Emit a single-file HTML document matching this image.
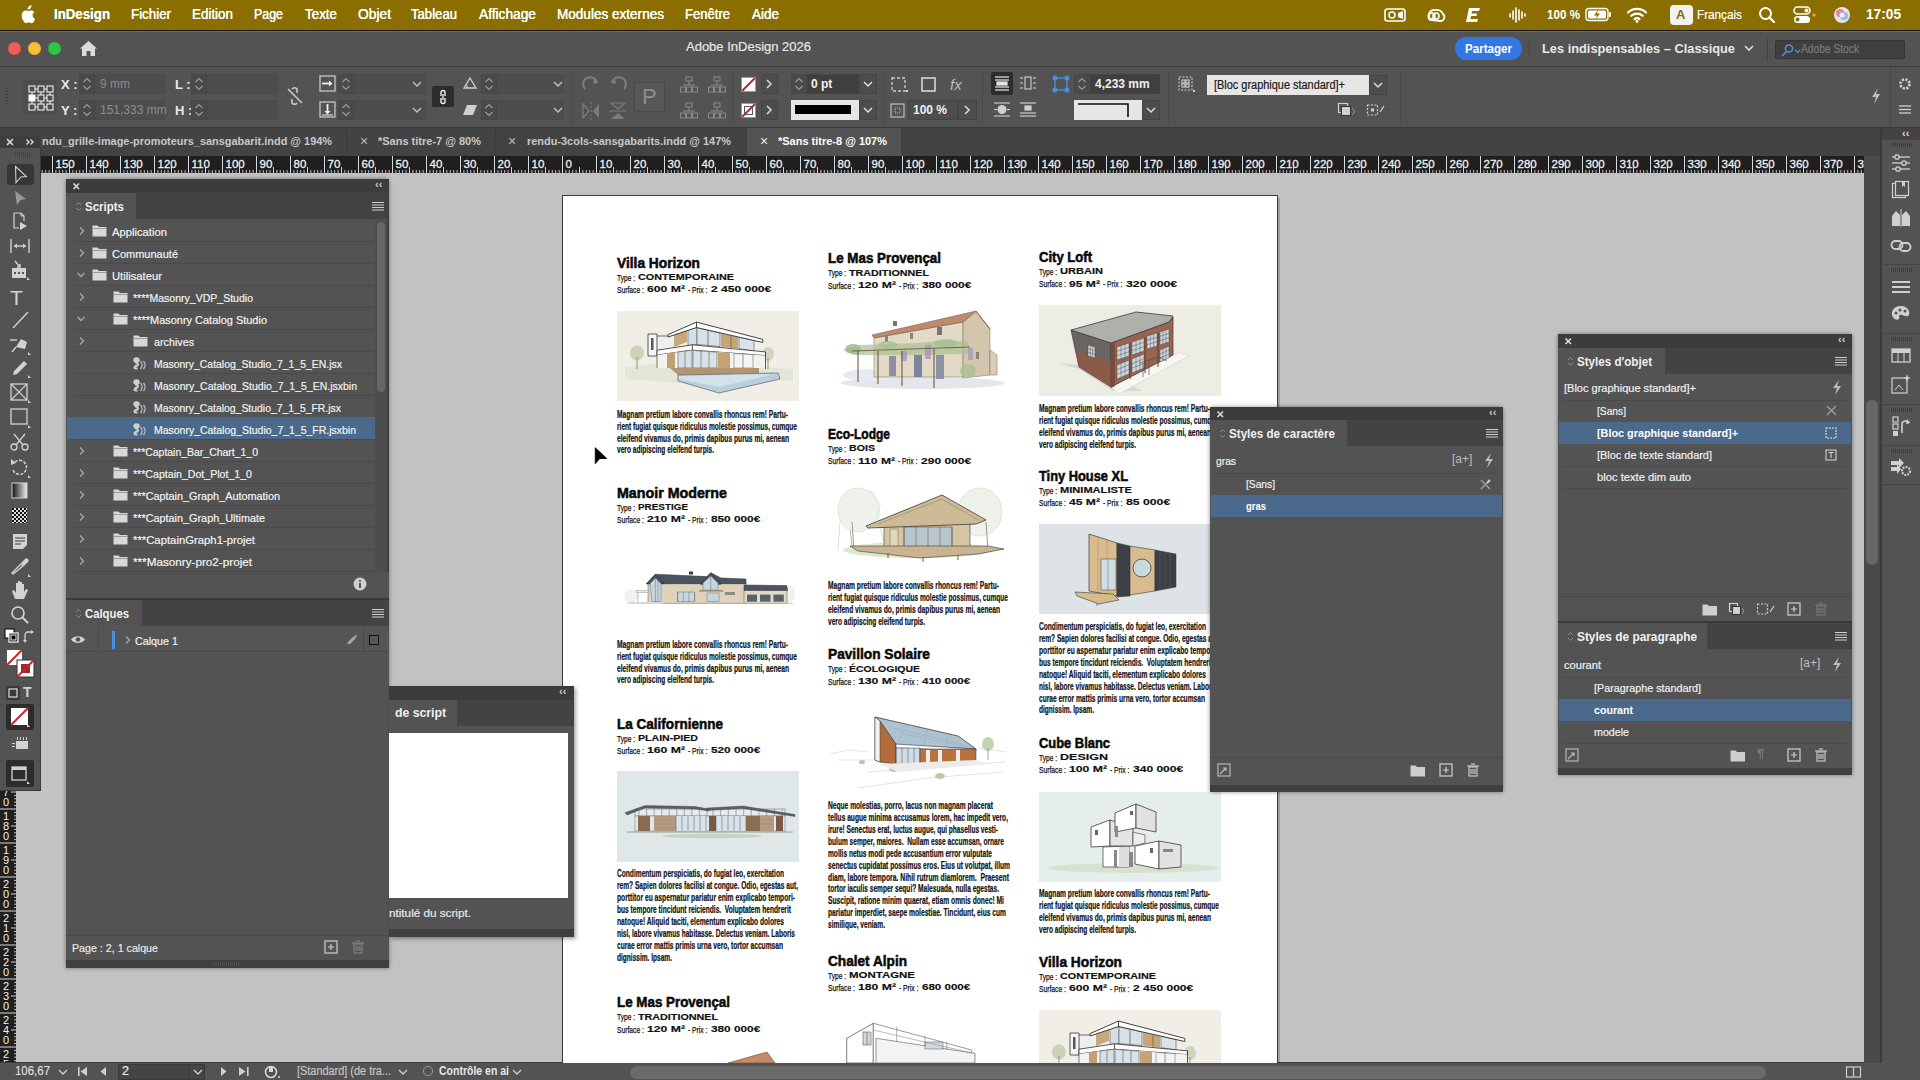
<!DOCTYPE html>
<html><head><meta charset="utf-8"><style>
html,body{margin:0;padding:0;width:1920px;height:1080px;overflow:hidden;background:#c2c2c2;font-family:"Liberation Sans",sans-serif;}
div,span,svg{box-sizing:border-box;}
.pg{position:absolute;color:#000;white-space:nowrap;}
</style></head><body>
<div style="position:absolute;left:0px;top:0px;width:1920px;height:30px;background:#8a6f00;"></div>
<div style="position:absolute;left:0px;top:30px;width:1920px;height:1px;background:#1a1400;"></div>
<svg style="position:absolute;left:19px;top:5px;" width="16" height="19" viewBox="0 0 16 19"><path d="M11.5 3.2c.7-.9 1.2-2 1.1-3.2-1 .1-2.2.7-2.9 1.5-.6.7-1.2 1.9-1 3 1.1.1 2.2-.5 2.8-1.3zM13.6 10.2c0-2 1.6-3 1.7-3-1-1.4-2.4-1.6-2.9-1.6-1.2-.1-2.4.7-3 .7-.6 0-1.6-.7-2.6-.7C5.4 5.6 4.1 6.4 3.4 7.6c-1.5 2.6-.4 6.4 1.1 8.5.7 1 1.5 2.2 2.6 2.1 1-.1 1.4-.7 2.7-.7s1.6.7 2.7.7c1.1 0 1.8-1 2.5-2 .8-1.1 1.1-2.2 1.1-2.3 0 0-2.5-.9-2.5-3.7z" fill="#fff"/></svg>
<div id="f0" style="position:absolute;left:54px;top:6px;font-size:14px;line-height:16px;font-weight:bold;color:#ffffff;white-space:nowrap;transform-origin:0 0;transform:scaleX(0.9471);text-shadow:0 0 0.4px #fff;">InDesign</div>
<div id="f1" style="position:absolute;left:131px;top:6px;font-size:14px;line-height:16px;font-weight:500;color:#ffffff;white-space:nowrap;transform-origin:0 0;transform:scaleX(0.9520);-webkit-text-stroke:0.2px #ffffff;text-shadow:0 0 0.4px #fff;">Fichier</div>
<div id="f2" style="position:absolute;left:192px;top:6px;font-size:14px;line-height:16px;font-weight:500;color:#ffffff;white-space:nowrap;transform-origin:0 0;transform:scaleX(0.9577);-webkit-text-stroke:0.2px #ffffff;text-shadow:0 0 0.4px #fff;">Edition</div>
<div id="f3" style="position:absolute;left:254px;top:6px;font-size:14px;line-height:16px;font-weight:500;color:#ffffff;white-space:nowrap;transform-origin:0 0;transform:scaleX(0.8868);-webkit-text-stroke:0.2px #ffffff;text-shadow:0 0 0.4px #fff;">Page</div>
<div id="f4" style="position:absolute;left:305px;top:6px;font-size:14px;line-height:16px;font-weight:500;color:#ffffff;white-space:nowrap;transform-origin:0 0;transform:scaleX(0.9561);-webkit-text-stroke:0.2px #ffffff;text-shadow:0 0 0.4px #fff;">Texte</div>
<div id="f5" style="position:absolute;left:358px;top:6px;font-size:14px;line-height:16px;font-weight:500;color:#ffffff;white-space:nowrap;transform-origin:0 0;transform:scaleX(0.9860);-webkit-text-stroke:0.2px #ffffff;text-shadow:0 0 0.4px #fff;">Objet</div>
<div id="f6" style="position:absolute;left:411px;top:6px;font-size:14px;line-height:16px;font-weight:500;color:#ffffff;white-space:nowrap;transform-origin:0 0;transform:scaleX(0.9379);-webkit-text-stroke:0.2px #ffffff;text-shadow:0 0 0.4px #fff;">Tableau</div>
<div id="f7" style="position:absolute;left:479px;top:6px;font-size:14px;line-height:16px;font-weight:500;color:#ffffff;white-space:nowrap;transform-origin:0 0;transform:scaleX(0.9806);-webkit-text-stroke:0.2px #ffffff;text-shadow:0 0 0.4px #fff;">Affichage</div>
<div id="f8" style="position:absolute;left:557px;top:6px;font-size:14px;line-height:16px;font-weight:500;color:#ffffff;white-space:nowrap;transform-origin:0 0;transform:scaleX(0.9682);-webkit-text-stroke:0.2px #ffffff;text-shadow:0 0 0.4px #fff;">Modules externes</div>
<div id="f9" style="position:absolute;left:685px;top:6px;font-size:14px;line-height:16px;font-weight:500;color:#ffffff;white-space:nowrap;transform-origin:0 0;transform:scaleX(0.9326);-webkit-text-stroke:0.2px #ffffff;text-shadow:0 0 0.4px #fff;">Fenêtre</div>
<div id="f10" style="position:absolute;left:752px;top:6px;font-size:14px;line-height:16px;font-weight:500;color:#ffffff;white-space:nowrap;transform-origin:0 0;transform:scaleX(0.9632);-webkit-text-stroke:0.2px #ffffff;text-shadow:0 0 0.4px #fff;">Aide</div>
<svg style="position:absolute;left:1384px;top:7px;" width="22" height="16" viewBox="0 0 22 16"><rect x="1" y="2" width="20" height="12" rx="2.5" fill="none" stroke="#fff" stroke-width="1.6"/><circle cx="8" cy="8" r="3" fill="none" stroke="#fff" stroke-width="1.5"/><path d="M14 6 L19 4 L19 12 L14 10 Z" fill="#fff"/></svg>
<svg style="position:absolute;left:1423px;top:5px;" width="23" height="20" viewBox="0 0 23 20"><path d="M7 15 A6 6 0 0 1 12 5 A7 7 0 0 1 20 9 A4 4 0 0 1 18 16 Z" fill="none" stroke="#fff" stroke-width="1.8"/><circle cx="9" cy="11" r="3" fill="none" stroke="#fff" stroke-width="1.6"/><circle cx="13" cy="11" r="3" fill="none" stroke="#fff" stroke-width="1.6"/></svg>
<svg style="position:absolute;left:1464px;top:6px;" width="18" height="18" viewBox="0 0 18 18"><path d="M5 2 H16 L15 5 H8 L7.5 7.5 H13 L12.5 10 H7 L6.4 13 H14 L13 16 H2 Z" fill="#fff"/></svg>
<svg style="position:absolute;left:1508px;top:6px;" width="18" height="18" viewBox="0 0 18 18"><g stroke="#fff" stroke-width="1.6" stroke-linecap="round"><line x1="2" y1="8" x2="2" y2="11"/><line x1="5" y1="5" x2="5" y2="13"/><line x1="8" y1="2" x2="8" y2="16"/><line x1="11" y1="4" x2="11" y2="14"/><line x1="14" y1="6" x2="14" y2="12"/><line x1="17" y1="8" x2="17" y2="10"/></g></svg>
<div id="f11" style="position:absolute;left:1547px;top:7px;font-size:13px;line-height:15px;font-weight:bold;color:#fff;white-space:nowrap;transform-origin:0 0;transform:scaleX(0.8949);">100 %</div>
<svg style="position:absolute;left:1585px;top:7px;" width="27" height="15" viewBox="0 0 27 15"><rect x="1" y="1.5" width="22" height="12" rx="3" fill="none" stroke="#fff" stroke-width="1.4"/><rect x="3" y="3.5" width="18" height="8" rx="1.5" fill="#fff"/><rect x="24" y="5" width="2" height="5" rx="1" fill="#fff"/><path d="M13 3 L9 8.5 H12 L11 12 L15 6.5 H12 Z" fill="#8a6f00"/></svg>
<svg style="position:absolute;left:1626px;top:6px;" width="22" height="17" viewBox="0 0 22 17"><path d="M2 6.5 A13 13 0 0 1 20 6.5" fill="none" stroke="#fff" stroke-width="2.2" stroke-linecap="round"/><path d="M5.3 9.8 A8.5 8.5 0 0 1 16.7 9.8" fill="none" stroke="#fff" stroke-width="2.2" stroke-linecap="round"/><path d="M8.6 13 A4 4 0 0 1 13.4 13" fill="none" stroke="#fff" stroke-width="2.2" stroke-linecap="round"/><circle cx="11" cy="15.5" r="1.4" fill="#fff"/></svg>
<div style="position:absolute;left:1670px;top:5px;width:23px;height:20px;background:#f2f2f2;border-radius:4px;"></div>
<div style="position:absolute;left:1676px;top:7px;font-size:13px;line-height:15px;color:#8a6f00;font-weight:bold;white-space:nowrap;">A</div>
<div id="f12" style="position:absolute;left:1697px;top:7px;font-size:13px;line-height:15px;font-weight:500;color:#fff;white-space:nowrap;transform-origin:0 0;transform:scaleX(0.9025);-webkit-text-stroke:0.2px #fff;">Français</div>
<svg style="position:absolute;left:1758px;top:6px;" width="18" height="18" viewBox="0 0 18 18"><circle cx="7.5" cy="7.5" r="5.5" fill="none" stroke="#fff" stroke-width="2"/><line x1="11.5" y1="11.5" x2="16" y2="16" stroke="#fff" stroke-width="2.2" stroke-linecap="round"/></svg>
<svg style="position:absolute;left:1792px;top:5px;" width="26" height="20" viewBox="0 0 26 20"><rect x="2" y="2" width="16" height="7" rx="3.5" fill="none" stroke="#fff" stroke-width="1.6"/><circle cx="14.5" cy="5.5" r="2" fill="#fff"/><rect x="2" y="11" width="16" height="7" rx="3.5" fill="#fff"/><circle cx="5.5" cy="14.5" r="2" fill="#8a6f00"/><circle cx="22" cy="10" r="1.6" fill="#f5a623"/></svg>
<svg style="position:absolute;left:1833px;top:6px;" width="18" height="18" viewBox="0 0 18 18"><circle cx="9" cy="9" r="8" fill="#e9e0ea"/><circle cx="7" cy="7" r="4" fill="#e66a8a" opacity="0.8"/><circle cx="11" cy="10" r="4" fill="#7ab0f0" opacity="0.8"/><circle cx="9" cy="9" r="2.5" fill="#fff" opacity="0.8"/></svg>
<div id="f13" style="position:absolute;left:1866px;top:6px;font-size:14px;line-height:16px;font-weight:bold;color:#fff;white-space:nowrap;transform-origin:0 0;transform:scaleX(0.9773);">17:05</div>
<div style="position:absolute;left:0px;top:31px;width:1920px;height:36px;background:#535353;"></div>
<div style="position:absolute;left:0px;top:31px;width:1920px;height:1px;background:#6a6a6a;"></div>
<div style="position:absolute;left:0px;top:66px;width:1920px;height:1px;background:#3c3c3c;"></div>
<div style="position:absolute;left:7.5px;top:41.5px;width:13px;height:13px;border-radius:50%;background:#ec5f57;box-shadow:inset 0 0 0 0.6px #d04a42;"></div>
<div style="position:absolute;left:27.5px;top:41.5px;width:13px;height:13px;border-radius:50%;background:#f4bd3b;box-shadow:inset 0 0 0 0.6px #d9a22b;"></div>
<div style="position:absolute;left:47.5px;top:41.5px;width:13px;height:13px;border-radius:50%;background:#35c448;box-shadow:inset 0 0 0 0.6px #28a83a;"></div>
<svg style="position:absolute;left:79px;top:40px;" width="19" height="17" viewBox="0 0 19 17"><path d="M9.5 1 L18 8.5 L16 8.5 L16 16 L11.5 16 L11.5 11 L7.5 11 L7.5 16 L3 16 L3 8.5 L1 8.5 Z" fill="#dcdcdc"/></svg>
<div id="f14" style="position:absolute;left:686px;top:39px;font-size:13px;line-height:15px;font-weight:normal;color:#e6e6e6;white-space:nowrap;transform-origin:0 0;transform:scaleX(0.9996);-webkit-text-stroke:0.2px #e6e6e6;">Adobe InDesign 2026</div>
<div style="position:absolute;left:1455px;top:37px;width:67px;height:23px;background:#3277e3;border-radius:11.5px;"></div>
<div id="f15" style="position:absolute;left:1465px;top:41px;font-size:13px;line-height:15px;font-weight:bold;color:#ffffff;white-space:nowrap;transform-origin:0 0;transform:scaleX(0.8910);">Partager</div>
<div style="position:absolute;left:1529px;top:38px;width:1px;height:22px;background:#4a4a4a;"></div>
<div id="f16" style="position:absolute;left:1542px;top:41px;font-size:13px;line-height:15px;font-weight:bold;color:#e8e8e8;white-space:nowrap;transform-origin:0 0;transform:scaleX(0.9856);">Les indispensables – Classique</div>
<svg style="position:absolute;left:1743px;top:43px;" width="12" height="10" viewBox="0 0 12 10"><path d="M2 3 L6 7 L10 3" fill="none" stroke="#ddd" stroke-width="1.6"/></svg>
<div style="position:absolute;left:1767px;top:38px;width:1px;height:22px;background:#444;"></div>
<div style="position:absolute;left:1775px;top:40px;width:130px;height:19px;background:#3f3f3f;border:1px solid #363636;border-radius:2px;"></div>
<svg style="position:absolute;left:1780px;top:43px;" width="22" height="14" viewBox="0 0 22 14"><circle cx="9" cy="5.5" r="3.6" fill="none" stroke="#5b8fd6" stroke-width="1.5"/><line x1="6.5" y1="8.5" x2="2" y2="13" stroke="#5b8fd6" stroke-width="1.6"/><path d="M15 7 L17.5 9.5 L20 7" fill="none" stroke="#5b8fd6" stroke-width="1.2"/></svg>
<div id="f17" style="position:absolute;left:1801px;top:42px;font-size:12px;line-height:14px;font-weight:normal;color:#7c7c7c;white-space:nowrap;transform-origin:0 0;transform:scaleX(0.8524);-webkit-text-stroke:0.2px #7c7c7c;">Adobe Stock</div>
<div style="position:absolute;left:0px;top:67px;width:1920px;height:61px;background:#535353;"></div>
<div style="position:absolute;left:0px;top:127px;width:1920px;height:1px;background:#3a3a3a;"></div>
<div style="position:absolute;left:5px;top:88px;width:3px;height:1px;background:#3e3e3e;"></div>
<div style="position:absolute;left:5px;top:91px;width:3px;height:1px;background:#3e3e3e;"></div>
<div style="position:absolute;left:5px;top:94px;width:3px;height:1px;background:#3e3e3e;"></div>
<div style="position:absolute;left:5px;top:97px;width:3px;height:1px;background:#3e3e3e;"></div>
<div style="position:absolute;left:5px;top:100px;width:3px;height:1px;background:#3e3e3e;"></div>
<div style="position:absolute;left:5px;top:103px;width:3px;height:1px;background:#3e3e3e;"></div>
<div style="position:absolute;left:23px;top:80px;width:34px;height:34px;background:#4d4d4d;"></div>
<svg style="position:absolute;left:25px;top:82px;" width="30" height="30" viewBox="0 0 30 30"><rect x="4" y="4" width="6" height="6" fill="none" stroke="#f0f0f0" stroke-width="1.1"/><rect x="4" y="13" width="6" height="6" fill="#ffffff" stroke="#f0f0f0" stroke-width="1.1"/><rect x="4" y="22" width="6" height="6" fill="none" stroke="#f0f0f0" stroke-width="1.1"/><line x1="10" y1="7" x2="13" y2="7" stroke="#f0f0f0"/><line x1="19" y1="7" x2="22" y2="7" stroke="#f0f0f0"/><line x1="7" y1="10" x2="7" y2="13" stroke="#f0f0f0"/><line x1="7" y1="19" x2="7" y2="22" stroke="#f0f0f0"/><rect x="13" y="4" width="6" height="6" fill="none" stroke="#f0f0f0" stroke-width="1.1"/><rect x="13" y="13" width="6" height="6" fill="none" stroke="#f0f0f0" stroke-width="1.1"/><rect x="13" y="22" width="6" height="6" fill="none" stroke="#f0f0f0" stroke-width="1.1"/><line x1="10" y1="16" x2="13" y2="16" stroke="#f0f0f0"/><line x1="19" y1="16" x2="22" y2="16" stroke="#f0f0f0"/><line x1="16" y1="10" x2="16" y2="13" stroke="#f0f0f0"/><line x1="16" y1="19" x2="16" y2="22" stroke="#f0f0f0"/><rect x="22" y="4" width="6" height="6" fill="none" stroke="#f0f0f0" stroke-width="1.1"/><rect x="22" y="13" width="6" height="6" fill="none" stroke="#f0f0f0" stroke-width="1.1"/><rect x="22" y="22" width="6" height="6" fill="none" stroke="#f0f0f0" stroke-width="1.1"/><line x1="10" y1="25" x2="13" y2="25" stroke="#f0f0f0"/><line x1="19" y1="25" x2="22" y2="25" stroke="#f0f0f0"/><line x1="25" y1="10" x2="25" y2="13" stroke="#f0f0f0"/><line x1="25" y1="19" x2="25" y2="22" stroke="#f0f0f0"/></svg>
<div style="position:absolute;left:61px;top:77px;font-size:13px;line-height:15px;color:#e8e8e8;font-weight:bold;white-space:nowrap;">X :</div>
<div style="position:absolute;left:61px;top:103px;font-size:13px;line-height:15px;color:#e8e8e8;font-weight:bold;white-space:nowrap;">Y :</div>
<div style="position:absolute;left:79px;top:74px;width:16px;height:20px;background:#4a4a4a;border:1px solid #464646;"></div>
<svg style="position:absolute;left:82px;top:77px;" width="10" height="14" viewBox="0 0 10 14"><path d="M1.5 5 L5 1.5 L8.5 5" fill="none" stroke="#9a9a9a" stroke-width="1.2"/><path d="M1.5 9 L5 12.5 L8.5 9" fill="none" stroke="#9a9a9a" stroke-width="1.2"/></svg>
<div style="position:absolute;left:95px;top:74px;width:70px;height:20px;background:#4d4d4d;border:1px solid #4b4b4b;"></div>
<div style="position:absolute;left:100px;top:77px;font-size:12px;line-height:14px;color:#8c8c8c;font-weight:normal;white-space:nowrap;">9 mm</div>
<div style="position:absolute;left:79px;top:100px;width:16px;height:20px;background:#4a4a4a;border:1px solid #464646;"></div>
<svg style="position:absolute;left:82px;top:103px;" width="10" height="14" viewBox="0 0 10 14"><path d="M1.5 5 L5 1.5 L8.5 5" fill="none" stroke="#9a9a9a" stroke-width="1.2"/><path d="M1.5 9 L5 12.5 L8.5 9" fill="none" stroke="#9a9a9a" stroke-width="1.2"/></svg>
<div style="position:absolute;left:95px;top:100px;width:70px;height:20px;background:#4d4d4d;border:1px solid #4b4b4b;"></div>
<div style="position:absolute;left:100px;top:103px;font-size:12px;line-height:14px;color:#8c8c8c;font-weight:normal;white-space:nowrap;">151,333 mm</div>
<div style="position:absolute;left:175px;top:77px;font-size:13px;line-height:15px;color:#e8e8e8;font-weight:bold;white-space:nowrap;">L :</div>
<div style="position:absolute;left:175px;top:103px;font-size:13px;line-height:15px;color:#e8e8e8;font-weight:bold;white-space:nowrap;">H :</div>
<div style="position:absolute;left:191px;top:74px;width:16px;height:20px;background:#4a4a4a;border:1px solid #464646;"></div>
<svg style="position:absolute;left:194px;top:77px;" width="10" height="14" viewBox="0 0 10 14"><path d="M1.5 5 L5 1.5 L8.5 5" fill="none" stroke="#9a9a9a" stroke-width="1.2"/><path d="M1.5 9 L5 12.5 L8.5 9" fill="none" stroke="#9a9a9a" stroke-width="1.2"/></svg>
<div style="position:absolute;left:207px;top:74px;width:71px;height:20px;background:#4d4d4d;border:1px solid #4b4b4b;"></div>
<div style="position:absolute;left:191px;top:100px;width:16px;height:20px;background:#4a4a4a;border:1px solid #464646;"></div>
<svg style="position:absolute;left:194px;top:103px;" width="10" height="14" viewBox="0 0 10 14"><path d="M1.5 5 L5 1.5 L8.5 5" fill="none" stroke="#9a9a9a" stroke-width="1.2"/><path d="M1.5 9 L5 12.5 L8.5 9" fill="none" stroke="#9a9a9a" stroke-width="1.2"/></svg>
<div style="position:absolute;left:207px;top:100px;width:71px;height:20px;background:#4d4d4d;border:1px solid #4b4b4b;"></div>
<svg style="position:absolute;left:286px;top:86px;" width="18" height="20" viewBox="0 0 18 20"><path d="M6 3 A3 3 0 0 1 11 3 L11 7" fill="none" stroke="#cfcfcf" stroke-width="1.5"/><path d="M11 17 A3 3 0 0 1 6 17 L6 13" fill="none" stroke="#cfcfcf" stroke-width="1.5"/><line x1="2" y1="3" x2="16" y2="17" stroke="#cfcfcf" stroke-width="1.5"/></svg>
<svg style="position:absolute;left:319px;top:74px;" width="17" height="20" viewBox="0 0 17 20"><rect x="1" y="2" width="15" height="15" fill="none" stroke="#cfcfcf" stroke-width="1.2"/><line x1="3" y1="9.5" x2="12" y2="9.5" stroke="#eee" stroke-width="1.8"/><path d="M10 6.5 L13.5 9.5 L10 12.5Z" fill="#eee"/></svg>
<svg style="position:absolute;left:319px;top:100px;" width="17" height="20" viewBox="0 0 17 20"><rect x="1" y="2" width="15" height="15" fill="none" stroke="#cfcfcf" stroke-width="1.2"/><line x1="8.5" y1="4" x2="8.5" y2="13" stroke="#eee" stroke-width="1.8"/><path d="M5.5 11 L8.5 14.5 L11.5 11Z" fill="#eee"/><line x1="3" y1="15" x2="14" y2="15" stroke="#eee"/></svg>
<div style="position:absolute;left:338px;top:74px;width:16px;height:20px;background:#4a4a4a;border:1px solid #464646;"></div>
<svg style="position:absolute;left:341px;top:77px;" width="10" height="14" viewBox="0 0 10 14"><path d="M1.5 5 L5 1.5 L8.5 5" fill="none" stroke="#9a9a9a" stroke-width="1.2"/><path d="M1.5 9 L5 12.5 L8.5 9" fill="none" stroke="#9a9a9a" stroke-width="1.2"/></svg>
<div style="position:absolute;left:354px;top:74px;width:72px;height:20px;background:#4d4d4d;border:1px solid #4b4b4b;"></div>
<svg style="position:absolute;left:411px;top:79px;" width="12" height="10" viewBox="0 0 12 10"><path d="M2 3 L6 7 L10 3" fill="none" stroke="#bdbdbd" stroke-width="1.5"/></svg>
<div style="position:absolute;left:338px;top:100px;width:16px;height:20px;background:#4a4a4a;border:1px solid #464646;"></div>
<svg style="position:absolute;left:341px;top:103px;" width="10" height="14" viewBox="0 0 10 14"><path d="M1.5 5 L5 1.5 L8.5 5" fill="none" stroke="#9a9a9a" stroke-width="1.2"/><path d="M1.5 9 L5 12.5 L8.5 9" fill="none" stroke="#9a9a9a" stroke-width="1.2"/></svg>
<div style="position:absolute;left:354px;top:100px;width:72px;height:20px;background:#4d4d4d;border:1px solid #4b4b4b;"></div>
<svg style="position:absolute;left:411px;top:105px;" width="12" height="10" viewBox="0 0 12 10"><path d="M2 3 L6 7 L10 3" fill="none" stroke="#bdbdbd" stroke-width="1.5"/></svg>
<div style="position:absolute;left:432px;top:86px;width:22px;height:21px;background:#2c2c2c;border-radius:2px;"></div>
<svg style="position:absolute;left:437px;top:89px;" width="12" height="16" viewBox="0 0 12 16"><path d="M4 7 L4 3.5 A2 2 0 0 1 8 3.5 L8 7" fill="none" stroke="#eee" stroke-width="1.4"/><path d="M4 9 L4 12.5 A2 2 0 0 0 8 12.5 L8 9" fill="none" stroke="#eee" stroke-width="1.4"/><line x1="6" y1="5" x2="6" y2="11" stroke="#eee" stroke-width="1.3"/></svg>
<svg style="position:absolute;left:462px;top:76px;" width="16" height="14" viewBox="0 0 16 14"><path d="M2 12 L14 12 L8 2 Z" fill="none" stroke="#cfcfcf" stroke-width="1.3"/><path d="M5 12 A4 4 0 0 0 4 8" fill="none" stroke="#cfcfcf"/></svg>
<svg style="position:absolute;left:462px;top:103px;" width="16" height="14" viewBox="0 0 16 14"><path d="M5 2 L15 2 L11 12 L1 12 Z" fill="#cfcfcf"/></svg>
<div style="position:absolute;left:481px;top:74px;width:16px;height:20px;background:#4a4a4a;border:1px solid #464646;"></div>
<svg style="position:absolute;left:484px;top:77px;" width="10" height="14" viewBox="0 0 10 14"><path d="M1.5 5 L5 1.5 L8.5 5" fill="none" stroke="#9a9a9a" stroke-width="1.2"/><path d="M1.5 9 L5 12.5 L8.5 9" fill="none" stroke="#9a9a9a" stroke-width="1.2"/></svg>
<div style="position:absolute;left:497px;top:74px;width:67px;height:20px;background:#4d4d4d;border:1px solid #4b4b4b;"></div>
<svg style="position:absolute;left:552px;top:79px;" width="12" height="10" viewBox="0 0 12 10"><path d="M2 3 L6 7 L10 3" fill="none" stroke="#bdbdbd" stroke-width="1.5"/></svg>
<div style="position:absolute;left:481px;top:100px;width:16px;height:20px;background:#4a4a4a;border:1px solid #464646;"></div>
<svg style="position:absolute;left:484px;top:103px;" width="10" height="14" viewBox="0 0 10 14"><path d="M1.5 5 L5 1.5 L8.5 5" fill="none" stroke="#9a9a9a" stroke-width="1.2"/><path d="M1.5 9 L5 12.5 L8.5 9" fill="none" stroke="#9a9a9a" stroke-width="1.2"/></svg>
<div style="position:absolute;left:497px;top:100px;width:67px;height:20px;background:#4d4d4d;border:1px solid #4b4b4b;"></div>
<svg style="position:absolute;left:552px;top:105px;" width="12" height="10" viewBox="0 0 12 10"><path d="M2 3 L6 7 L10 3" fill="none" stroke="#bdbdbd" stroke-width="1.5"/></svg>
<div style="position:absolute;left:572px;top:70px;width:1px;height:54px;background:#4a4a4a;"></div>
<svg style="position:absolute;left:581px;top:75px;" width="20" height="20" viewBox="0 0 20 20"><path d="M4 14 A7 7 0 1 1 16 8" fill="none" stroke="#7d7d7d" stroke-width="2"/><path d="M13 3 L17 8 L12 9Z" fill="#7d7d7d"/></svg>
<svg style="position:absolute;left:608px;top:75px;" width="20" height="20" viewBox="0 0 20 20"><path d="M16 14 A7 7 0 1 0 4 8" fill="none" stroke="#7d7d7d" stroke-width="2"/><path d="M7 3 L3 8 L8 9Z" fill="#7d7d7d"/></svg>
<svg style="position:absolute;left:581px;top:101px;" width="20" height="20" viewBox="0 0 20 20"><path d="M2 3 L8 10 L2 17Z" fill="none" stroke="#7d7d7d" stroke-width="1.2"/><path d="M18 3 L12 10 L18 17Z" fill="#7d7d7d"/><line x1="10" y1="1" x2="10" y2="19" stroke="#7d7d7d" stroke-dasharray="2 2"/></svg>
<svg style="position:absolute;left:608px;top:101px;" width="20" height="20" viewBox="0 0 20 20"><path d="M3 2 L10 8 L17 2Z" fill="none" stroke="#7d7d7d" stroke-width="1.2"/><path d="M3 18 L10 12 L17 18Z" fill="#7d7d7d"/><line x1="1" y1="10" x2="19" y2="10" stroke="#7d7d7d"/></svg>
<div style="position:absolute;left:634px;top:82px;width:31px;height:30px;background:#575757;border:1px solid #4a4a4a;"></div>
<div style="position:absolute;left:642px;top:85px;font-size:22px;line-height:24px;color:#8e8e8e;font-weight:normal;white-space:nowrap;font-family:"Liberation Serif",serif;">P</div>
<svg style="position:absolute;left:679px;top:76px;" width="20" height="18" viewBox="0 0 20 18"><rect x="7" y="1" width="6" height="4" fill="none" stroke="#8a8a8a"/><line x1="10" y1="5" x2="10" y2="9" stroke="#8a8a8a"/><line x1="4" y1="9" x2="16" y2="9" stroke="#8a8a8a"/><rect x="1.5" y="11" width="5" height="5" fill="none" stroke="#8a8a8a"/><rect x="7.5" y="11" width="5" height="5" fill="none" stroke="#8a8a8a"/><rect x="13.5" y="11" width="5" height="5" fill="none" stroke="#8a8a8a"/></svg>
<svg style="position:absolute;left:707px;top:76px;" width="20" height="18" viewBox="0 0 20 18"><rect x="7" y="1" width="6" height="4" fill="none" stroke="#8a8a8a"/><line x1="10" y1="5" x2="10" y2="9" stroke="#8a8a8a"/><line x1="4" y1="9" x2="16" y2="9" stroke="#8a8a8a"/><rect x="1.5" y="11" width="5" height="5" fill="none" stroke="#8a8a8a"/><rect x="7.5" y="11" width="5" height="5" fill="none" stroke="#8a8a8a"/><rect x="13.5" y="11" width="5" height="5" fill="none" stroke="#8a8a8a"/></svg>
<svg style="position:absolute;left:679px;top:102px;" width="20" height="18" viewBox="0 0 20 18"><rect x="7" y="1" width="6" height="4" fill="none" stroke="#8a8a8a"/><line x1="10" y1="5" x2="10" y2="9" stroke="#8a8a8a"/><line x1="4" y1="9" x2="16" y2="9" stroke="#8a8a8a"/><rect x="1.5" y="11" width="5" height="5" fill="none" stroke="#8a8a8a"/><rect x="7.5" y="11" width="5" height="5" fill="none" stroke="#8a8a8a"/><rect x="13.5" y="11" width="5" height="5" fill="none" stroke="#8a8a8a"/></svg>
<svg style="position:absolute;left:707px;top:102px;" width="20" height="18" viewBox="0 0 20 18"><rect x="7" y="1" width="6" height="4" fill="none" stroke="#8a8a8a"/><line x1="10" y1="5" x2="10" y2="9" stroke="#8a8a8a"/><line x1="4" y1="9" x2="16" y2="9" stroke="#8a8a8a"/><rect x="1.5" y="11" width="5" height="5" fill="none" stroke="#8a8a8a"/><rect x="7.5" y="11" width="5" height="5" fill="none" stroke="#8a8a8a"/><rect x="13.5" y="11" width="5" height="5" fill="none" stroke="#8a8a8a"/></svg>
<div style="position:absolute;left:733px;top:70px;width:1px;height:54px;background:#4a4a4a;"></div>
<svg style="position:absolute;left:741px;top:77px;" width="15" height="15" viewBox="0 0 15 15"><rect x="0.5" y="0.5" width="14" height="14" fill="#fff" stroke="#999"/><line x1="1" y1="14" x2="14" y2="1" stroke="#c0272d" stroke-width="2"/></svg>
<svg style="position:absolute;left:741px;top:103px;" width="15" height="15" viewBox="0 0 15 15"><rect x="0.5" y="0.5" width="14" height="14" fill="#fff" stroke="#999"/><line x1="1" y1="14" x2="14" y2="1" stroke="#c0272d" stroke-width="2"/><rect x="3.5" y="3.5" width="8" height="8" fill="none" stroke="#555" stroke-width="1"/></svg>
<div style="position:absolute;left:761px;top:74px;width:17px;height:20px;background:#4d4d4d;border:1px solid #444;"></div>
<svg style="position:absolute;left:765px;top:79px;" width="9" height="10" viewBox="0 0 9 10"><path d="M2 1 L6 5 L2 9" fill="none" stroke="#ddd" stroke-width="1.5"/></svg>
<div style="position:absolute;left:761px;top:100px;width:17px;height:20px;background:#4d4d4d;border:1px solid #444;"></div>
<svg style="position:absolute;left:765px;top:105px;" width="9" height="10" viewBox="0 0 9 10"><path d="M2 1 L6 5 L2 9" fill="none" stroke="#ddd" stroke-width="1.5"/></svg>
<div style="position:absolute;left:791px;top:74px;width:16px;height:20px;background:#4a4a4a;border:1px solid #464646;"></div>
<svg style="position:absolute;left:794px;top:77px;" width="10" height="14" viewBox="0 0 10 14"><path d="M1.5 5 L5 1.5 L8.5 5" fill="none" stroke="#9a9a9a" stroke-width="1.2"/><path d="M1.5 9 L5 12.5 L8.5 9" fill="none" stroke="#9a9a9a" stroke-width="1.2"/></svg>
<div style="position:absolute;left:807px;top:74px;width:52px;height:20px;background:#3f3f3f;border:1px solid #444;"></div>
<div style="position:absolute;left:811px;top:77px;font-size:12px;line-height:14px;color:#f0f0f0;font-weight:bold;white-space:nowrap;">0 pt</div>
<div style="position:absolute;left:859px;top:74px;width:18px;height:20px;background:#4d4d4d;border:1px solid #444;"></div>
<svg style="position:absolute;left:862px;top:79px;" width="12" height="10" viewBox="0 0 12 10"><path d="M2 3 L6 7 L10 3" fill="none" stroke="#ddd" stroke-width="1.5"/></svg>
<div style="position:absolute;left:791px;top:100px;width:68px;height:20px;background:#e6e6e6;"></div>
<div style="position:absolute;left:795px;top:105px;width:56px;height:9px;background:#000000;"></div>
<div style="position:absolute;left:859px;top:100px;width:18px;height:20px;background:#4d4d4d;border:1px solid #444;"></div>
<svg style="position:absolute;left:862px;top:105px;" width="12" height="10" viewBox="0 0 12 10"><path d="M2 3 L6 7 L10 3" fill="none" stroke="#ddd" stroke-width="1.5"/></svg>
<div style="position:absolute;left:884px;top:70px;width:1px;height:54px;background:#4a4a4a;"></div>
<svg style="position:absolute;left:890px;top:76px;" width="20" height="18" viewBox="0 0 20 18"><rect x="2" y="2" width="13" height="13" fill="none" stroke="#cfcfcf" stroke-width="1.3" stroke-dasharray="3 2"/><rect x="16" y="14" width="2" height="2" fill="#cfcfcf"/></svg>
<svg style="position:absolute;left:920px;top:76px;" width="18" height="18" viewBox="0 0 18 18"><rect x="2" y="2" width="13" height="13" fill="none" stroke="#e0e0e0" stroke-width="1.5"/></svg>
<div style="position:absolute;left:950px;top:76px;font-size:15px;line-height:17px;color:#bbbbbb;font-weight:normal;white-space:nowrap;font-family:"Liberation Serif",serif;"><i>fx</i></div>
<svg style="position:absolute;left:889px;top:102px;" width="18" height="18" viewBox="0 0 18 18"><rect x="2" y="2" width="13" height="13" fill="none" stroke="#bdbdbd" stroke-width="1.2"/><rect x="6" y="6" width="5" height="5" fill="none" stroke="#bdbdbd" stroke-dasharray="1 1"/></svg>
<div style="position:absolute;left:908px;top:100px;width:50px;height:20px;background:#4d4d4d;border:1px solid #444;"></div>
<div style="position:absolute;left:913px;top:103px;font-size:12px;line-height:14px;color:#f0f0f0;font-weight:bold;white-space:nowrap;">100 %</div>
<div style="position:absolute;left:958px;top:100px;width:19px;height:20px;background:#4d4d4d;border:1px solid #444;"></div>
<svg style="position:absolute;left:963px;top:105px;" width="9" height="10" viewBox="0 0 9 10"><path d="M2 1 L6 5 L2 9" fill="none" stroke="#ddd" stroke-width="1.5"/></svg>
<div style="position:absolute;left:982px;top:70px;width:1px;height:54px;background:#4a4a4a;"></div>
<div style="position:absolute;left:991px;top:72px;width:22px;height:23px;background:#2d2d2d;border-radius:2px;"></div>
<svg style="position:absolute;left:993px;top:75px;" width="18" height="17" viewBox="0 0 18 17"><g stroke="#e6e6e6" stroke-width="1.2"><line x1="2" y1="2" x2="16" y2="2"/><line x1="2" y1="5" x2="16" y2="5"/><line x1="2" y1="12" x2="16" y2="12"/><line x1="2" y1="15" x2="16" y2="15"/><rect x="4" y="7" width="10" height="3" fill="#e6e6e6"/></g></svg>
<svg style="position:absolute;left:1019px;top:75px;" width="18" height="17" viewBox="0 0 18 17"><g stroke="#cfcfcf" stroke-width="1.1"><line x1="1" y1="3" x2="4" y2="3"/><line x1="14" y1="3" x2="17" y2="3"/><line x1="1" y1="8" x2="4" y2="8"/><line x1="14" y1="8" x2="17" y2="8"/><line x1="1" y1="13" x2="4" y2="13"/><line x1="14" y1="13" x2="17" y2="13"/><rect x="6" y="2" width="6" height="12" fill="none"/></g></svg>
<svg style="position:absolute;left:993px;top:101px;" width="18" height="17" viewBox="0 0 18 17"><g stroke="#cfcfcf" stroke-width="1.1"><line x1="1" y1="2" x2="17" y2="2"/><line x1="1" y1="15" x2="17" y2="15"/><line x1="1" y1="8.5" x2="4" y2="8.5"/><line x1="14" y1="8.5" x2="17" y2="8.5"/></g><circle cx="9" cy="8.5" r="4.5" fill="#cfcfcf"/></svg>
<svg style="position:absolute;left:1019px;top:101px;" width="18" height="17" viewBox="0 0 18 17"><g stroke="#cfcfcf" stroke-width="1.2"><line x1="1" y1="2" x2="17" y2="2"/><line x1="1" y1="15" x2="17" y2="15"/><line x1="1" y1="12" x2="17" y2="12"/><rect x="6" y="5" width="6" height="4" fill="#cfcfcf"/></g></svg>
<svg style="position:absolute;left:1052px;top:75px;" width="18" height="19" viewBox="0 0 18 19"><rect x="3" y="3" width="12" height="12" fill="none" stroke="#4a90e2" stroke-width="1.3"/><g fill="#4a90e2"><circle cx="3" cy="3" r="2.5"/><circle cx="15" cy="3" r="2.5"/><circle cx="3" cy="15" r="2.5"/><circle cx="15" cy="15" r="2.5"/></g></svg>
<div style="position:absolute;left:1074px;top:74px;width:16px;height:20px;background:#4a4a4a;border:1px solid #464646;"></div>
<svg style="position:absolute;left:1077px;top:77px;" width="10" height="14" viewBox="0 0 10 14"><path d="M1.5 5 L5 1.5 L8.5 5" fill="none" stroke="#9a9a9a" stroke-width="1.2"/><path d="M1.5 9 L5 12.5 L8.5 9" fill="none" stroke="#9a9a9a" stroke-width="1.2"/></svg>
<div style="position:absolute;left:1090px;top:74px;width:70px;height:20px;background:#3f3f3f;border:1px solid #444;"></div>
<div style="position:absolute;left:1095px;top:77px;font-size:12px;line-height:14px;color:#f0f0f0;font-weight:bold;white-space:nowrap;">4,233 mm</div>
<div style="position:absolute;left:1074px;top:100px;width:68px;height:20px;background:#e6e6e6;"></div>
<svg style="position:absolute;left:1077px;top:102px;" width="58" height="16" viewBox="0 0 58 16"><path d="M1 2 L51 2 L51 15" fill="none" stroke="#111" stroke-width="1.6"/></svg>
<div style="position:absolute;left:1142px;top:100px;width:18px;height:20px;background:#4d4d4d;border:1px solid #444;"></div>
<svg style="position:absolute;left:1145px;top:105px;" width="12" height="10" viewBox="0 0 12 10"><path d="M2 3 L6 7 L10 3" fill="none" stroke="#ddd" stroke-width="1.5"/></svg>
<div style="position:absolute;left:1168px;top:70px;width:1px;height:54px;background:#4a4a4a;"></div>
<svg style="position:absolute;left:1177px;top:75px;" width="19" height="19" viewBox="0 0 19 19"><g fill="none" stroke="#cfcfcf" stroke-width="1.1"><rect x="2" y="2" width="13" height="13" stroke-dasharray="2 1.5"/><rect x="5" y="5" width="3" height="3"/><rect x="9" y="5" width="3" height="3"/><rect x="5" y="9" width="3" height="3"/><rect x="9" y="9" width="3" height="3"/></g><rect x="16" y="15" width="2" height="2" fill="#cfcfcf"/></svg>
<div style="position:absolute;left:1207px;top:75px;width:163px;height:20px;background:#e6e6e6;"></div>
<div id="f18" style="position:absolute;left:1214px;top:78px;font-size:12px;line-height:14px;font-weight:normal;color:#1a1a1a;white-space:nowrap;transform-origin:0 0;transform:scaleX(0.9112);-webkit-text-stroke:0.2px #1a1a1a;">[Bloc graphique standard]+</div>
<div style="position:absolute;left:1369px;top:75px;width:18px;height:20px;background:#4d4d4d;border:1px solid #444;"></div>
<svg style="position:absolute;left:1372px;top:80px;" width="12" height="10" viewBox="0 0 12 10"><path d="M2 3 L6 7 L10 3" fill="none" stroke="#ddd" stroke-width="1.5"/></svg>
<svg style="position:absolute;left:1337px;top:102px;" width="20" height="16" viewBox="0 0 20 16"><rect x="1.5" y="1.5" width="9" height="9" fill="none" stroke="#cfcfcf" stroke-width="1.2"/><rect x="4.5" y="4.5" width="9" height="9" fill="#cfcfcf" stroke="#333"/><path d="M15 6 A4 4 0 0 1 15 13" fill="none" stroke="#9a9a9a"/></svg>
<svg style="position:absolute;left:1366px;top:102px;" width="20" height="16" viewBox="0 0 20 16"><rect x="1.5" y="3" width="10" height="10" fill="none" stroke="#cfcfcf" stroke-width="1.2" stroke-dasharray="2 1.5"/><rect x="5" y="6.5" width="3" height="3" fill="#cfcfcf"/><path d="M14 10 L18 4" stroke="#cfcfcf" stroke-width="1.3"/></svg>
<div style="position:absolute;left:1400px;top:70px;width:1px;height:54px;background:#4a4a4a;"></div>
<svg style="position:absolute;left:1869px;top:87px;" width="14" height="18" viewBox="0 0 14 18"><path d="M9 1 L3 10 L7 10 L5 17 L11 7 L7 7 Z" fill="#bdbdbd"/></svg>
<div style="position:absolute;left:1890px;top:67px;width:1px;height:60px;background:#484848;"></div>
<svg style="position:absolute;left:1897px;top:76px;" width="16" height="16" viewBox="0 0 16 16"><circle cx="8" cy="8" r="4.5" fill="none" stroke="#cfcfcf" stroke-width="2.6" stroke-dasharray="2.2 1.3"/><circle cx="8" cy="8" r="2" fill="#535353"/></svg>
<svg style="position:absolute;left:1897px;top:103px;" width="16" height="14" viewBox="0 0 16 14"><g stroke="#cfcfcf" stroke-width="1.3"><line x1="2" y1="3" x2="14" y2="3"/><line x1="2" y1="6.5" x2="14" y2="6.5"/><line x1="2" y1="10" x2="14" y2="10"/></g></svg>
<div style="position:absolute;left:0px;top:128px;width:1882px;height:28px;background:#434343;"></div>
<div style="position:absolute;left:0px;top:136px;width:40px;height:12px;background:#3d3d3d;"></div>
<svg style="position:absolute;left:5px;top:137px;" width="10" height="10" viewBox="0 0 10 10"><path d="M2 2 L8 8 M8 2 L2 8" stroke="#dddddd" stroke-width="1.6"/></svg>
<svg style="position:absolute;left:25px;top:137px;" width="10" height="10" viewBox="0 0 10 10"><path d="M1.5 2.5 L4 5 L1.5 7.5 M5.5 2.5 L8 5 L5.5 7.5" fill="none" stroke="#dddddd" stroke-width="1.4"/></svg>
<div id="f19" style="position:absolute;left:42px;top:135px;font-size:11px;line-height:13px;font-weight:bold;color:#c8c8c8;white-space:nowrap;transform-origin:0 0;transform:scaleX(0.9935);">ndu_grille-image-promoteurs_sansgabarit.indd @ 194%</div>
<div style="position:absolute;left:346px;top:129px;width:1px;height:27px;background:#3a3a3a;"></div>
<div style="position:absolute;left:360px;top:133px;font-size:14px;line-height:16px;color:#bcbcbc;font-weight:normal;white-space:nowrap;">×</div>
<div id="f20" style="position:absolute;left:378px;top:135px;font-size:11px;line-height:13px;font-weight:bold;color:#c8c8c8;white-space:nowrap;transform-origin:0 0;transform:scaleX(0.9995);">*Sans titre-7 @ 80%</div>
<div style="position:absolute;left:495px;top:129px;width:1px;height:27px;background:#3a3a3a;"></div>
<div style="position:absolute;left:508px;top:133px;font-size:14px;line-height:16px;color:#bcbcbc;font-weight:normal;white-space:nowrap;">×</div>
<div id="f21" style="position:absolute;left:527px;top:135px;font-size:11px;line-height:13px;font-weight:bold;color:#c8c8c8;white-space:nowrap;transform-origin:0 0;transform:scaleX(0.9945);">rendu-3cols-sansgabarits.indd @ 147%</div>
<div style="position:absolute;left:747px;top:128px;width:154px;height:28px;background:#535353;"></div>
<div style="position:absolute;left:760px;top:133px;font-size:14px;line-height:16px;color:#e8e8e8;font-weight:normal;white-space:nowrap;">×</div>
<div id="f22" style="position:absolute;left:778px;top:135px;font-size:11px;line-height:13px;font-weight:bold;color:#ffffff;white-space:nowrap;transform-origin:0 0;transform:scaleX(0.9984);">*Sans titre-8 @ 107%</div>
<svg style="position:absolute;left:40px;top:156px;" width="1824" height="17" viewBox="0 0 1824 17"><rect width="1824" height="17" fill="#1f1f1f"/><line x1="-1.1" y1="14" x2="-1.1" y2="17" stroke="#bdbdbd" stroke-width="1"/><line x1="2.3" y1="14" x2="2.3" y2="17" stroke="#bdbdbd" stroke-width="1"/><line x1="5.7" y1="14" x2="5.7" y2="17" stroke="#bdbdbd" stroke-width="1"/><line x1="9.1" y1="14" x2="9.1" y2="17" stroke="#bdbdbd" stroke-width="1"/><line x1="12.5" y1="0" x2="12.5" y2="17" stroke="#d8d8d8" stroke-width="1"/><line x1="15.9" y1="14" x2="15.9" y2="17" stroke="#bdbdbd" stroke-width="1"/><line x1="19.3" y1="14" x2="19.3" y2="17" stroke="#bdbdbd" stroke-width="1"/><line x1="22.7" y1="14" x2="22.7" y2="17" stroke="#bdbdbd" stroke-width="1"/><line x1="26.1" y1="14" x2="26.1" y2="17" stroke="#bdbdbd" stroke-width="1"/><line x1="29.5" y1="11" x2="29.5" y2="17" stroke="#d0d0d0" stroke-width="1"/><line x1="32.9" y1="14" x2="32.9" y2="17" stroke="#bdbdbd" stroke-width="1"/><line x1="36.3" y1="14" x2="36.3" y2="17" stroke="#bdbdbd" stroke-width="1"/><line x1="39.7" y1="14" x2="39.7" y2="17" stroke="#bdbdbd" stroke-width="1"/><line x1="43.1" y1="14" x2="43.1" y2="17" stroke="#bdbdbd" stroke-width="1"/><line x1="46.5" y1="0" x2="46.5" y2="17" stroke="#d8d8d8" stroke-width="1"/><line x1="49.9" y1="14" x2="49.9" y2="17" stroke="#bdbdbd" stroke-width="1"/><line x1="53.3" y1="14" x2="53.3" y2="17" stroke="#bdbdbd" stroke-width="1"/><line x1="56.7" y1="14" x2="56.7" y2="17" stroke="#bdbdbd" stroke-width="1"/><line x1="60.1" y1="14" x2="60.1" y2="17" stroke="#bdbdbd" stroke-width="1"/><line x1="63.5" y1="11" x2="63.5" y2="17" stroke="#d0d0d0" stroke-width="1"/><line x1="66.9" y1="14" x2="66.9" y2="17" stroke="#bdbdbd" stroke-width="1"/><line x1="70.3" y1="14" x2="70.3" y2="17" stroke="#bdbdbd" stroke-width="1"/><line x1="73.7" y1="14" x2="73.7" y2="17" stroke="#bdbdbd" stroke-width="1"/><line x1="77.1" y1="14" x2="77.1" y2="17" stroke="#bdbdbd" stroke-width="1"/><line x1="80.5" y1="0" x2="80.5" y2="17" stroke="#d8d8d8" stroke-width="1"/><line x1="83.9" y1="14" x2="83.9" y2="17" stroke="#bdbdbd" stroke-width="1"/><line x1="87.3" y1="14" x2="87.3" y2="17" stroke="#bdbdbd" stroke-width="1"/><line x1="90.7" y1="14" x2="90.7" y2="17" stroke="#bdbdbd" stroke-width="1"/><line x1="94.1" y1="14" x2="94.1" y2="17" stroke="#bdbdbd" stroke-width="1"/><line x1="97.5" y1="11" x2="97.5" y2="17" stroke="#d0d0d0" stroke-width="1"/><line x1="100.9" y1="14" x2="100.9" y2="17" stroke="#bdbdbd" stroke-width="1"/><line x1="104.3" y1="14" x2="104.3" y2="17" stroke="#bdbdbd" stroke-width="1"/><line x1="107.7" y1="14" x2="107.7" y2="17" stroke="#bdbdbd" stroke-width="1"/><line x1="111.1" y1="14" x2="111.1" y2="17" stroke="#bdbdbd" stroke-width="1"/><line x1="114.5" y1="0" x2="114.5" y2="17" stroke="#d8d8d8" stroke-width="1"/><line x1="117.9" y1="14" x2="117.9" y2="17" stroke="#bdbdbd" stroke-width="1"/><line x1="121.3" y1="14" x2="121.3" y2="17" stroke="#bdbdbd" stroke-width="1"/><line x1="124.7" y1="14" x2="124.7" y2="17" stroke="#bdbdbd" stroke-width="1"/><line x1="128.1" y1="14" x2="128.1" y2="17" stroke="#bdbdbd" stroke-width="1"/><line x1="131.5" y1="11" x2="131.5" y2="17" stroke="#d0d0d0" stroke-width="1"/><line x1="134.9" y1="14" x2="134.9" y2="17" stroke="#bdbdbd" stroke-width="1"/><line x1="138.3" y1="14" x2="138.3" y2="17" stroke="#bdbdbd" stroke-width="1"/><line x1="141.7" y1="14" x2="141.7" y2="17" stroke="#bdbdbd" stroke-width="1"/><line x1="145.1" y1="14" x2="145.1" y2="17" stroke="#bdbdbd" stroke-width="1"/><line x1="148.5" y1="0" x2="148.5" y2="17" stroke="#d8d8d8" stroke-width="1"/><line x1="151.9" y1="14" x2="151.9" y2="17" stroke="#bdbdbd" stroke-width="1"/><line x1="155.3" y1="14" x2="155.3" y2="17" stroke="#bdbdbd" stroke-width="1"/><line x1="158.7" y1="14" x2="158.7" y2="17" stroke="#bdbdbd" stroke-width="1"/><line x1="162.1" y1="14" x2="162.1" y2="17" stroke="#bdbdbd" stroke-width="1"/><line x1="165.5" y1="11" x2="165.5" y2="17" stroke="#d0d0d0" stroke-width="1"/><line x1="168.9" y1="14" x2="168.9" y2="17" stroke="#bdbdbd" stroke-width="1"/><line x1="172.3" y1="14" x2="172.3" y2="17" stroke="#bdbdbd" stroke-width="1"/><line x1="175.7" y1="14" x2="175.7" y2="17" stroke="#bdbdbd" stroke-width="1"/><line x1="179.1" y1="14" x2="179.1" y2="17" stroke="#bdbdbd" stroke-width="1"/><line x1="182.5" y1="0" x2="182.5" y2="17" stroke="#d8d8d8" stroke-width="1"/><line x1="185.9" y1="14" x2="185.9" y2="17" stroke="#bdbdbd" stroke-width="1"/><line x1="189.3" y1="14" x2="189.3" y2="17" stroke="#bdbdbd" stroke-width="1"/><line x1="192.7" y1="14" x2="192.7" y2="17" stroke="#bdbdbd" stroke-width="1"/><line x1="196.1" y1="14" x2="196.1" y2="17" stroke="#bdbdbd" stroke-width="1"/><line x1="199.5" y1="11" x2="199.5" y2="17" stroke="#d0d0d0" stroke-width="1"/><line x1="202.9" y1="14" x2="202.9" y2="17" stroke="#bdbdbd" stroke-width="1"/><line x1="206.3" y1="14" x2="206.3" y2="17" stroke="#bdbdbd" stroke-width="1"/><line x1="209.7" y1="14" x2="209.7" y2="17" stroke="#bdbdbd" stroke-width="1"/><line x1="213.1" y1="14" x2="213.1" y2="17" stroke="#bdbdbd" stroke-width="1"/><line x1="216.5" y1="0" x2="216.5" y2="17" stroke="#d8d8d8" stroke-width="1"/><line x1="219.9" y1="14" x2="219.9" y2="17" stroke="#bdbdbd" stroke-width="1"/><line x1="223.3" y1="14" x2="223.3" y2="17" stroke="#bdbdbd" stroke-width="1"/><line x1="226.7" y1="14" x2="226.7" y2="17" stroke="#bdbdbd" stroke-width="1"/><line x1="230.1" y1="14" x2="230.1" y2="17" stroke="#bdbdbd" stroke-width="1"/><line x1="233.5" y1="11" x2="233.5" y2="17" stroke="#d0d0d0" stroke-width="1"/><line x1="236.9" y1="14" x2="236.9" y2="17" stroke="#bdbdbd" stroke-width="1"/><line x1="240.3" y1="14" x2="240.3" y2="17" stroke="#bdbdbd" stroke-width="1"/><line x1="243.7" y1="14" x2="243.7" y2="17" stroke="#bdbdbd" stroke-width="1"/><line x1="247.1" y1="14" x2="247.1" y2="17" stroke="#bdbdbd" stroke-width="1"/><line x1="250.5" y1="0" x2="250.5" y2="17" stroke="#d8d8d8" stroke-width="1"/><line x1="253.9" y1="14" x2="253.9" y2="17" stroke="#bdbdbd" stroke-width="1"/><line x1="257.3" y1="14" x2="257.3" y2="17" stroke="#bdbdbd" stroke-width="1"/><line x1="260.7" y1="14" x2="260.7" y2="17" stroke="#bdbdbd" stroke-width="1"/><line x1="264.1" y1="14" x2="264.1" y2="17" stroke="#bdbdbd" stroke-width="1"/><line x1="267.5" y1="11" x2="267.5" y2="17" stroke="#d0d0d0" stroke-width="1"/><line x1="270.9" y1="14" x2="270.9" y2="17" stroke="#bdbdbd" stroke-width="1"/><line x1="274.3" y1="14" x2="274.3" y2="17" stroke="#bdbdbd" stroke-width="1"/><line x1="277.7" y1="14" x2="277.7" y2="17" stroke="#bdbdbd" stroke-width="1"/><line x1="281.1" y1="14" x2="281.1" y2="17" stroke="#bdbdbd" stroke-width="1"/><line x1="284.5" y1="0" x2="284.5" y2="17" stroke="#d8d8d8" stroke-width="1"/><line x1="287.9" y1="14" x2="287.9" y2="17" stroke="#bdbdbd" stroke-width="1"/><line x1="291.3" y1="14" x2="291.3" y2="17" stroke="#bdbdbd" stroke-width="1"/><line x1="294.7" y1="14" x2="294.7" y2="17" stroke="#bdbdbd" stroke-width="1"/><line x1="298.1" y1="14" x2="298.1" y2="17" stroke="#bdbdbd" stroke-width="1"/><line x1="301.5" y1="11" x2="301.5" y2="17" stroke="#d0d0d0" stroke-width="1"/><line x1="304.9" y1="14" x2="304.9" y2="17" stroke="#bdbdbd" stroke-width="1"/><line x1="308.3" y1="14" x2="308.3" y2="17" stroke="#bdbdbd" stroke-width="1"/><line x1="311.7" y1="14" x2="311.7" y2="17" stroke="#bdbdbd" stroke-width="1"/><line x1="315.1" y1="14" x2="315.1" y2="17" stroke="#bdbdbd" stroke-width="1"/><line x1="318.5" y1="0" x2="318.5" y2="17" stroke="#d8d8d8" stroke-width="1"/><line x1="321.9" y1="14" x2="321.9" y2="17" stroke="#bdbdbd" stroke-width="1"/><line x1="325.3" y1="14" x2="325.3" y2="17" stroke="#bdbdbd" stroke-width="1"/><line x1="328.7" y1="14" x2="328.7" y2="17" stroke="#bdbdbd" stroke-width="1"/><line x1="332.1" y1="14" x2="332.1" y2="17" stroke="#bdbdbd" stroke-width="1"/><line x1="335.5" y1="11" x2="335.5" y2="17" stroke="#d0d0d0" stroke-width="1"/><line x1="338.9" y1="14" x2="338.9" y2="17" stroke="#bdbdbd" stroke-width="1"/><line x1="342.3" y1="14" x2="342.3" y2="17" stroke="#bdbdbd" stroke-width="1"/><line x1="345.7" y1="14" x2="345.7" y2="17" stroke="#bdbdbd" stroke-width="1"/><line x1="349.1" y1="14" x2="349.1" y2="17" stroke="#bdbdbd" stroke-width="1"/><line x1="352.5" y1="0" x2="352.5" y2="17" stroke="#d8d8d8" stroke-width="1"/><line x1="355.9" y1="14" x2="355.9" y2="17" stroke="#bdbdbd" stroke-width="1"/><line x1="359.3" y1="14" x2="359.3" y2="17" stroke="#bdbdbd" stroke-width="1"/><line x1="362.7" y1="14" x2="362.7" y2="17" stroke="#bdbdbd" stroke-width="1"/><line x1="366.1" y1="14" x2="366.1" y2="17" stroke="#bdbdbd" stroke-width="1"/><line x1="369.5" y1="11" x2="369.5" y2="17" stroke="#d0d0d0" stroke-width="1"/><line x1="372.9" y1="14" x2="372.9" y2="17" stroke="#bdbdbd" stroke-width="1"/><line x1="376.3" y1="14" x2="376.3" y2="17" stroke="#bdbdbd" stroke-width="1"/><line x1="379.7" y1="14" x2="379.7" y2="17" stroke="#bdbdbd" stroke-width="1"/><line x1="383.1" y1="14" x2="383.1" y2="17" stroke="#bdbdbd" stroke-width="1"/><line x1="386.5" y1="0" x2="386.5" y2="17" stroke="#d8d8d8" stroke-width="1"/><line x1="389.9" y1="14" x2="389.9" y2="17" stroke="#bdbdbd" stroke-width="1"/><line x1="393.3" y1="14" x2="393.3" y2="17" stroke="#bdbdbd" stroke-width="1"/><line x1="396.7" y1="14" x2="396.7" y2="17" stroke="#bdbdbd" stroke-width="1"/><line x1="400.1" y1="14" x2="400.1" y2="17" stroke="#bdbdbd" stroke-width="1"/><line x1="403.5" y1="11" x2="403.5" y2="17" stroke="#d0d0d0" stroke-width="1"/><line x1="406.9" y1="14" x2="406.9" y2="17" stroke="#bdbdbd" stroke-width="1"/><line x1="410.3" y1="14" x2="410.3" y2="17" stroke="#bdbdbd" stroke-width="1"/><line x1="413.7" y1="14" x2="413.7" y2="17" stroke="#bdbdbd" stroke-width="1"/><line x1="417.1" y1="14" x2="417.1" y2="17" stroke="#bdbdbd" stroke-width="1"/><line x1="420.5" y1="0" x2="420.5" y2="17" stroke="#d8d8d8" stroke-width="1"/><line x1="423.9" y1="14" x2="423.9" y2="17" stroke="#bdbdbd" stroke-width="1"/><line x1="427.3" y1="14" x2="427.3" y2="17" stroke="#bdbdbd" stroke-width="1"/><line x1="430.7" y1="14" x2="430.7" y2="17" stroke="#bdbdbd" stroke-width="1"/><line x1="434.1" y1="14" x2="434.1" y2="17" stroke="#bdbdbd" stroke-width="1"/><line x1="437.5" y1="11" x2="437.5" y2="17" stroke="#d0d0d0" stroke-width="1"/><line x1="440.9" y1="14" x2="440.9" y2="17" stroke="#bdbdbd" stroke-width="1"/><line x1="444.3" y1="14" x2="444.3" y2="17" stroke="#bdbdbd" stroke-width="1"/><line x1="447.7" y1="14" x2="447.7" y2="17" stroke="#bdbdbd" stroke-width="1"/><line x1="451.1" y1="14" x2="451.1" y2="17" stroke="#bdbdbd" stroke-width="1"/><line x1="454.5" y1="0" x2="454.5" y2="17" stroke="#d8d8d8" stroke-width="1"/><line x1="457.9" y1="14" x2="457.9" y2="17" stroke="#bdbdbd" stroke-width="1"/><line x1="461.3" y1="14" x2="461.3" y2="17" stroke="#bdbdbd" stroke-width="1"/><line x1="464.7" y1="14" x2="464.7" y2="17" stroke="#bdbdbd" stroke-width="1"/><line x1="468.1" y1="14" x2="468.1" y2="17" stroke="#bdbdbd" stroke-width="1"/><line x1="471.5" y1="11" x2="471.5" y2="17" stroke="#d0d0d0" stroke-width="1"/><line x1="474.9" y1="14" x2="474.9" y2="17" stroke="#bdbdbd" stroke-width="1"/><line x1="478.3" y1="14" x2="478.3" y2="17" stroke="#bdbdbd" stroke-width="1"/><line x1="481.7" y1="14" x2="481.7" y2="17" stroke="#bdbdbd" stroke-width="1"/><line x1="485.1" y1="14" x2="485.1" y2="17" stroke="#bdbdbd" stroke-width="1"/><line x1="488.5" y1="0" x2="488.5" y2="17" stroke="#d8d8d8" stroke-width="1"/><line x1="491.9" y1="14" x2="491.9" y2="17" stroke="#bdbdbd" stroke-width="1"/><line x1="495.3" y1="14" x2="495.3" y2="17" stroke="#bdbdbd" stroke-width="1"/><line x1="498.7" y1="14" x2="498.7" y2="17" stroke="#bdbdbd" stroke-width="1"/><line x1="502.1" y1="14" x2="502.1" y2="17" stroke="#bdbdbd" stroke-width="1"/><line x1="505.5" y1="11" x2="505.5" y2="17" stroke="#d0d0d0" stroke-width="1"/><line x1="508.9" y1="14" x2="508.9" y2="17" stroke="#bdbdbd" stroke-width="1"/><line x1="512.3" y1="14" x2="512.3" y2="17" stroke="#bdbdbd" stroke-width="1"/><line x1="515.7" y1="14" x2="515.7" y2="17" stroke="#bdbdbd" stroke-width="1"/><line x1="519.1" y1="14" x2="519.1" y2="17" stroke="#bdbdbd" stroke-width="1"/><line x1="522.5" y1="0" x2="522.5" y2="17" stroke="#d8d8d8" stroke-width="1"/><line x1="525.9" y1="14" x2="525.9" y2="17" stroke="#bdbdbd" stroke-width="1"/><line x1="529.3" y1="14" x2="529.3" y2="17" stroke="#bdbdbd" stroke-width="1"/><line x1="532.7" y1="14" x2="532.7" y2="17" stroke="#bdbdbd" stroke-width="1"/><line x1="536.1" y1="14" x2="536.1" y2="17" stroke="#bdbdbd" stroke-width="1"/><line x1="539.5" y1="11" x2="539.5" y2="17" stroke="#d0d0d0" stroke-width="1"/><line x1="542.9" y1="14" x2="542.9" y2="17" stroke="#bdbdbd" stroke-width="1"/><line x1="546.3" y1="14" x2="546.3" y2="17" stroke="#bdbdbd" stroke-width="1"/><line x1="549.7" y1="14" x2="549.7" y2="17" stroke="#bdbdbd" stroke-width="1"/><line x1="553.1" y1="14" x2="553.1" y2="17" stroke="#bdbdbd" stroke-width="1"/><line x1="556.5" y1="0" x2="556.5" y2="17" stroke="#d8d8d8" stroke-width="1"/><line x1="559.9" y1="14" x2="559.9" y2="17" stroke="#bdbdbd" stroke-width="1"/><line x1="563.3" y1="14" x2="563.3" y2="17" stroke="#bdbdbd" stroke-width="1"/><line x1="566.7" y1="14" x2="566.7" y2="17" stroke="#bdbdbd" stroke-width="1"/><line x1="570.1" y1="14" x2="570.1" y2="17" stroke="#bdbdbd" stroke-width="1"/><line x1="573.5" y1="11" x2="573.5" y2="17" stroke="#d0d0d0" stroke-width="1"/><line x1="576.9" y1="14" x2="576.9" y2="17" stroke="#bdbdbd" stroke-width="1"/><line x1="580.3" y1="14" x2="580.3" y2="17" stroke="#bdbdbd" stroke-width="1"/><line x1="583.7" y1="14" x2="583.7" y2="17" stroke="#bdbdbd" stroke-width="1"/><line x1="587.1" y1="14" x2="587.1" y2="17" stroke="#bdbdbd" stroke-width="1"/><line x1="590.5" y1="0" x2="590.5" y2="17" stroke="#d8d8d8" stroke-width="1"/><line x1="593.9" y1="14" x2="593.9" y2="17" stroke="#bdbdbd" stroke-width="1"/><line x1="597.3" y1="14" x2="597.3" y2="17" stroke="#bdbdbd" stroke-width="1"/><line x1="600.7" y1="14" x2="600.7" y2="17" stroke="#bdbdbd" stroke-width="1"/><line x1="604.1" y1="14" x2="604.1" y2="17" stroke="#bdbdbd" stroke-width="1"/><line x1="607.5" y1="11" x2="607.5" y2="17" stroke="#d0d0d0" stroke-width="1"/><line x1="610.9" y1="14" x2="610.9" y2="17" stroke="#bdbdbd" stroke-width="1"/><line x1="614.3" y1="14" x2="614.3" y2="17" stroke="#bdbdbd" stroke-width="1"/><line x1="617.7" y1="14" x2="617.7" y2="17" stroke="#bdbdbd" stroke-width="1"/><line x1="621.1" y1="14" x2="621.1" y2="17" stroke="#bdbdbd" stroke-width="1"/><line x1="624.5" y1="0" x2="624.5" y2="17" stroke="#d8d8d8" stroke-width="1"/><line x1="627.9" y1="14" x2="627.9" y2="17" stroke="#bdbdbd" stroke-width="1"/><line x1="631.3" y1="14" x2="631.3" y2="17" stroke="#bdbdbd" stroke-width="1"/><line x1="634.7" y1="14" x2="634.7" y2="17" stroke="#bdbdbd" stroke-width="1"/><line x1="638.1" y1="14" x2="638.1" y2="17" stroke="#bdbdbd" stroke-width="1"/><line x1="641.5" y1="11" x2="641.5" y2="17" stroke="#d0d0d0" stroke-width="1"/><line x1="644.9" y1="14" x2="644.9" y2="17" stroke="#bdbdbd" stroke-width="1"/><line x1="648.3" y1="14" x2="648.3" y2="17" stroke="#bdbdbd" stroke-width="1"/><line x1="651.7" y1="14" x2="651.7" y2="17" stroke="#bdbdbd" stroke-width="1"/><line x1="655.1" y1="14" x2="655.1" y2="17" stroke="#bdbdbd" stroke-width="1"/><line x1="658.5" y1="0" x2="658.5" y2="17" stroke="#d8d8d8" stroke-width="1"/><line x1="661.9" y1="14" x2="661.9" y2="17" stroke="#bdbdbd" stroke-width="1"/><line x1="665.3" y1="14" x2="665.3" y2="17" stroke="#bdbdbd" stroke-width="1"/><line x1="668.7" y1="14" x2="668.7" y2="17" stroke="#bdbdbd" stroke-width="1"/><line x1="672.1" y1="14" x2="672.1" y2="17" stroke="#bdbdbd" stroke-width="1"/><line x1="675.5" y1="11" x2="675.5" y2="17" stroke="#d0d0d0" stroke-width="1"/><line x1="678.9" y1="14" x2="678.9" y2="17" stroke="#bdbdbd" stroke-width="1"/><line x1="682.3" y1="14" x2="682.3" y2="17" stroke="#bdbdbd" stroke-width="1"/><line x1="685.7" y1="14" x2="685.7" y2="17" stroke="#bdbdbd" stroke-width="1"/><line x1="689.1" y1="14" x2="689.1" y2="17" stroke="#bdbdbd" stroke-width="1"/><line x1="692.5" y1="0" x2="692.5" y2="17" stroke="#d8d8d8" stroke-width="1"/><line x1="695.9" y1="14" x2="695.9" y2="17" stroke="#bdbdbd" stroke-width="1"/><line x1="699.3" y1="14" x2="699.3" y2="17" stroke="#bdbdbd" stroke-width="1"/><line x1="702.7" y1="14" x2="702.7" y2="17" stroke="#bdbdbd" stroke-width="1"/><line x1="706.1" y1="14" x2="706.1" y2="17" stroke="#bdbdbd" stroke-width="1"/><line x1="709.5" y1="11" x2="709.5" y2="17" stroke="#d0d0d0" stroke-width="1"/><line x1="712.9" y1="14" x2="712.9" y2="17" stroke="#bdbdbd" stroke-width="1"/><line x1="716.3" y1="14" x2="716.3" y2="17" stroke="#bdbdbd" stroke-width="1"/><line x1="719.7" y1="14" x2="719.7" y2="17" stroke="#bdbdbd" stroke-width="1"/><line x1="723.1" y1="14" x2="723.1" y2="17" stroke="#bdbdbd" stroke-width="1"/><line x1="726.5" y1="0" x2="726.5" y2="17" stroke="#d8d8d8" stroke-width="1"/><line x1="729.9" y1="14" x2="729.9" y2="17" stroke="#bdbdbd" stroke-width="1"/><line x1="733.3" y1="14" x2="733.3" y2="17" stroke="#bdbdbd" stroke-width="1"/><line x1="736.7" y1="14" x2="736.7" y2="17" stroke="#bdbdbd" stroke-width="1"/><line x1="740.1" y1="14" x2="740.1" y2="17" stroke="#bdbdbd" stroke-width="1"/><line x1="743.5" y1="11" x2="743.5" y2="17" stroke="#d0d0d0" stroke-width="1"/><line x1="746.9" y1="14" x2="746.9" y2="17" stroke="#bdbdbd" stroke-width="1"/><line x1="750.3" y1="14" x2="750.3" y2="17" stroke="#bdbdbd" stroke-width="1"/><line x1="753.7" y1="14" x2="753.7" y2="17" stroke="#bdbdbd" stroke-width="1"/><line x1="757.1" y1="14" x2="757.1" y2="17" stroke="#bdbdbd" stroke-width="1"/><line x1="760.5" y1="0" x2="760.5" y2="17" stroke="#d8d8d8" stroke-width="1"/><line x1="763.9" y1="14" x2="763.9" y2="17" stroke="#bdbdbd" stroke-width="1"/><line x1="767.3" y1="14" x2="767.3" y2="17" stroke="#bdbdbd" stroke-width="1"/><line x1="770.7" y1="14" x2="770.7" y2="17" stroke="#bdbdbd" stroke-width="1"/><line x1="774.1" y1="14" x2="774.1" y2="17" stroke="#bdbdbd" stroke-width="1"/><line x1="777.5" y1="11" x2="777.5" y2="17" stroke="#d0d0d0" stroke-width="1"/><line x1="780.9" y1="14" x2="780.9" y2="17" stroke="#bdbdbd" stroke-width="1"/><line x1="784.3" y1="14" x2="784.3" y2="17" stroke="#bdbdbd" stroke-width="1"/><line x1="787.7" y1="14" x2="787.7" y2="17" stroke="#bdbdbd" stroke-width="1"/><line x1="791.1" y1="14" x2="791.1" y2="17" stroke="#bdbdbd" stroke-width="1"/><line x1="794.5" y1="0" x2="794.5" y2="17" stroke="#d8d8d8" stroke-width="1"/><line x1="797.9" y1="14" x2="797.9" y2="17" stroke="#bdbdbd" stroke-width="1"/><line x1="801.3" y1="14" x2="801.3" y2="17" stroke="#bdbdbd" stroke-width="1"/><line x1="804.7" y1="14" x2="804.7" y2="17" stroke="#bdbdbd" stroke-width="1"/><line x1="808.1" y1="14" x2="808.1" y2="17" stroke="#bdbdbd" stroke-width="1"/><line x1="811.5" y1="11" x2="811.5" y2="17" stroke="#d0d0d0" stroke-width="1"/><line x1="814.9" y1="14" x2="814.9" y2="17" stroke="#bdbdbd" stroke-width="1"/><line x1="818.3" y1="14" x2="818.3" y2="17" stroke="#bdbdbd" stroke-width="1"/><line x1="821.7" y1="14" x2="821.7" y2="17" stroke="#bdbdbd" stroke-width="1"/><line x1="825.1" y1="14" x2="825.1" y2="17" stroke="#bdbdbd" stroke-width="1"/><line x1="828.5" y1="0" x2="828.5" y2="17" stroke="#d8d8d8" stroke-width="1"/><line x1="831.9" y1="14" x2="831.9" y2="17" stroke="#bdbdbd" stroke-width="1"/><line x1="835.3" y1="14" x2="835.3" y2="17" stroke="#bdbdbd" stroke-width="1"/><line x1="838.7" y1="14" x2="838.7" y2="17" stroke="#bdbdbd" stroke-width="1"/><line x1="842.1" y1="14" x2="842.1" y2="17" stroke="#bdbdbd" stroke-width="1"/><line x1="845.5" y1="11" x2="845.5" y2="17" stroke="#d0d0d0" stroke-width="1"/><line x1="848.9" y1="14" x2="848.9" y2="17" stroke="#bdbdbd" stroke-width="1"/><line x1="852.3" y1="14" x2="852.3" y2="17" stroke="#bdbdbd" stroke-width="1"/><line x1="855.7" y1="14" x2="855.7" y2="17" stroke="#bdbdbd" stroke-width="1"/><line x1="859.1" y1="14" x2="859.1" y2="17" stroke="#bdbdbd" stroke-width="1"/><line x1="862.5" y1="0" x2="862.5" y2="17" stroke="#d8d8d8" stroke-width="1"/><line x1="865.9" y1="14" x2="865.9" y2="17" stroke="#bdbdbd" stroke-width="1"/><line x1="869.3" y1="14" x2="869.3" y2="17" stroke="#bdbdbd" stroke-width="1"/><line x1="872.7" y1="14" x2="872.7" y2="17" stroke="#bdbdbd" stroke-width="1"/><line x1="876.1" y1="14" x2="876.1" y2="17" stroke="#bdbdbd" stroke-width="1"/><line x1="879.5" y1="11" x2="879.5" y2="17" stroke="#d0d0d0" stroke-width="1"/><line x1="882.9" y1="14" x2="882.9" y2="17" stroke="#bdbdbd" stroke-width="1"/><line x1="886.3" y1="14" x2="886.3" y2="17" stroke="#bdbdbd" stroke-width="1"/><line x1="889.7" y1="14" x2="889.7" y2="17" stroke="#bdbdbd" stroke-width="1"/><line x1="893.1" y1="14" x2="893.1" y2="17" stroke="#bdbdbd" stroke-width="1"/><line x1="896.5" y1="0" x2="896.5" y2="17" stroke="#d8d8d8" stroke-width="1"/><line x1="899.9" y1="14" x2="899.9" y2="17" stroke="#bdbdbd" stroke-width="1"/><line x1="903.3" y1="14" x2="903.3" y2="17" stroke="#bdbdbd" stroke-width="1"/><line x1="906.7" y1="14" x2="906.7" y2="17" stroke="#bdbdbd" stroke-width="1"/><line x1="910.1" y1="14" x2="910.1" y2="17" stroke="#bdbdbd" stroke-width="1"/><line x1="913.5" y1="11" x2="913.5" y2="17" stroke="#d0d0d0" stroke-width="1"/><line x1="916.9" y1="14" x2="916.9" y2="17" stroke="#bdbdbd" stroke-width="1"/><line x1="920.3" y1="14" x2="920.3" y2="17" stroke="#bdbdbd" stroke-width="1"/><line x1="923.7" y1="14" x2="923.7" y2="17" stroke="#bdbdbd" stroke-width="1"/><line x1="927.1" y1="14" x2="927.1" y2="17" stroke="#bdbdbd" stroke-width="1"/><line x1="930.5" y1="0" x2="930.5" y2="17" stroke="#d8d8d8" stroke-width="1"/><line x1="933.9" y1="14" x2="933.9" y2="17" stroke="#bdbdbd" stroke-width="1"/><line x1="937.3" y1="14" x2="937.3" y2="17" stroke="#bdbdbd" stroke-width="1"/><line x1="940.7" y1="14" x2="940.7" y2="17" stroke="#bdbdbd" stroke-width="1"/><line x1="944.1" y1="14" x2="944.1" y2="17" stroke="#bdbdbd" stroke-width="1"/><line x1="947.5" y1="11" x2="947.5" y2="17" stroke="#d0d0d0" stroke-width="1"/><line x1="950.9" y1="14" x2="950.9" y2="17" stroke="#bdbdbd" stroke-width="1"/><line x1="954.3" y1="14" x2="954.3" y2="17" stroke="#bdbdbd" stroke-width="1"/><line x1="957.7" y1="14" x2="957.7" y2="17" stroke="#bdbdbd" stroke-width="1"/><line x1="961.1" y1="14" x2="961.1" y2="17" stroke="#bdbdbd" stroke-width="1"/><line x1="964.5" y1="0" x2="964.5" y2="17" stroke="#d8d8d8" stroke-width="1"/><line x1="967.9" y1="14" x2="967.9" y2="17" stroke="#bdbdbd" stroke-width="1"/><line x1="971.3" y1="14" x2="971.3" y2="17" stroke="#bdbdbd" stroke-width="1"/><line x1="974.7" y1="14" x2="974.7" y2="17" stroke="#bdbdbd" stroke-width="1"/><line x1="978.1" y1="14" x2="978.1" y2="17" stroke="#bdbdbd" stroke-width="1"/><line x1="981.5" y1="11" x2="981.5" y2="17" stroke="#d0d0d0" stroke-width="1"/><line x1="984.9" y1="14" x2="984.9" y2="17" stroke="#bdbdbd" stroke-width="1"/><line x1="988.3" y1="14" x2="988.3" y2="17" stroke="#bdbdbd" stroke-width="1"/><line x1="991.7" y1="14" x2="991.7" y2="17" stroke="#bdbdbd" stroke-width="1"/><line x1="995.1" y1="14" x2="995.1" y2="17" stroke="#bdbdbd" stroke-width="1"/><line x1="998.5" y1="0" x2="998.5" y2="17" stroke="#d8d8d8" stroke-width="1"/><line x1="1001.9" y1="14" x2="1001.9" y2="17" stroke="#bdbdbd" stroke-width="1"/><line x1="1005.3" y1="14" x2="1005.3" y2="17" stroke="#bdbdbd" stroke-width="1"/><line x1="1008.7" y1="14" x2="1008.7" y2="17" stroke="#bdbdbd" stroke-width="1"/><line x1="1012.1" y1="14" x2="1012.1" y2="17" stroke="#bdbdbd" stroke-width="1"/><line x1="1015.5" y1="11" x2="1015.5" y2="17" stroke="#d0d0d0" stroke-width="1"/><line x1="1018.9" y1="14" x2="1018.9" y2="17" stroke="#bdbdbd" stroke-width="1"/><line x1="1022.3" y1="14" x2="1022.3" y2="17" stroke="#bdbdbd" stroke-width="1"/><line x1="1025.7" y1="14" x2="1025.7" y2="17" stroke="#bdbdbd" stroke-width="1"/><line x1="1029.1" y1="14" x2="1029.1" y2="17" stroke="#bdbdbd" stroke-width="1"/><line x1="1032.5" y1="0" x2="1032.5" y2="17" stroke="#d8d8d8" stroke-width="1"/><line x1="1035.9" y1="14" x2="1035.9" y2="17" stroke="#bdbdbd" stroke-width="1"/><line x1="1039.3" y1="14" x2="1039.3" y2="17" stroke="#bdbdbd" stroke-width="1"/><line x1="1042.7" y1="14" x2="1042.7" y2="17" stroke="#bdbdbd" stroke-width="1"/><line x1="1046.1" y1="14" x2="1046.1" y2="17" stroke="#bdbdbd" stroke-width="1"/><line x1="1049.5" y1="11" x2="1049.5" y2="17" stroke="#d0d0d0" stroke-width="1"/><line x1="1052.9" y1="14" x2="1052.9" y2="17" stroke="#bdbdbd" stroke-width="1"/><line x1="1056.3" y1="14" x2="1056.3" y2="17" stroke="#bdbdbd" stroke-width="1"/><line x1="1059.7" y1="14" x2="1059.7" y2="17" stroke="#bdbdbd" stroke-width="1"/><line x1="1063.1" y1="14" x2="1063.1" y2="17" stroke="#bdbdbd" stroke-width="1"/><line x1="1066.5" y1="0" x2="1066.5" y2="17" stroke="#d8d8d8" stroke-width="1"/><line x1="1069.9" y1="14" x2="1069.9" y2="17" stroke="#bdbdbd" stroke-width="1"/><line x1="1073.3" y1="14" x2="1073.3" y2="17" stroke="#bdbdbd" stroke-width="1"/><line x1="1076.7" y1="14" x2="1076.7" y2="17" stroke="#bdbdbd" stroke-width="1"/><line x1="1080.1" y1="14" x2="1080.1" y2="17" stroke="#bdbdbd" stroke-width="1"/><line x1="1083.5" y1="11" x2="1083.5" y2="17" stroke="#d0d0d0" stroke-width="1"/><line x1="1086.9" y1="14" x2="1086.9" y2="17" stroke="#bdbdbd" stroke-width="1"/><line x1="1090.3" y1="14" x2="1090.3" y2="17" stroke="#bdbdbd" stroke-width="1"/><line x1="1093.7" y1="14" x2="1093.7" y2="17" stroke="#bdbdbd" stroke-width="1"/><line x1="1097.1" y1="14" x2="1097.1" y2="17" stroke="#bdbdbd" stroke-width="1"/><line x1="1100.5" y1="0" x2="1100.5" y2="17" stroke="#d8d8d8" stroke-width="1"/><line x1="1103.9" y1="14" x2="1103.9" y2="17" stroke="#bdbdbd" stroke-width="1"/><line x1="1107.3" y1="14" x2="1107.3" y2="17" stroke="#bdbdbd" stroke-width="1"/><line x1="1110.7" y1="14" x2="1110.7" y2="17" stroke="#bdbdbd" stroke-width="1"/><line x1="1114.1" y1="14" x2="1114.1" y2="17" stroke="#bdbdbd" stroke-width="1"/><line x1="1117.5" y1="11" x2="1117.5" y2="17" stroke="#d0d0d0" stroke-width="1"/><line x1="1120.9" y1="14" x2="1120.9" y2="17" stroke="#bdbdbd" stroke-width="1"/><line x1="1124.3" y1="14" x2="1124.3" y2="17" stroke="#bdbdbd" stroke-width="1"/><line x1="1127.7" y1="14" x2="1127.7" y2="17" stroke="#bdbdbd" stroke-width="1"/><line x1="1131.1" y1="14" x2="1131.1" y2="17" stroke="#bdbdbd" stroke-width="1"/><line x1="1134.5" y1="0" x2="1134.5" y2="17" stroke="#d8d8d8" stroke-width="1"/><line x1="1137.9" y1="14" x2="1137.9" y2="17" stroke="#bdbdbd" stroke-width="1"/><line x1="1141.3" y1="14" x2="1141.3" y2="17" stroke="#bdbdbd" stroke-width="1"/><line x1="1144.7" y1="14" x2="1144.7" y2="17" stroke="#bdbdbd" stroke-width="1"/><line x1="1148.1" y1="14" x2="1148.1" y2="17" stroke="#bdbdbd" stroke-width="1"/><line x1="1151.5" y1="11" x2="1151.5" y2="17" stroke="#d0d0d0" stroke-width="1"/><line x1="1154.9" y1="14" x2="1154.9" y2="17" stroke="#bdbdbd" stroke-width="1"/><line x1="1158.3" y1="14" x2="1158.3" y2="17" stroke="#bdbdbd" stroke-width="1"/><line x1="1161.7" y1="14" x2="1161.7" y2="17" stroke="#bdbdbd" stroke-width="1"/><line x1="1165.1" y1="14" x2="1165.1" y2="17" stroke="#bdbdbd" stroke-width="1"/><line x1="1168.5" y1="0" x2="1168.5" y2="17" stroke="#d8d8d8" stroke-width="1"/><line x1="1171.9" y1="14" x2="1171.9" y2="17" stroke="#bdbdbd" stroke-width="1"/><line x1="1175.3" y1="14" x2="1175.3" y2="17" stroke="#bdbdbd" stroke-width="1"/><line x1="1178.7" y1="14" x2="1178.7" y2="17" stroke="#bdbdbd" stroke-width="1"/><line x1="1182.1" y1="14" x2="1182.1" y2="17" stroke="#bdbdbd" stroke-width="1"/><line x1="1185.5" y1="11" x2="1185.5" y2="17" stroke="#d0d0d0" stroke-width="1"/><line x1="1188.9" y1="14" x2="1188.9" y2="17" stroke="#bdbdbd" stroke-width="1"/><line x1="1192.3" y1="14" x2="1192.3" y2="17" stroke="#bdbdbd" stroke-width="1"/><line x1="1195.7" y1="14" x2="1195.7" y2="17" stroke="#bdbdbd" stroke-width="1"/><line x1="1199.1" y1="14" x2="1199.1" y2="17" stroke="#bdbdbd" stroke-width="1"/><line x1="1202.5" y1="0" x2="1202.5" y2="17" stroke="#d8d8d8" stroke-width="1"/><line x1="1205.9" y1="14" x2="1205.9" y2="17" stroke="#bdbdbd" stroke-width="1"/><line x1="1209.3" y1="14" x2="1209.3" y2="17" stroke="#bdbdbd" stroke-width="1"/><line x1="1212.7" y1="14" x2="1212.7" y2="17" stroke="#bdbdbd" stroke-width="1"/><line x1="1216.1" y1="14" x2="1216.1" y2="17" stroke="#bdbdbd" stroke-width="1"/><line x1="1219.5" y1="11" x2="1219.5" y2="17" stroke="#d0d0d0" stroke-width="1"/><line x1="1222.9" y1="14" x2="1222.9" y2="17" stroke="#bdbdbd" stroke-width="1"/><line x1="1226.3" y1="14" x2="1226.3" y2="17" stroke="#bdbdbd" stroke-width="1"/><line x1="1229.7" y1="14" x2="1229.7" y2="17" stroke="#bdbdbd" stroke-width="1"/><line x1="1233.1" y1="14" x2="1233.1" y2="17" stroke="#bdbdbd" stroke-width="1"/><line x1="1236.5" y1="0" x2="1236.5" y2="17" stroke="#d8d8d8" stroke-width="1"/><line x1="1239.9" y1="14" x2="1239.9" y2="17" stroke="#bdbdbd" stroke-width="1"/><line x1="1243.3" y1="14" x2="1243.3" y2="17" stroke="#bdbdbd" stroke-width="1"/><line x1="1246.7" y1="14" x2="1246.7" y2="17" stroke="#bdbdbd" stroke-width="1"/><line x1="1250.1" y1="14" x2="1250.1" y2="17" stroke="#bdbdbd" stroke-width="1"/><line x1="1253.5" y1="11" x2="1253.5" y2="17" stroke="#d0d0d0" stroke-width="1"/><line x1="1256.9" y1="14" x2="1256.9" y2="17" stroke="#bdbdbd" stroke-width="1"/><line x1="1260.3" y1="14" x2="1260.3" y2="17" stroke="#bdbdbd" stroke-width="1"/><line x1="1263.7" y1="14" x2="1263.7" y2="17" stroke="#bdbdbd" stroke-width="1"/><line x1="1267.1" y1="14" x2="1267.1" y2="17" stroke="#bdbdbd" stroke-width="1"/><line x1="1270.5" y1="0" x2="1270.5" y2="17" stroke="#d8d8d8" stroke-width="1"/><line x1="1273.9" y1="14" x2="1273.9" y2="17" stroke="#bdbdbd" stroke-width="1"/><line x1="1277.3" y1="14" x2="1277.3" y2="17" stroke="#bdbdbd" stroke-width="1"/><line x1="1280.7" y1="14" x2="1280.7" y2="17" stroke="#bdbdbd" stroke-width="1"/><line x1="1284.1" y1="14" x2="1284.1" y2="17" stroke="#bdbdbd" stroke-width="1"/><line x1="1287.5" y1="11" x2="1287.5" y2="17" stroke="#d0d0d0" stroke-width="1"/><line x1="1290.9" y1="14" x2="1290.9" y2="17" stroke="#bdbdbd" stroke-width="1"/><line x1="1294.3" y1="14" x2="1294.3" y2="17" stroke="#bdbdbd" stroke-width="1"/><line x1="1297.7" y1="14" x2="1297.7" y2="17" stroke="#bdbdbd" stroke-width="1"/><line x1="1301.1" y1="14" x2="1301.1" y2="17" stroke="#bdbdbd" stroke-width="1"/><line x1="1304.5" y1="0" x2="1304.5" y2="17" stroke="#d8d8d8" stroke-width="1"/><line x1="1307.9" y1="14" x2="1307.9" y2="17" stroke="#bdbdbd" stroke-width="1"/><line x1="1311.3" y1="14" x2="1311.3" y2="17" stroke="#bdbdbd" stroke-width="1"/><line x1="1314.7" y1="14" x2="1314.7" y2="17" stroke="#bdbdbd" stroke-width="1"/><line x1="1318.1" y1="14" x2="1318.1" y2="17" stroke="#bdbdbd" stroke-width="1"/><line x1="1321.5" y1="11" x2="1321.5" y2="17" stroke="#d0d0d0" stroke-width="1"/><line x1="1324.9" y1="14" x2="1324.9" y2="17" stroke="#bdbdbd" stroke-width="1"/><line x1="1328.3" y1="14" x2="1328.3" y2="17" stroke="#bdbdbd" stroke-width="1"/><line x1="1331.7" y1="14" x2="1331.7" y2="17" stroke="#bdbdbd" stroke-width="1"/><line x1="1335.1" y1="14" x2="1335.1" y2="17" stroke="#bdbdbd" stroke-width="1"/><line x1="1338.5" y1="0" x2="1338.5" y2="17" stroke="#d8d8d8" stroke-width="1"/><line x1="1341.9" y1="14" x2="1341.9" y2="17" stroke="#bdbdbd" stroke-width="1"/><line x1="1345.3" y1="14" x2="1345.3" y2="17" stroke="#bdbdbd" stroke-width="1"/><line x1="1348.7" y1="14" x2="1348.7" y2="17" stroke="#bdbdbd" stroke-width="1"/><line x1="1352.1" y1="14" x2="1352.1" y2="17" stroke="#bdbdbd" stroke-width="1"/><line x1="1355.5" y1="11" x2="1355.5" y2="17" stroke="#d0d0d0" stroke-width="1"/><line x1="1358.9" y1="14" x2="1358.9" y2="17" stroke="#bdbdbd" stroke-width="1"/><line x1="1362.3" y1="14" x2="1362.3" y2="17" stroke="#bdbdbd" stroke-width="1"/><line x1="1365.7" y1="14" x2="1365.7" y2="17" stroke="#bdbdbd" stroke-width="1"/><line x1="1369.1" y1="14" x2="1369.1" y2="17" stroke="#bdbdbd" stroke-width="1"/><line x1="1372.5" y1="0" x2="1372.5" y2="17" stroke="#d8d8d8" stroke-width="1"/><line x1="1375.9" y1="14" x2="1375.9" y2="17" stroke="#bdbdbd" stroke-width="1"/><line x1="1379.3" y1="14" x2="1379.3" y2="17" stroke="#bdbdbd" stroke-width="1"/><line x1="1382.7" y1="14" x2="1382.7" y2="17" stroke="#bdbdbd" stroke-width="1"/><line x1="1386.1" y1="14" x2="1386.1" y2="17" stroke="#bdbdbd" stroke-width="1"/><line x1="1389.5" y1="11" x2="1389.5" y2="17" stroke="#d0d0d0" stroke-width="1"/><line x1="1392.9" y1="14" x2="1392.9" y2="17" stroke="#bdbdbd" stroke-width="1"/><line x1="1396.3" y1="14" x2="1396.3" y2="17" stroke="#bdbdbd" stroke-width="1"/><line x1="1399.7" y1="14" x2="1399.7" y2="17" stroke="#bdbdbd" stroke-width="1"/><line x1="1403.1" y1="14" x2="1403.1" y2="17" stroke="#bdbdbd" stroke-width="1"/><line x1="1406.5" y1="0" x2="1406.5" y2="17" stroke="#d8d8d8" stroke-width="1"/><line x1="1409.9" y1="14" x2="1409.9" y2="17" stroke="#bdbdbd" stroke-width="1"/><line x1="1413.3" y1="14" x2="1413.3" y2="17" stroke="#bdbdbd" stroke-width="1"/><line x1="1416.7" y1="14" x2="1416.7" y2="17" stroke="#bdbdbd" stroke-width="1"/><line x1="1420.1" y1="14" x2="1420.1" y2="17" stroke="#bdbdbd" stroke-width="1"/><line x1="1423.5" y1="11" x2="1423.5" y2="17" stroke="#d0d0d0" stroke-width="1"/><line x1="1426.9" y1="14" x2="1426.9" y2="17" stroke="#bdbdbd" stroke-width="1"/><line x1="1430.3" y1="14" x2="1430.3" y2="17" stroke="#bdbdbd" stroke-width="1"/><line x1="1433.7" y1="14" x2="1433.7" y2="17" stroke="#bdbdbd" stroke-width="1"/><line x1="1437.1" y1="14" x2="1437.1" y2="17" stroke="#bdbdbd" stroke-width="1"/><line x1="1440.5" y1="0" x2="1440.5" y2="17" stroke="#d8d8d8" stroke-width="1"/><line x1="1443.9" y1="14" x2="1443.9" y2="17" stroke="#bdbdbd" stroke-width="1"/><line x1="1447.3" y1="14" x2="1447.3" y2="17" stroke="#bdbdbd" stroke-width="1"/><line x1="1450.7" y1="14" x2="1450.7" y2="17" stroke="#bdbdbd" stroke-width="1"/><line x1="1454.1" y1="14" x2="1454.1" y2="17" stroke="#bdbdbd" stroke-width="1"/><line x1="1457.5" y1="11" x2="1457.5" y2="17" stroke="#d0d0d0" stroke-width="1"/><line x1="1460.9" y1="14" x2="1460.9" y2="17" stroke="#bdbdbd" stroke-width="1"/><line x1="1464.3" y1="14" x2="1464.3" y2="17" stroke="#bdbdbd" stroke-width="1"/><line x1="1467.7" y1="14" x2="1467.7" y2="17" stroke="#bdbdbd" stroke-width="1"/><line x1="1471.1" y1="14" x2="1471.1" y2="17" stroke="#bdbdbd" stroke-width="1"/><line x1="1474.5" y1="0" x2="1474.5" y2="17" stroke="#d8d8d8" stroke-width="1"/><line x1="1477.9" y1="14" x2="1477.9" y2="17" stroke="#bdbdbd" stroke-width="1"/><line x1="1481.3" y1="14" x2="1481.3" y2="17" stroke="#bdbdbd" stroke-width="1"/><line x1="1484.7" y1="14" x2="1484.7" y2="17" stroke="#bdbdbd" stroke-width="1"/><line x1="1488.1" y1="14" x2="1488.1" y2="17" stroke="#bdbdbd" stroke-width="1"/><line x1="1491.5" y1="11" x2="1491.5" y2="17" stroke="#d0d0d0" stroke-width="1"/><line x1="1494.9" y1="14" x2="1494.9" y2="17" stroke="#bdbdbd" stroke-width="1"/><line x1="1498.3" y1="14" x2="1498.3" y2="17" stroke="#bdbdbd" stroke-width="1"/><line x1="1501.7" y1="14" x2="1501.7" y2="17" stroke="#bdbdbd" stroke-width="1"/><line x1="1505.1" y1="14" x2="1505.1" y2="17" stroke="#bdbdbd" stroke-width="1"/><line x1="1508.5" y1="0" x2="1508.5" y2="17" stroke="#d8d8d8" stroke-width="1"/><line x1="1511.9" y1="14" x2="1511.9" y2="17" stroke="#bdbdbd" stroke-width="1"/><line x1="1515.3" y1="14" x2="1515.3" y2="17" stroke="#bdbdbd" stroke-width="1"/><line x1="1518.7" y1="14" x2="1518.7" y2="17" stroke="#bdbdbd" stroke-width="1"/><line x1="1522.1" y1="14" x2="1522.1" y2="17" stroke="#bdbdbd" stroke-width="1"/><line x1="1525.5" y1="11" x2="1525.5" y2="17" stroke="#d0d0d0" stroke-width="1"/><line x1="1528.9" y1="14" x2="1528.9" y2="17" stroke="#bdbdbd" stroke-width="1"/><line x1="1532.3" y1="14" x2="1532.3" y2="17" stroke="#bdbdbd" stroke-width="1"/><line x1="1535.7" y1="14" x2="1535.7" y2="17" stroke="#bdbdbd" stroke-width="1"/><line x1="1539.1" y1="14" x2="1539.1" y2="17" stroke="#bdbdbd" stroke-width="1"/><line x1="1542.5" y1="0" x2="1542.5" y2="17" stroke="#d8d8d8" stroke-width="1"/><line x1="1545.9" y1="14" x2="1545.9" y2="17" stroke="#bdbdbd" stroke-width="1"/><line x1="1549.3" y1="14" x2="1549.3" y2="17" stroke="#bdbdbd" stroke-width="1"/><line x1="1552.7" y1="14" x2="1552.7" y2="17" stroke="#bdbdbd" stroke-width="1"/><line x1="1556.1" y1="14" x2="1556.1" y2="17" stroke="#bdbdbd" stroke-width="1"/><line x1="1559.5" y1="11" x2="1559.5" y2="17" stroke="#d0d0d0" stroke-width="1"/><line x1="1562.9" y1="14" x2="1562.9" y2="17" stroke="#bdbdbd" stroke-width="1"/><line x1="1566.3" y1="14" x2="1566.3" y2="17" stroke="#bdbdbd" stroke-width="1"/><line x1="1569.7" y1="14" x2="1569.7" y2="17" stroke="#bdbdbd" stroke-width="1"/><line x1="1573.1" y1="14" x2="1573.1" y2="17" stroke="#bdbdbd" stroke-width="1"/><line x1="1576.5" y1="0" x2="1576.5" y2="17" stroke="#d8d8d8" stroke-width="1"/><line x1="1579.9" y1="14" x2="1579.9" y2="17" stroke="#bdbdbd" stroke-width="1"/><line x1="1583.3" y1="14" x2="1583.3" y2="17" stroke="#bdbdbd" stroke-width="1"/><line x1="1586.7" y1="14" x2="1586.7" y2="17" stroke="#bdbdbd" stroke-width="1"/><line x1="1590.1" y1="14" x2="1590.1" y2="17" stroke="#bdbdbd" stroke-width="1"/><line x1="1593.5" y1="11" x2="1593.5" y2="17" stroke="#d0d0d0" stroke-width="1"/><line x1="1596.9" y1="14" x2="1596.9" y2="17" stroke="#bdbdbd" stroke-width="1"/><line x1="1600.3" y1="14" x2="1600.3" y2="17" stroke="#bdbdbd" stroke-width="1"/><line x1="1603.7" y1="14" x2="1603.7" y2="17" stroke="#bdbdbd" stroke-width="1"/><line x1="1607.1" y1="14" x2="1607.1" y2="17" stroke="#bdbdbd" stroke-width="1"/><line x1="1610.5" y1="0" x2="1610.5" y2="17" stroke="#d8d8d8" stroke-width="1"/><line x1="1613.9" y1="14" x2="1613.9" y2="17" stroke="#bdbdbd" stroke-width="1"/><line x1="1617.3" y1="14" x2="1617.3" y2="17" stroke="#bdbdbd" stroke-width="1"/><line x1="1620.7" y1="14" x2="1620.7" y2="17" stroke="#bdbdbd" stroke-width="1"/><line x1="1624.1" y1="14" x2="1624.1" y2="17" stroke="#bdbdbd" stroke-width="1"/><line x1="1627.5" y1="11" x2="1627.5" y2="17" stroke="#d0d0d0" stroke-width="1"/><line x1="1630.9" y1="14" x2="1630.9" y2="17" stroke="#bdbdbd" stroke-width="1"/><line x1="1634.3" y1="14" x2="1634.3" y2="17" stroke="#bdbdbd" stroke-width="1"/><line x1="1637.7" y1="14" x2="1637.7" y2="17" stroke="#bdbdbd" stroke-width="1"/><line x1="1641.1" y1="14" x2="1641.1" y2="17" stroke="#bdbdbd" stroke-width="1"/><line x1="1644.5" y1="0" x2="1644.5" y2="17" stroke="#d8d8d8" stroke-width="1"/><line x1="1647.9" y1="14" x2="1647.9" y2="17" stroke="#bdbdbd" stroke-width="1"/><line x1="1651.3" y1="14" x2="1651.3" y2="17" stroke="#bdbdbd" stroke-width="1"/><line x1="1654.7" y1="14" x2="1654.7" y2="17" stroke="#bdbdbd" stroke-width="1"/><line x1="1658.1" y1="14" x2="1658.1" y2="17" stroke="#bdbdbd" stroke-width="1"/><line x1="1661.5" y1="11" x2="1661.5" y2="17" stroke="#d0d0d0" stroke-width="1"/><line x1="1664.9" y1="14" x2="1664.9" y2="17" stroke="#bdbdbd" stroke-width="1"/><line x1="1668.3" y1="14" x2="1668.3" y2="17" stroke="#bdbdbd" stroke-width="1"/><line x1="1671.7" y1="14" x2="1671.7" y2="17" stroke="#bdbdbd" stroke-width="1"/><line x1="1675.1" y1="14" x2="1675.1" y2="17" stroke="#bdbdbd" stroke-width="1"/><line x1="1678.5" y1="0" x2="1678.5" y2="17" stroke="#d8d8d8" stroke-width="1"/><line x1="1681.9" y1="14" x2="1681.9" y2="17" stroke="#bdbdbd" stroke-width="1"/><line x1="1685.3" y1="14" x2="1685.3" y2="17" stroke="#bdbdbd" stroke-width="1"/><line x1="1688.7" y1="14" x2="1688.7" y2="17" stroke="#bdbdbd" stroke-width="1"/><line x1="1692.1" y1="14" x2="1692.1" y2="17" stroke="#bdbdbd" stroke-width="1"/><line x1="1695.5" y1="11" x2="1695.5" y2="17" stroke="#d0d0d0" stroke-width="1"/><line x1="1698.9" y1="14" x2="1698.9" y2="17" stroke="#bdbdbd" stroke-width="1"/><line x1="1702.3" y1="14" x2="1702.3" y2="17" stroke="#bdbdbd" stroke-width="1"/><line x1="1705.7" y1="14" x2="1705.7" y2="17" stroke="#bdbdbd" stroke-width="1"/><line x1="1709.1" y1="14" x2="1709.1" y2="17" stroke="#bdbdbd" stroke-width="1"/><line x1="1712.5" y1="0" x2="1712.5" y2="17" stroke="#d8d8d8" stroke-width="1"/><line x1="1715.9" y1="14" x2="1715.9" y2="17" stroke="#bdbdbd" stroke-width="1"/><line x1="1719.3" y1="14" x2="1719.3" y2="17" stroke="#bdbdbd" stroke-width="1"/><line x1="1722.7" y1="14" x2="1722.7" y2="17" stroke="#bdbdbd" stroke-width="1"/><line x1="1726.1" y1="14" x2="1726.1" y2="17" stroke="#bdbdbd" stroke-width="1"/><line x1="1729.5" y1="11" x2="1729.5" y2="17" stroke="#d0d0d0" stroke-width="1"/><line x1="1732.9" y1="14" x2="1732.9" y2="17" stroke="#bdbdbd" stroke-width="1"/><line x1="1736.3" y1="14" x2="1736.3" y2="17" stroke="#bdbdbd" stroke-width="1"/><line x1="1739.7" y1="14" x2="1739.7" y2="17" stroke="#bdbdbd" stroke-width="1"/><line x1="1743.1" y1="14" x2="1743.1" y2="17" stroke="#bdbdbd" stroke-width="1"/><line x1="1746.5" y1="0" x2="1746.5" y2="17" stroke="#d8d8d8" stroke-width="1"/><line x1="1749.9" y1="14" x2="1749.9" y2="17" stroke="#bdbdbd" stroke-width="1"/><line x1="1753.3" y1="14" x2="1753.3" y2="17" stroke="#bdbdbd" stroke-width="1"/><line x1="1756.7" y1="14" x2="1756.7" y2="17" stroke="#bdbdbd" stroke-width="1"/><line x1="1760.1" y1="14" x2="1760.1" y2="17" stroke="#bdbdbd" stroke-width="1"/><line x1="1763.5" y1="11" x2="1763.5" y2="17" stroke="#d0d0d0" stroke-width="1"/><line x1="1766.9" y1="14" x2="1766.9" y2="17" stroke="#bdbdbd" stroke-width="1"/><line x1="1770.3" y1="14" x2="1770.3" y2="17" stroke="#bdbdbd" stroke-width="1"/><line x1="1773.7" y1="14" x2="1773.7" y2="17" stroke="#bdbdbd" stroke-width="1"/><line x1="1777.1" y1="14" x2="1777.1" y2="17" stroke="#bdbdbd" stroke-width="1"/><line x1="1780.5" y1="0" x2="1780.5" y2="17" stroke="#d8d8d8" stroke-width="1"/><line x1="1783.9" y1="14" x2="1783.9" y2="17" stroke="#bdbdbd" stroke-width="1"/><line x1="1787.3" y1="14" x2="1787.3" y2="17" stroke="#bdbdbd" stroke-width="1"/><line x1="1790.7" y1="14" x2="1790.7" y2="17" stroke="#bdbdbd" stroke-width="1"/><line x1="1794.1" y1="14" x2="1794.1" y2="17" stroke="#bdbdbd" stroke-width="1"/><line x1="1797.5" y1="11" x2="1797.5" y2="17" stroke="#d0d0d0" stroke-width="1"/><line x1="1800.9" y1="14" x2="1800.9" y2="17" stroke="#bdbdbd" stroke-width="1"/><line x1="1804.3" y1="14" x2="1804.3" y2="17" stroke="#bdbdbd" stroke-width="1"/><line x1="1807.7" y1="14" x2="1807.7" y2="17" stroke="#bdbdbd" stroke-width="1"/><line x1="1811.1" y1="14" x2="1811.1" y2="17" stroke="#bdbdbd" stroke-width="1"/><line x1="1814.5" y1="0" x2="1814.5" y2="17" stroke="#d8d8d8" stroke-width="1"/><line x1="1817.9" y1="14" x2="1817.9" y2="17" stroke="#bdbdbd" stroke-width="1"/><line x1="1821.3" y1="14" x2="1821.3" y2="17" stroke="#bdbdbd" stroke-width="1"/><line x1="1824.7" y1="14" x2="1824.7" y2="17" stroke="#bdbdbd" stroke-width="1"/><text x="15.5" y="12" fill="#f0f0f0" font-size="11.5" font-family="Liberation Sans" stroke="#f0f0f0" stroke-width="0.3">150</text><text x="49.5" y="12" fill="#f0f0f0" font-size="11.5" font-family="Liberation Sans" stroke="#f0f0f0" stroke-width="0.3">140</text><text x="83.5" y="12" fill="#f0f0f0" font-size="11.5" font-family="Liberation Sans" stroke="#f0f0f0" stroke-width="0.3">130</text><text x="117.5" y="12" fill="#f0f0f0" font-size="11.5" font-family="Liberation Sans" stroke="#f0f0f0" stroke-width="0.3">120</text><text x="151.5" y="12" fill="#f0f0f0" font-size="11.5" font-family="Liberation Sans" stroke="#f0f0f0" stroke-width="0.3">110</text><text x="185.5" y="12" fill="#f0f0f0" font-size="11.5" font-family="Liberation Sans" stroke="#f0f0f0" stroke-width="0.3">100</text><text x="219.5" y="12" fill="#f0f0f0" font-size="11.5" font-family="Liberation Sans" stroke="#f0f0f0" stroke-width="0.3">90</text><text x="253.5" y="12" fill="#f0f0f0" font-size="11.5" font-family="Liberation Sans" stroke="#f0f0f0" stroke-width="0.3">80</text><text x="287.5" y="12" fill="#f0f0f0" font-size="11.5" font-family="Liberation Sans" stroke="#f0f0f0" stroke-width="0.3">70</text><text x="321.5" y="12" fill="#f0f0f0" font-size="11.5" font-family="Liberation Sans" stroke="#f0f0f0" stroke-width="0.3">60</text><text x="355.5" y="12" fill="#f0f0f0" font-size="11.5" font-family="Liberation Sans" stroke="#f0f0f0" stroke-width="0.3">50</text><text x="389.5" y="12" fill="#f0f0f0" font-size="11.5" font-family="Liberation Sans" stroke="#f0f0f0" stroke-width="0.3">40</text><text x="423.5" y="12" fill="#f0f0f0" font-size="11.5" font-family="Liberation Sans" stroke="#f0f0f0" stroke-width="0.3">30</text><text x="457.5" y="12" fill="#f0f0f0" font-size="11.5" font-family="Liberation Sans" stroke="#f0f0f0" stroke-width="0.3">20</text><text x="491.5" y="12" fill="#f0f0f0" font-size="11.5" font-family="Liberation Sans" stroke="#f0f0f0" stroke-width="0.3">10</text><text x="525.5" y="12" fill="#f0f0f0" font-size="11.5" font-family="Liberation Sans" stroke="#f0f0f0" stroke-width="0.3">0</text><text x="559.5" y="12" fill="#f0f0f0" font-size="11.5" font-family="Liberation Sans" stroke="#f0f0f0" stroke-width="0.3">10</text><text x="593.5" y="12" fill="#f0f0f0" font-size="11.5" font-family="Liberation Sans" stroke="#f0f0f0" stroke-width="0.3">20</text><text x="627.5" y="12" fill="#f0f0f0" font-size="11.5" font-family="Liberation Sans" stroke="#f0f0f0" stroke-width="0.3">30</text><text x="661.5" y="12" fill="#f0f0f0" font-size="11.5" font-family="Liberation Sans" stroke="#f0f0f0" stroke-width="0.3">40</text><text x="695.5" y="12" fill="#f0f0f0" font-size="11.5" font-family="Liberation Sans" stroke="#f0f0f0" stroke-width="0.3">50</text><text x="729.5" y="12" fill="#f0f0f0" font-size="11.5" font-family="Liberation Sans" stroke="#f0f0f0" stroke-width="0.3">60</text><text x="763.5" y="12" fill="#f0f0f0" font-size="11.5" font-family="Liberation Sans" stroke="#f0f0f0" stroke-width="0.3">70</text><text x="797.5" y="12" fill="#f0f0f0" font-size="11.5" font-family="Liberation Sans" stroke="#f0f0f0" stroke-width="0.3">80</text><text x="831.5" y="12" fill="#f0f0f0" font-size="11.5" font-family="Liberation Sans" stroke="#f0f0f0" stroke-width="0.3">90</text><text x="865.5" y="12" fill="#f0f0f0" font-size="11.5" font-family="Liberation Sans" stroke="#f0f0f0" stroke-width="0.3">100</text><text x="899.5" y="12" fill="#f0f0f0" font-size="11.5" font-family="Liberation Sans" stroke="#f0f0f0" stroke-width="0.3">110</text><text x="933.5" y="12" fill="#f0f0f0" font-size="11.5" font-family="Liberation Sans" stroke="#f0f0f0" stroke-width="0.3">120</text><text x="967.5" y="12" fill="#f0f0f0" font-size="11.5" font-family="Liberation Sans" stroke="#f0f0f0" stroke-width="0.3">130</text><text x="1001.5" y="12" fill="#f0f0f0" font-size="11.5" font-family="Liberation Sans" stroke="#f0f0f0" stroke-width="0.3">140</text><text x="1035.5" y="12" fill="#f0f0f0" font-size="11.5" font-family="Liberation Sans" stroke="#f0f0f0" stroke-width="0.3">150</text><text x="1069.5" y="12" fill="#f0f0f0" font-size="11.5" font-family="Liberation Sans" stroke="#f0f0f0" stroke-width="0.3">160</text><text x="1103.5" y="12" fill="#f0f0f0" font-size="11.5" font-family="Liberation Sans" stroke="#f0f0f0" stroke-width="0.3">170</text><text x="1137.5" y="12" fill="#f0f0f0" font-size="11.5" font-family="Liberation Sans" stroke="#f0f0f0" stroke-width="0.3">180</text><text x="1171.5" y="12" fill="#f0f0f0" font-size="11.5" font-family="Liberation Sans" stroke="#f0f0f0" stroke-width="0.3">190</text><text x="1205.5" y="12" fill="#f0f0f0" font-size="11.5" font-family="Liberation Sans" stroke="#f0f0f0" stroke-width="0.3">200</text><text x="1239.5" y="12" fill="#f0f0f0" font-size="11.5" font-family="Liberation Sans" stroke="#f0f0f0" stroke-width="0.3">210</text><text x="1273.5" y="12" fill="#f0f0f0" font-size="11.5" font-family="Liberation Sans" stroke="#f0f0f0" stroke-width="0.3">220</text><text x="1307.5" y="12" fill="#f0f0f0" font-size="11.5" font-family="Liberation Sans" stroke="#f0f0f0" stroke-width="0.3">230</text><text x="1341.5" y="12" fill="#f0f0f0" font-size="11.5" font-family="Liberation Sans" stroke="#f0f0f0" stroke-width="0.3">240</text><text x="1375.5" y="12" fill="#f0f0f0" font-size="11.5" font-family="Liberation Sans" stroke="#f0f0f0" stroke-width="0.3">250</text><text x="1409.5" y="12" fill="#f0f0f0" font-size="11.5" font-family="Liberation Sans" stroke="#f0f0f0" stroke-width="0.3">260</text><text x="1443.5" y="12" fill="#f0f0f0" font-size="11.5" font-family="Liberation Sans" stroke="#f0f0f0" stroke-width="0.3">270</text><text x="1477.5" y="12" fill="#f0f0f0" font-size="11.5" font-family="Liberation Sans" stroke="#f0f0f0" stroke-width="0.3">280</text><text x="1511.5" y="12" fill="#f0f0f0" font-size="11.5" font-family="Liberation Sans" stroke="#f0f0f0" stroke-width="0.3">290</text><text x="1545.5" y="12" fill="#f0f0f0" font-size="11.5" font-family="Liberation Sans" stroke="#f0f0f0" stroke-width="0.3">300</text><text x="1579.5" y="12" fill="#f0f0f0" font-size="11.5" font-family="Liberation Sans" stroke="#f0f0f0" stroke-width="0.3">310</text><text x="1613.5" y="12" fill="#f0f0f0" font-size="11.5" font-family="Liberation Sans" stroke="#f0f0f0" stroke-width="0.3">320</text><text x="1647.5" y="12" fill="#f0f0f0" font-size="11.5" font-family="Liberation Sans" stroke="#f0f0f0" stroke-width="0.3">330</text><text x="1681.5" y="12" fill="#f0f0f0" font-size="11.5" font-family="Liberation Sans" stroke="#f0f0f0" stroke-width="0.3">340</text><text x="1715.5" y="12" fill="#f0f0f0" font-size="11.5" font-family="Liberation Sans" stroke="#f0f0f0" stroke-width="0.3">350</text><text x="1749.5" y="12" fill="#f0f0f0" font-size="11.5" font-family="Liberation Sans" stroke="#f0f0f0" stroke-width="0.3">360</text><text x="1783.5" y="12" fill="#f0f0f0" font-size="11.5" font-family="Liberation Sans" stroke="#f0f0f0" stroke-width="0.3">370</text><text x="1817.5" y="12" fill="#f0f0f0" font-size="11.5" font-family="Liberation Sans" stroke="#f0f0f0" stroke-width="0.3">380</text></svg>
<svg style="position:absolute;left:0px;top:790px;" width="16" height="273" viewBox="0 0 16 273"><rect width="16" height="273" fill="#1f1f1f"/><line x1="14" y1="-38.8" x2="16" y2="-38.8" stroke="#bdbdbd" stroke-width="1"/><line x1="14" y1="-35.4" x2="16" y2="-35.4" stroke="#bdbdbd" stroke-width="1"/><line x1="11" y1="-32.0" x2="16" y2="-32.0" stroke="#d0d0d0" stroke-width="1"/><line x1="14" y1="-28.6" x2="16" y2="-28.6" stroke="#bdbdbd" stroke-width="1"/><line x1="14" y1="-25.2" x2="16" y2="-25.2" stroke="#bdbdbd" stroke-width="1"/><line x1="14" y1="-21.8" x2="16" y2="-21.8" stroke="#bdbdbd" stroke-width="1"/><line x1="14" y1="-18.4" x2="16" y2="-18.4" stroke="#bdbdbd" stroke-width="1"/><line x1="0" y1="-15.0" x2="16" y2="-15.0" stroke="#d8d8d8" stroke-width="1"/><text x="3" y="-4.0" fill="#f0f0f0" font-size="11" font-family="Liberation Sans">1</text><text x="3" y="6.0" fill="#f0f0f0" font-size="11" font-family="Liberation Sans">7</text><text x="3" y="16.0" fill="#f0f0f0" font-size="11" font-family="Liberation Sans">0</text><line x1="14" y1="-11.6" x2="16" y2="-11.6" stroke="#bdbdbd" stroke-width="1"/><line x1="14" y1="-8.2" x2="16" y2="-8.2" stroke="#bdbdbd" stroke-width="1"/><line x1="14" y1="-4.8" x2="16" y2="-4.8" stroke="#bdbdbd" stroke-width="1"/><line x1="14" y1="-1.4" x2="16" y2="-1.4" stroke="#bdbdbd" stroke-width="1"/><line x1="11" y1="2.0" x2="16" y2="2.0" stroke="#d0d0d0" stroke-width="1"/><line x1="14" y1="5.4" x2="16" y2="5.4" stroke="#bdbdbd" stroke-width="1"/><line x1="14" y1="8.8" x2="16" y2="8.8" stroke="#bdbdbd" stroke-width="1"/><line x1="14" y1="12.2" x2="16" y2="12.2" stroke="#bdbdbd" stroke-width="1"/><line x1="14" y1="15.6" x2="16" y2="15.6" stroke="#bdbdbd" stroke-width="1"/><line x1="0" y1="19.0" x2="16" y2="19.0" stroke="#d8d8d8" stroke-width="1"/><text x="3" y="30.0" fill="#f0f0f0" font-size="11" font-family="Liberation Sans">1</text><text x="3" y="40.0" fill="#f0f0f0" font-size="11" font-family="Liberation Sans">8</text><text x="3" y="50.0" fill="#f0f0f0" font-size="11" font-family="Liberation Sans">0</text><line x1="14" y1="22.4" x2="16" y2="22.4" stroke="#bdbdbd" stroke-width="1"/><line x1="14" y1="25.8" x2="16" y2="25.8" stroke="#bdbdbd" stroke-width="1"/><line x1="14" y1="29.2" x2="16" y2="29.2" stroke="#bdbdbd" stroke-width="1"/><line x1="14" y1="32.6" x2="16" y2="32.6" stroke="#bdbdbd" stroke-width="1"/><line x1="11" y1="36.0" x2="16" y2="36.0" stroke="#d0d0d0" stroke-width="1"/><line x1="14" y1="39.4" x2="16" y2="39.4" stroke="#bdbdbd" stroke-width="1"/><line x1="14" y1="42.8" x2="16" y2="42.8" stroke="#bdbdbd" stroke-width="1"/><line x1="14" y1="46.2" x2="16" y2="46.2" stroke="#bdbdbd" stroke-width="1"/><line x1="14" y1="49.6" x2="16" y2="49.6" stroke="#bdbdbd" stroke-width="1"/><line x1="0" y1="53.0" x2="16" y2="53.0" stroke="#d8d8d8" stroke-width="1"/><text x="3" y="64.0" fill="#f0f0f0" font-size="11" font-family="Liberation Sans">1</text><text x="3" y="74.0" fill="#f0f0f0" font-size="11" font-family="Liberation Sans">9</text><text x="3" y="84.0" fill="#f0f0f0" font-size="11" font-family="Liberation Sans">0</text><line x1="14" y1="56.4" x2="16" y2="56.4" stroke="#bdbdbd" stroke-width="1"/><line x1="14" y1="59.8" x2="16" y2="59.8" stroke="#bdbdbd" stroke-width="1"/><line x1="14" y1="63.2" x2="16" y2="63.2" stroke="#bdbdbd" stroke-width="1"/><line x1="14" y1="66.6" x2="16" y2="66.6" stroke="#bdbdbd" stroke-width="1"/><line x1="11" y1="70.0" x2="16" y2="70.0" stroke="#d0d0d0" stroke-width="1"/><line x1="14" y1="73.4" x2="16" y2="73.4" stroke="#bdbdbd" stroke-width="1"/><line x1="14" y1="76.8" x2="16" y2="76.8" stroke="#bdbdbd" stroke-width="1"/><line x1="14" y1="80.2" x2="16" y2="80.2" stroke="#bdbdbd" stroke-width="1"/><line x1="14" y1="83.6" x2="16" y2="83.6" stroke="#bdbdbd" stroke-width="1"/><line x1="0" y1="87.0" x2="16" y2="87.0" stroke="#d8d8d8" stroke-width="1"/><text x="3" y="98.0" fill="#f0f0f0" font-size="11" font-family="Liberation Sans">2</text><text x="3" y="108.0" fill="#f0f0f0" font-size="11" font-family="Liberation Sans">0</text><text x="3" y="118.0" fill="#f0f0f0" font-size="11" font-family="Liberation Sans">0</text><line x1="14" y1="90.4" x2="16" y2="90.4" stroke="#bdbdbd" stroke-width="1"/><line x1="14" y1="93.8" x2="16" y2="93.8" stroke="#bdbdbd" stroke-width="1"/><line x1="14" y1="97.2" x2="16" y2="97.2" stroke="#bdbdbd" stroke-width="1"/><line x1="14" y1="100.6" x2="16" y2="100.6" stroke="#bdbdbd" stroke-width="1"/><line x1="11" y1="104.0" x2="16" y2="104.0" stroke="#d0d0d0" stroke-width="1"/><line x1="14" y1="107.4" x2="16" y2="107.4" stroke="#bdbdbd" stroke-width="1"/><line x1="14" y1="110.8" x2="16" y2="110.8" stroke="#bdbdbd" stroke-width="1"/><line x1="14" y1="114.2" x2="16" y2="114.2" stroke="#bdbdbd" stroke-width="1"/><line x1="14" y1="117.6" x2="16" y2="117.6" stroke="#bdbdbd" stroke-width="1"/><line x1="0" y1="121.0" x2="16" y2="121.0" stroke="#d8d8d8" stroke-width="1"/><text x="3" y="132.0" fill="#f0f0f0" font-size="11" font-family="Liberation Sans">2</text><text x="3" y="142.0" fill="#f0f0f0" font-size="11" font-family="Liberation Sans">1</text><text x="3" y="152.0" fill="#f0f0f0" font-size="11" font-family="Liberation Sans">0</text><line x1="14" y1="124.4" x2="16" y2="124.4" stroke="#bdbdbd" stroke-width="1"/><line x1="14" y1="127.8" x2="16" y2="127.8" stroke="#bdbdbd" stroke-width="1"/><line x1="14" y1="131.2" x2="16" y2="131.2" stroke="#bdbdbd" stroke-width="1"/><line x1="14" y1="134.6" x2="16" y2="134.6" stroke="#bdbdbd" stroke-width="1"/><line x1="11" y1="138.0" x2="16" y2="138.0" stroke="#d0d0d0" stroke-width="1"/><line x1="14" y1="141.4" x2="16" y2="141.4" stroke="#bdbdbd" stroke-width="1"/><line x1="14" y1="144.8" x2="16" y2="144.8" stroke="#bdbdbd" stroke-width="1"/><line x1="14" y1="148.2" x2="16" y2="148.2" stroke="#bdbdbd" stroke-width="1"/><line x1="14" y1="151.6" x2="16" y2="151.6" stroke="#bdbdbd" stroke-width="1"/><line x1="0" y1="155.0" x2="16" y2="155.0" stroke="#d8d8d8" stroke-width="1"/><text x="3" y="166.0" fill="#f0f0f0" font-size="11" font-family="Liberation Sans">2</text><text x="3" y="176.0" fill="#f0f0f0" font-size="11" font-family="Liberation Sans">2</text><text x="3" y="186.0" fill="#f0f0f0" font-size="11" font-family="Liberation Sans">0</text><line x1="14" y1="158.4" x2="16" y2="158.4" stroke="#bdbdbd" stroke-width="1"/><line x1="14" y1="161.8" x2="16" y2="161.8" stroke="#bdbdbd" stroke-width="1"/><line x1="14" y1="165.2" x2="16" y2="165.2" stroke="#bdbdbd" stroke-width="1"/><line x1="14" y1="168.6" x2="16" y2="168.6" stroke="#bdbdbd" stroke-width="1"/><line x1="11" y1="172.0" x2="16" y2="172.0" stroke="#d0d0d0" stroke-width="1"/><line x1="14" y1="175.4" x2="16" y2="175.4" stroke="#bdbdbd" stroke-width="1"/><line x1="14" y1="178.8" x2="16" y2="178.8" stroke="#bdbdbd" stroke-width="1"/><line x1="14" y1="182.2" x2="16" y2="182.2" stroke="#bdbdbd" stroke-width="1"/><line x1="14" y1="185.6" x2="16" y2="185.6" stroke="#bdbdbd" stroke-width="1"/><line x1="0" y1="189.0" x2="16" y2="189.0" stroke="#d8d8d8" stroke-width="1"/><text x="3" y="200.0" fill="#f0f0f0" font-size="11" font-family="Liberation Sans">2</text><text x="3" y="210.0" fill="#f0f0f0" font-size="11" font-family="Liberation Sans">3</text><text x="3" y="220.0" fill="#f0f0f0" font-size="11" font-family="Liberation Sans">0</text><line x1="14" y1="192.4" x2="16" y2="192.4" stroke="#bdbdbd" stroke-width="1"/><line x1="14" y1="195.8" x2="16" y2="195.8" stroke="#bdbdbd" stroke-width="1"/><line x1="14" y1="199.2" x2="16" y2="199.2" stroke="#bdbdbd" stroke-width="1"/><line x1="14" y1="202.6" x2="16" y2="202.6" stroke="#bdbdbd" stroke-width="1"/><line x1="11" y1="206.0" x2="16" y2="206.0" stroke="#d0d0d0" stroke-width="1"/><line x1="14" y1="209.4" x2="16" y2="209.4" stroke="#bdbdbd" stroke-width="1"/><line x1="14" y1="212.8" x2="16" y2="212.8" stroke="#bdbdbd" stroke-width="1"/><line x1="14" y1="216.2" x2="16" y2="216.2" stroke="#bdbdbd" stroke-width="1"/><line x1="14" y1="219.6" x2="16" y2="219.6" stroke="#bdbdbd" stroke-width="1"/><line x1="0" y1="223.0" x2="16" y2="223.0" stroke="#d8d8d8" stroke-width="1"/><text x="3" y="234.0" fill="#f0f0f0" font-size="11" font-family="Liberation Sans">2</text><text x="3" y="244.0" fill="#f0f0f0" font-size="11" font-family="Liberation Sans">4</text><text x="3" y="254.0" fill="#f0f0f0" font-size="11" font-family="Liberation Sans">0</text><line x1="14" y1="226.4" x2="16" y2="226.4" stroke="#bdbdbd" stroke-width="1"/><line x1="14" y1="229.8" x2="16" y2="229.8" stroke="#bdbdbd" stroke-width="1"/><line x1="14" y1="233.2" x2="16" y2="233.2" stroke="#bdbdbd" stroke-width="1"/><line x1="14" y1="236.6" x2="16" y2="236.6" stroke="#bdbdbd" stroke-width="1"/><line x1="11" y1="240.0" x2="16" y2="240.0" stroke="#d0d0d0" stroke-width="1"/><line x1="14" y1="243.4" x2="16" y2="243.4" stroke="#bdbdbd" stroke-width="1"/><line x1="14" y1="246.8" x2="16" y2="246.8" stroke="#bdbdbd" stroke-width="1"/><line x1="14" y1="250.2" x2="16" y2="250.2" stroke="#bdbdbd" stroke-width="1"/><line x1="14" y1="253.6" x2="16" y2="253.6" stroke="#bdbdbd" stroke-width="1"/><line x1="0" y1="257.0" x2="16" y2="257.0" stroke="#d8d8d8" stroke-width="1"/><text x="3" y="268.0" fill="#f0f0f0" font-size="11" font-family="Liberation Sans">2</text><text x="3" y="278.0" fill="#f0f0f0" font-size="11" font-family="Liberation Sans">5</text><text x="3" y="288.0" fill="#f0f0f0" font-size="11" font-family="Liberation Sans">0</text><line x1="14" y1="260.4" x2="16" y2="260.4" stroke="#bdbdbd" stroke-width="1"/><line x1="14" y1="263.8" x2="16" y2="263.8" stroke="#bdbdbd" stroke-width="1"/><line x1="14" y1="267.2" x2="16" y2="267.2" stroke="#bdbdbd" stroke-width="1"/><line x1="14" y1="270.6" x2="16" y2="270.6" stroke="#bdbdbd" stroke-width="1"/></svg>
<div style="position:absolute;left:1864px;top:156px;width:17px;height:907px;background:#4a4a4a;"></div>
<div style="position:absolute;left:1866px;top:400px;width:12px;height:165px;background:#676767;border-radius:6px;"></div>
<div style="position:absolute;left:1880px;top:128px;width:2px;height:935px;background:#3b3b3b;"></div>
<div style="position:absolute;left:1882px;top:128px;width:38px;height:935px;background:#535353;"></div>
<div style="position:absolute;left:1882px;top:128px;width:38px;height:12px;background:#434343;"></div>
<div style="position:absolute;left:1902px;top:127px;font-size:11px;line-height:13px;color:#dddddd;font-weight:bold;white-space:nowrap;">‹‹</div>
<div style="position:absolute;left:1891px;top:143px;width:1px;height:4px;background:#3e3e3e;"></div>
<div style="position:absolute;left:1893px;top:143px;width:1px;height:4px;background:#3e3e3e;"></div>
<div style="position:absolute;left:1895px;top:143px;width:1px;height:4px;background:#3e3e3e;"></div>
<div style="position:absolute;left:1897px;top:143px;width:1px;height:4px;background:#3e3e3e;"></div>
<div style="position:absolute;left:1899px;top:143px;width:1px;height:4px;background:#3e3e3e;"></div>
<div style="position:absolute;left:1901px;top:143px;width:1px;height:4px;background:#3e3e3e;"></div>
<div style="position:absolute;left:1903px;top:143px;width:1px;height:4px;background:#3e3e3e;"></div>
<div style="position:absolute;left:1905px;top:143px;width:1px;height:4px;background:#3e3e3e;"></div>
<div style="position:absolute;left:1907px;top:143px;width:1px;height:4px;background:#3e3e3e;"></div>
<div style="position:absolute;left:1909px;top:143px;width:1px;height:4px;background:#3e3e3e;"></div>
<div style="position:absolute;left:1911px;top:143px;width:1px;height:4px;background:#3e3e3e;"></div>
<svg style="position:absolute;left:1890px;top:152px;" width="22" height="22" viewBox="0 0 22 22"><g stroke="#d0d0d0" stroke-width="1.3" fill="#535353"><line x1="2" y1="5" x2="20" y2="5"/><line x1="2" y1="11" x2="20" y2="11"/><line x1="2" y1="17" x2="20" y2="17"/><circle cx="7" cy="5" r="2.2"/><circle cx="14" cy="11" r="2.2"/><circle cx="8" cy="17" r="2.2"/></g></svg>
<svg style="position:absolute;left:1891px;top:180px;" width="20" height="20" viewBox="0 0 20 20"><rect x="1.5" y="3.5" width="13" height="14" fill="none" stroke="#d0d0d0" stroke-width="1.2"/><rect x="4.5" y="1.5" width="13" height="14" fill="#535353" stroke="#d0d0d0" stroke-width="1.2"/><path d="M11 1.5 L11 7 L12.5 5.5 L14 7 L14 1.5" fill="#d0d0d0"/></svg>
<svg style="position:absolute;left:1891px;top:208px;" width="20" height="20" viewBox="0 0 20 20"><path d="M1 8 L5 3 L9 7 L9 18 L1 18 Z" fill="#d0d0d0"/><path d="M19 8 L15 3 L11 7 L11 18 L19 18 Z" fill="#d0d0d0"/><line x1="10" y1="1" x2="10" y2="19" stroke="#d0d0d0"/></svg>
<svg style="position:absolute;left:1890px;top:238px;" width="22" height="16" viewBox="0 0 22 16"><rect x="1.5" y="3" width="11" height="8" rx="4" fill="none" stroke="#d0d0d0" stroke-width="1.8"/><rect x="9.5" y="5" width="11" height="8" rx="4" fill="none" stroke="#d0d0d0" stroke-width="1.8"/></svg>
<div style="position:absolute;left:1882px;top:264px;width:38px;height:1px;background:#444444;"></div>
<div style="position:absolute;left:1891px;top:268px;width:1px;height:4px;background:#3e3e3e;"></div>
<div style="position:absolute;left:1893px;top:268px;width:1px;height:4px;background:#3e3e3e;"></div>
<div style="position:absolute;left:1895px;top:268px;width:1px;height:4px;background:#3e3e3e;"></div>
<div style="position:absolute;left:1897px;top:268px;width:1px;height:4px;background:#3e3e3e;"></div>
<div style="position:absolute;left:1899px;top:268px;width:1px;height:4px;background:#3e3e3e;"></div>
<div style="position:absolute;left:1901px;top:268px;width:1px;height:4px;background:#3e3e3e;"></div>
<div style="position:absolute;left:1903px;top:268px;width:1px;height:4px;background:#3e3e3e;"></div>
<div style="position:absolute;left:1905px;top:268px;width:1px;height:4px;background:#3e3e3e;"></div>
<div style="position:absolute;left:1907px;top:268px;width:1px;height:4px;background:#3e3e3e;"></div>
<div style="position:absolute;left:1909px;top:268px;width:1px;height:4px;background:#3e3e3e;"></div>
<div style="position:absolute;left:1911px;top:268px;width:1px;height:4px;background:#3e3e3e;"></div>
<svg style="position:absolute;left:1890px;top:279px;" width="22" height="16" viewBox="0 0 22 16"><g stroke="#d0d0d0" stroke-width="2"><line x1="2" y1="3" x2="20" y2="3"/><line x1="2" y1="8" x2="20" y2="8"/><line x1="2" y1="13" x2="20" y2="13"/></g></svg>
<svg style="position:absolute;left:1890px;top:304px;" width="22" height="20" viewBox="0 0 22 20"><path d="M11 2 C4 2 1 7 2 11 C3 15 7 17 9 15 C10 13 8 12 10 11 C12 10 15 13 18 12 C21 10 19 2 11 2 Z" fill="#d0d0d0"/><circle cx="6" cy="9" r="1.5" fill="#535353"/><circle cx="10" cy="6" r="1.5" fill="#535353"/><circle cx="15" cy="7" r="1.5" fill="#535353"/></svg>
<div style="position:absolute;left:1882px;top:333px;width:38px;height:1px;background:#444444;"></div>
<div style="position:absolute;left:1891px;top:337px;width:1px;height:4px;background:#3e3e3e;"></div>
<div style="position:absolute;left:1893px;top:337px;width:1px;height:4px;background:#3e3e3e;"></div>
<div style="position:absolute;left:1895px;top:337px;width:1px;height:4px;background:#3e3e3e;"></div>
<div style="position:absolute;left:1897px;top:337px;width:1px;height:4px;background:#3e3e3e;"></div>
<div style="position:absolute;left:1899px;top:337px;width:1px;height:4px;background:#3e3e3e;"></div>
<div style="position:absolute;left:1901px;top:337px;width:1px;height:4px;background:#3e3e3e;"></div>
<div style="position:absolute;left:1903px;top:337px;width:1px;height:4px;background:#3e3e3e;"></div>
<div style="position:absolute;left:1905px;top:337px;width:1px;height:4px;background:#3e3e3e;"></div>
<div style="position:absolute;left:1907px;top:337px;width:1px;height:4px;background:#3e3e3e;"></div>
<div style="position:absolute;left:1909px;top:337px;width:1px;height:4px;background:#3e3e3e;"></div>
<div style="position:absolute;left:1911px;top:337px;width:1px;height:4px;background:#3e3e3e;"></div>
<svg style="position:absolute;left:1890px;top:346px;" width="22" height="20" viewBox="0 0 22 20"><rect x="2" y="3" width="18" height="13" fill="none" stroke="#d0d0d0" stroke-width="1.3"/><rect x="2" y="3" width="18" height="4" fill="#d0d0d0"/><line x1="8" y1="3" x2="8" y2="16" stroke="#d0d0d0"/><line x1="14" y1="3" x2="14" y2="16" stroke="#d0d0d0"/></svg>
<svg style="position:absolute;left:1890px;top:373px;" width="22" height="22" viewBox="0 0 22 22"><rect x="2" y="5" width="15" height="15" fill="none" stroke="#d0d0d0" stroke-width="1.2"/><path d="M17 1 L18 4 L21 5 L18 6 L17 9 L16 6 L13 5 L16 4 Z" fill="#d0d0d0"/><path d="M5 17 L9 12 L13 17" fill="none" stroke="#d0d0d0"/></svg>
<div style="position:absolute;left:1882px;top:404px;width:38px;height:1px;background:#444444;"></div>
<div style="position:absolute;left:1891px;top:408px;width:1px;height:4px;background:#3e3e3e;"></div>
<div style="position:absolute;left:1893px;top:408px;width:1px;height:4px;background:#3e3e3e;"></div>
<div style="position:absolute;left:1895px;top:408px;width:1px;height:4px;background:#3e3e3e;"></div>
<div style="position:absolute;left:1897px;top:408px;width:1px;height:4px;background:#3e3e3e;"></div>
<div style="position:absolute;left:1899px;top:408px;width:1px;height:4px;background:#3e3e3e;"></div>
<div style="position:absolute;left:1901px;top:408px;width:1px;height:4px;background:#3e3e3e;"></div>
<div style="position:absolute;left:1903px;top:408px;width:1px;height:4px;background:#3e3e3e;"></div>
<div style="position:absolute;left:1905px;top:408px;width:1px;height:4px;background:#3e3e3e;"></div>
<div style="position:absolute;left:1907px;top:408px;width:1px;height:4px;background:#3e3e3e;"></div>
<div style="position:absolute;left:1909px;top:408px;width:1px;height:4px;background:#3e3e3e;"></div>
<div style="position:absolute;left:1911px;top:408px;width:1px;height:4px;background:#3e3e3e;"></div>
<svg style="position:absolute;left:1890px;top:415px;" width="22" height="22" viewBox="0 0 22 22"><rect x="3" y="2" width="5" height="5" fill="none" stroke="#d0d0d0" stroke-width="1.2"/><rect x="3" y="9" width="5" height="5" fill="none" stroke="#d0d0d0" stroke-width="1.2"/><rect x="3" y="16" width="5" height="5" fill="#d0d0d0"/><path d="M12 18 L12 8 A4 4 0 0 1 19 8" fill="none" stroke="#d0d0d0" stroke-width="1.6"/><path d="M17 4 L20 8 L16 9Z" fill="#d0d0d0"/></svg>
<div style="position:absolute;left:1882px;top:445px;width:38px;height:1px;background:#444444;"></div>
<div style="position:absolute;left:1891px;top:449px;width:1px;height:4px;background:#3e3e3e;"></div>
<div style="position:absolute;left:1893px;top:449px;width:1px;height:4px;background:#3e3e3e;"></div>
<div style="position:absolute;left:1895px;top:449px;width:1px;height:4px;background:#3e3e3e;"></div>
<div style="position:absolute;left:1897px;top:449px;width:1px;height:4px;background:#3e3e3e;"></div>
<div style="position:absolute;left:1899px;top:449px;width:1px;height:4px;background:#3e3e3e;"></div>
<div style="position:absolute;left:1901px;top:449px;width:1px;height:4px;background:#3e3e3e;"></div>
<div style="position:absolute;left:1903px;top:449px;width:1px;height:4px;background:#3e3e3e;"></div>
<div style="position:absolute;left:1905px;top:449px;width:1px;height:4px;background:#3e3e3e;"></div>
<div style="position:absolute;left:1907px;top:449px;width:1px;height:4px;background:#3e3e3e;"></div>
<div style="position:absolute;left:1909px;top:449px;width:1px;height:4px;background:#3e3e3e;"></div>
<div style="position:absolute;left:1911px;top:449px;width:1px;height:4px;background:#3e3e3e;"></div>
<svg style="position:absolute;left:1889px;top:456px;" width="24" height="22" viewBox="0 0 24 22"><path d="M2 5 L10 5 L10 2 L15 7 L10 12 L10 9 L2 9 Z" fill="#d0d0d0"/><path d="M2 11 L8 11 L8 8 L12 13 L8 18 L8 15 L2 15Z" fill="#d0d0d0"/><circle cx="17" cy="15" r="4" fill="none" stroke="#d0d0d0" stroke-width="2.2" stroke-dasharray="1.8 1.2"/></svg>
<div style="position:absolute;left:1882px;top:484px;width:38px;height:1px;background:#444444;"></div>
<div style="position:absolute;left:0px;top:148px;width:41px;height:643px;background:#535353;border-right:1px solid #3b3b3b;border-bottom:1px solid #3b3b3b;"></div>
<div style="position:absolute;left:15px;top:152px;width:1px;height:5px;background:#444444;"></div>
<div style="position:absolute;left:17px;top:152px;width:1px;height:5px;background:#444444;"></div>
<div style="position:absolute;left:19px;top:152px;width:1px;height:5px;background:#444444;"></div>
<div style="position:absolute;left:21px;top:152px;width:1px;height:5px;background:#444444;"></div>
<div style="position:absolute;left:23px;top:152px;width:1px;height:5px;background:#444444;"></div>
<div style="position:absolute;left:25px;top:152px;width:1px;height:5px;background:#444444;"></div>
<div style="position:absolute;left:27px;top:152px;width:1px;height:5px;background:#444444;"></div>
<div style="position:absolute;left:29px;top:152px;width:1px;height:5px;background:#444444;"></div>
<div style="position:absolute;left:7px;top:164px;width:27px;height:21px;background:#363636;border-radius:3px;"></div>
<svg style="position:absolute;left:10px;top:163px;" width="20" height="22" viewBox="0 0 20 22"><path d="M5.5 3.5 L16.5 13.5 L11 14 L6 19.5 Z" fill="none" stroke="#cfcfcf" stroke-width="1.1"/></svg>
<svg style="position:absolute;left:10px;top:188px;" width="20" height="22" viewBox="0 0 20 22"><path d="M5 3 L16 11 L10.5 12 L7 17 Z" fill="#9a9a9a"/></svg>
<svg style="position:absolute;left:10px;top:211px;" width="20" height="22" viewBox="0 0 20 22"><path d="M4 2 L11 2 L14 5 L14 10 M4 2 L4 17 L9 17" fill="none" stroke="#d2d2d2" stroke-width="1.2"/><path d="M11 2 L11 5 L14 5" fill="none" stroke="#d2d2d2"/><path d="M10 11 L17 15 L10 19Z" fill="#d2d2d2"/></svg>
<svg style="position:absolute;left:9px;top:236px;" width="22" height="20" viewBox="0 0 22 20"><g stroke="#d2d2d2" stroke-width="1.4"><line x1="2" y1="3" x2="2" y2="17"/><line x1="20" y1="3" x2="20" y2="17"/><line x1="5" y1="10" x2="17" y2="10"/></g><path d="M5 10 L8 7.5 L8 12.5Z M17 10 L14 7.5 L14 12.5Z" fill="#d2d2d2"/></svg>
<svg style="position:absolute;left:9px;top:259px;" width="22" height="22" viewBox="0 0 22 22"><rect x="3" y="9" width="14" height="10" fill="#d2d2d2"/><g fill="#535353"><rect x="5" y="13" width="2" height="2"/><rect x="9" y="13" width="2" height="2"/><rect x="13" y="13" width="2" height="2"/></g><path d="M6 2 L11 8 M8 8 L11 8 L11 5" stroke="#d2d2d2" fill="none" stroke-width="1.4"/><path d="M18 18 L21 21 L18 21Z" fill="#d2d2d2"/></svg>
<div style="position:absolute;left:10px;top:286px;font-size:21px;line-height:23px;color:#d2d2d2;font-weight:normal;white-space:nowrap;font-family:"Liberation Serif",serif;">T</div>
<svg style="position:absolute;left:10px;top:308px;" width="22" height="24" viewBox="0 0 22 24"><line x1="3" y1="20" x2="18" y2="4" stroke="#d2d2d2" stroke-width="1.4"/></svg>
<svg style="position:absolute;left:8px;top:333px;" width="24" height="24" viewBox="0 0 24 24"><path d="M8 14 L13 6 L19 9 L17 16 Z" fill="#d2d2d2"/><path d="M8 14 L4 19" stroke="#d2d2d2" stroke-width="1.4"/><line x1="2" y1="7" x2="9" y2="7" stroke="#d2d2d2" stroke-width="1.4"/><path d="M20 19 L23 22 L20 22Z" fill="#d2d2d2"/></svg>
<svg style="position:absolute;left:9px;top:357px;" width="22" height="22" viewBox="0 0 22 22"><path d="M4 18 L5 14 L15 4 L18 7 L8 17 Z" fill="#d2d2d2"/><path d="M19 18 L22 21 L19 21Z" fill="#d2d2d2"/></svg>
<svg style="position:absolute;left:9px;top:381px;" width="22" height="22" viewBox="0 0 22 22"><rect x="2" y="3" width="16" height="16" fill="none" stroke="#d2d2d2" stroke-width="1.3"/><line x1="2" y1="3" x2="18" y2="19" stroke="#d2d2d2" stroke-width="1.1"/><line x1="18" y1="3" x2="2" y2="19" stroke="#d2d2d2" stroke-width="1.1"/><path d="M19 19 L22 22 L19 22Z" fill="#d2d2d2"/></svg>
<svg style="position:absolute;left:9px;top:406px;" width="22" height="22" viewBox="0 0 22 22"><rect x="2" y="3" width="16" height="15" fill="none" stroke="#d2d2d2" stroke-width="1.3"/><path d="M19 19 L22 22 L19 22Z" fill="#d2d2d2"/></svg>
<svg style="position:absolute;left:9px;top:431px;" width="22" height="22" viewBox="0 0 22 22"><circle cx="5" cy="16" r="3" fill="none" stroke="#d2d2d2" stroke-width="1.3"/><circle cx="16" cy="16" r="3" fill="none" stroke="#d2d2d2" stroke-width="1.3"/><line x1="7" y1="14" x2="16" y2="3" stroke="#d2d2d2" stroke-width="1.3"/><line x1="14" y1="14" x2="5" y2="3" stroke="#d2d2d2" stroke-width="1.3"/></svg>
<svg style="position:absolute;left:9px;top:456px;" width="22" height="22" viewBox="0 0 22 22"><path d="M6 6 A7 7 0 1 1 4 14" fill="none" stroke="#d2d2d2" stroke-width="1.5" stroke-dasharray="3 1.5"/><path d="M2 3 L7 7 L2 9Z" fill="#d2d2d2"/><path d="M19 19 L22 22 L19 22Z" fill="#d2d2d2"/></svg>
<svg style="position:absolute;left:10px;top:481px;" width="20" height="20" viewBox="0 0 20 20"><defs><linearGradient id="gtb"><stop offset="0" stop-color="#111"/><stop offset="1" stop-color="#eee"/></linearGradient></defs><rect x="2" y="2" width="15" height="15" fill="url(#gtb)" stroke="#d2d2d2"/></svg>
<svg style="position:absolute;left:10px;top:506px;" width="20" height="20" viewBox="0 0 20 20"><defs><pattern id="chk" width="4" height="4" patternUnits="userSpaceOnUse"><rect width="2" height="2" fill="#111"/><rect x="2" y="2" width="2" height="2" fill="#111"/><rect x="2" width="2" height="2" fill="#ddd"/><rect y="2" width="2" height="2" fill="#ddd"/></pattern></defs><rect x="2" y="2" width="15" height="15" fill="url(#chk)"/></svg>
<svg style="position:absolute;left:10px;top:531px;" width="22" height="22" viewBox="0 0 22 22"><rect x="3" y="3" width="14" height="15" fill="#d2d2d2"/><g stroke="#535353" stroke-width="1.2"><line x1="5" y1="7" x2="15" y2="7"/><line x1="5" y1="10" x2="15" y2="10"/><line x1="5" y1="13" x2="11" y2="13"/></g><path d="M13 18 L17 14 L17 18Z" fill="#535353"/></svg>
<svg style="position:absolute;left:9px;top:555px;" width="22" height="22" viewBox="0 0 22 22"><path d="M4 19 L3 18 L12 9 L14 11 Z" fill="none" stroke="#d2d2d2" stroke-width="1.4"/><path d="M12 8 L16 4 A2 2 0 0 1 19 7 L15 11Z" fill="#d2d2d2"/><path d="M19 19 L22 22 L19 22Z" fill="#d2d2d2"/></svg>
<svg style="position:absolute;left:9px;top:579px;" width="22" height="22" viewBox="0 0 22 22"><path d="M6 20 L3 12 L5 11 L7 14 L7 4 L9 4 L9 10 L9 2 L11 2 L11 10 L11 3 L13 3 L13 10 L13 5 L15 5 L15 13 L17 10 L19 11 L15 20 Z" fill="#d2d2d2"/></svg>
<svg style="position:absolute;left:9px;top:604px;" width="22" height="22" viewBox="0 0 22 22"><circle cx="9" cy="9" r="6" fill="none" stroke="#d2d2d2" stroke-width="1.6"/><line x1="13.5" y1="13.5" x2="19" y2="19" stroke="#d2d2d2" stroke-width="2"/></svg>
<svg style="position:absolute;left:4px;top:628px;" width="16" height="16" viewBox="0 0 16 16"><rect x="1" y="1" width="9" height="9" fill="#fff" stroke="#000"/><rect x="5" y="5" width="9" height="9" fill="#000" stroke="#fff" stroke-width="1.2"/><rect x="7" y="7" width="5" height="5" fill="none" stroke="#fff"/></svg>
<svg style="position:absolute;left:22px;top:630px;" width="16" height="14" viewBox="0 0 16 14"><path d="M3 12 L3 5 A3 3 0 0 1 6 2 L11 2" fill="none" stroke="#d2d2d2" stroke-width="1.3"/><path d="M9 0 L12 2 L9 4Z M1 10 L3 13 L5 10Z" fill="#d2d2d2"/></svg>
<svg style="position:absolute;left:6px;top:649px;" width="30" height="30" viewBox="0 0 30 30"><rect x="1" y="1" width="15" height="15" fill="#fff"/><line x1="1" y1="16" x2="16" y2="1" stroke="#c0272d" stroke-width="2"/><rect x="11" y="11" width="17" height="17" fill="#fff" stroke="#333"/><rect x="15" y="15" width="9" height="9" fill="#9b2a2a"/><line x1="11" y1="28" x2="28" y2="11" stroke="#c0272d" stroke-width="2"/></svg>
<div style="position:absolute;left:6px;top:686px;width:14px;height:14px;background:#3a3a3a;"></div>
<svg style="position:absolute;left:7px;top:687px;" width="12" height="12" viewBox="0 0 12 12"><rect x="2" y="2" width="8" height="8" fill="none" stroke="#ddd" stroke-width="1.2"/></svg>
<div style="position:absolute;left:23px;top:684px;font-size:14px;line-height:16px;color:#d2d2d2;font-weight:bold;white-space:nowrap;font-family:"Liberation Serif",serif;">T</div>
<div style="position:absolute;left:6px;top:704px;width:28px;height:26px;background:#2d2d2d;border-radius:2px;"></div>
<svg style="position:absolute;left:10px;top:707px;" width="20" height="20" viewBox="0 0 20 20"><rect x="1" y="1" width="17" height="17" fill="#fff"/><line x1="1" y1="18" x2="18" y2="1" stroke="#c0272d" stroke-width="2"/><path d="M17 17 L20 20 L17 20Z" fill="#ddd"/></svg>
<svg style="position:absolute;left:10px;top:734px;" width="22" height="20" viewBox="0 0 22 20"><g fill="#d2d2d2"><rect x="6" y="7" width="12" height="8"/><rect x="2" y="9" width="3" height="1"/><rect x="2" y="12" width="3" height="1"/><rect x="7" y="3" width="1" height="3"/><rect x="10" y="3" width="1" height="3"/><rect x="13" y="3" width="1" height="3"/><rect x="16" y="3" width="1" height="3"/></g></svg>
<div style="position:absolute;left:6px;top:760px;width:28px;height:27px;background:#2d2d2d;border-radius:2px;"></div>
<svg style="position:absolute;left:9px;top:763px;" width="22" height="22" viewBox="0 0 22 22"><rect x="3" y="4" width="14" height="13" fill="none" stroke="#d2d2d2" stroke-width="1.3"/><rect x="3" y="4" width="14" height="3" fill="#d2d2d2"/><path d="M18 18 L21 21 L18 21Z" fill="#d2d2d2"/></svg>
<div style="position:absolute;left:0px;top:1063px;width:1920px;height:17px;background:#535353;"></div>
<div style="position:absolute;left:0px;top:1062px;width:1864px;height:1px;background:#3b3b3b;"></div>
<div id="f23" style="position:absolute;left:15px;top:1064px;font-size:12px;line-height:14px;font-weight:normal;color:#dddddd;white-space:nowrap;transform-origin:0 0;transform:scaleX(0.9536);-webkit-text-stroke:0.2px #dddddd;">106,67</div>
<svg style="position:absolute;left:57px;top:1067px;" width="12" height="10" viewBox="0 0 12 10"><path d="M2 3 L6 7 L10 3" fill="none" stroke="#cfcfcf" stroke-width="1.4"/></svg>
<svg style="position:absolute;left:76px;top:1065px;" width="14" height="13" viewBox="0 0 14 13"><rect x="2" y="2" width="1.6" height="9" fill="#cfcfcf"/><path d="M11 2 L4.5 6.5 L11 11 Z" fill="#cfcfcf"/></svg>
<svg style="position:absolute;left:98px;top:1065px;" width="12" height="13" viewBox="0 0 12 13"><path d="M8 2 L2.5 6.5 L8 11 Z" fill="#cfcfcf"/></svg>
<div style="position:absolute;left:118px;top:1064px;width:87px;height:16px;background:#454545;border:1px solid #3a3a3a;"></div>
<div id="f24" style="position:absolute;left:122px;top:1064px;font-size:12px;line-height:14px;font-weight:normal;color:#eeeeee;white-space:nowrap;transform-origin:0 0;transform:scaleX(1.0467);-webkit-text-stroke:0.2px #eeeeee;">2</div>
<div style="position:absolute;left:188px;top:1064px;width:1px;height:16px;background:#3a3a3a;"></div>
<svg style="position:absolute;left:192px;top:1067px;" width="12" height="10" viewBox="0 0 12 10"><path d="M2 3 L6 7 L10 3" fill="none" stroke="#cfcfcf" stroke-width="1.4"/></svg>
<svg style="position:absolute;left:218px;top:1065px;" width="12" height="13" viewBox="0 0 12 13"><path d="M3 2 L8.5 6.5 L3 11 Z" fill="#cfcfcf"/></svg>
<svg style="position:absolute;left:237px;top:1065px;" width="14" height="13" viewBox="0 0 14 13"><path d="M2 2 L8.5 6.5 L2 11 Z" fill="#cfcfcf"/><rect x="10" y="2" width="1.6" height="9" fill="#cfcfcf"/></svg>
<svg style="position:absolute;left:263px;top:1064px;" width="20" height="15" viewBox="0 0 20 15"><circle cx="8" cy="8" r="5.5" fill="none" stroke="#d6d6d6" stroke-width="1.6"/><rect x="6" y="3" width="4" height="5" fill="#d6d6d6"/><circle cx="16" cy="13" r="1" fill="#d6d6d6"/></svg>
<div id="f25" style="position:absolute;left:297px;top:1064px;font-size:12px;line-height:14px;font-weight:normal;color:#c6c6c6;white-space:nowrap;transform-origin:0 0;transform:scaleX(0.9092);-webkit-text-stroke:0.2px #c6c6c6;">[Standard] (de tra...</div>
<svg style="position:absolute;left:397px;top:1067px;" width="12" height="10" viewBox="0 0 12 10"><path d="M2 3 L6 7 L10 3" fill="none" stroke="#cfcfcf" stroke-width="1.4"/></svg>
<svg style="position:absolute;left:421px;top:1064px;" width="14" height="14" viewBox="0 0 14 14"><circle cx="7" cy="7" r="4.6" fill="none" stroke="#9a9a9a" stroke-width="1"/></svg>
<div id="f26" style="position:absolute;left:439px;top:1064px;font-size:12px;line-height:14px;font-weight:bold;color:#e6e6e6;white-space:nowrap;transform-origin:0 0;transform:scaleX(0.8748);">Contrôle en ai</div>
<svg style="position:absolute;left:511px;top:1067px;" width="12" height="10" viewBox="0 0 12 10"><path d="M2 3 L6 7 L10 3" fill="none" stroke="#cfcfcf" stroke-width="1.4"/></svg>
<div style="position:absolute;left:630px;top:1066px;width:1136px;height:13px;background:#6a6a6a;border-radius:6.5px;"></div>
<svg style="position:absolute;left:1845px;top:1065px;" width="18" height="14" viewBox="0 0 18 14"><rect x="1.5" y="2" width="14" height="10" fill="none" stroke="#cfcfcf" stroke-width="1.2"/><line x1="8.5" y1="2" x2="8.5" y2="12" stroke="#cfcfcf" stroke-width="1.2"/></svg>
<div style="position:absolute;left:562px;top:195px;width:716px;height:868px;background:#ffffff;border-left:1px solid #3a3a3a;border-top:1px solid #3a3a3a;border-right:1px solid #3a3a3a;"></div>
<div style="position:absolute;left:1278px;top:198px;width:2px;height:865px;background:rgba(0,0,0,0.18);"></div>
<div id="f27" class="pg" style="left:617px;top:255.8px;font-size:14.5px;line-height:14.5px;font-weight:bold;color:#0a0a0a;transform-origin:0 0;transform:scaleX(0.9479);-webkit-text-stroke:0.55px #0a0a0a;">Villa Horizon</div>
<div id="f28" class="pg" style="left:617px;top:272.8px;font-size:9.6px;line-height:9.6px;font-weight:normal;color:#111;transform-origin:0 0;transform:scaleX(0.6886);-webkit-text-stroke:0.25px #111;">Type :</div>
<div id="f29" class="pg" style="left:638px;top:273.1px;font-size:9.2px;line-height:9.2px;font-weight:bold;color:#111;transform-origin:0 0;transform:scaleX(1.1754);-webkit-text-stroke:0.15px #111;">CONTEMPORAINE</div>
<div id="f30" class="pg" style="left:617px;top:285.0px;font-size:9.6px;line-height:9.6px;font-weight:normal;color:#111;transform-origin:0 0;transform:scaleX(0.7030);-webkit-text-stroke:0.25px #111;">Surface :</div>
<div id="f31" class="pg" style="left:647px;top:285.3px;font-size:9.2px;line-height:9.2px;font-weight:bold;color:#111;transform-origin:0 0;transform:scaleX(1.3282);-webkit-text-stroke:0.15px #111;">600 M²</div>
<div id="f32" class="pg" style="left:687.8px;top:285.0px;font-size:9.6px;line-height:9.6px;font-weight:normal;color:#111;transform-origin:0 0;transform:scaleX(0.7035);-webkit-text-stroke:0.25px #111;">- Prix :</div>
<div id="f33" class="pg" style="left:710.8px;top:285.3px;font-size:9.2px;line-height:9.2px;font-weight:bold;color:#111;transform-origin:0 0;transform:scaleX(1.3091);-webkit-text-stroke:0.15px #111;">2 450 000€</div>
<svg style="position:absolute;left:617px;top:311px" width="182" height="90" viewBox="0 0 182 90"><rect width="182" height="90" fill="#f0eee6"/><polygon points="8,56 50,52 120,55 176,58 176,70 120,66 60,72 8,68" fill="#dfe4d3" stroke="none" stroke-width="0" opacity="0.9" stroke-linejoin="round"/><ellipse cx="20" cy="42" rx="7" ry="7.5" fill="#c9d4b6" stroke="none" stroke-width="0.6" opacity="1"/><line x1="20" y1="46" x2="20" y2="58" stroke="#7d8470" stroke-width="0.8" opacity="1"/><ellipse cx="151" cy="43" rx="6" ry="7" fill="#ccd6bb" stroke="none" stroke-width="0.6" opacity="1"/><line x1="151" y1="47" x2="151" y2="58" stroke="#7d8470" stroke-width="0.8" opacity="1"/><polygon points="40,25 51,25 79.5,16.5 137,29.5 137,40 75.4,34 40,39" fill="#eef0ee" stroke="none" stroke-width="0.7" opacity="1" stroke-linejoin="round"/><polygon points="57,23 70,19 70,31 57,36" fill="#c7a77c" stroke="none" stroke-width="0.7" opacity="1" stroke-linejoin="round"/><polygon points="71,18.5 80,16.5 80,33.5 71,34.5" fill="#d3dfe5" stroke="#3a3a3a" stroke-width="0.5" opacity="1" stroke-linejoin="round"/><polygon points="80,16.5 103,22 103,35.5 80,33.5" fill="#d7e2e7" stroke="#3a3a3a" stroke-width="0.5" opacity="1" stroke-linejoin="round"/><line x1="91" y1="19.2" x2="91" y2="34.5" stroke="#3a3a3a" stroke-width="0.6" opacity="1"/><polygon points="104,22.3 121,26 121,37.5 104,35.6" fill="#c7a57a" stroke="none" stroke-width="0.7" opacity="1" stroke-linejoin="round"/><line x1="114" y1="24.5" x2="114" y2="37" stroke="#3a3a3a" stroke-width="0.5" opacity="1"/><polygon points="122,26.2 137,29.5 137,40 122,37.6" fill="#dae4e8" stroke="#3a3a3a" stroke-width="0.5" opacity="1" stroke-linejoin="round"/><polygon points="31,23 40,23 40,45 31,45" fill="#f6f6f4" stroke="#333" stroke-width="0.8" opacity="1" stroke-linejoin="round"/><rect x="34" y="27" width="2.5" height="12" fill="#555" stroke="none" stroke-width="0.6" opacity="1"/><line x1="40" y1="25" x2="51" y2="25" stroke="#333" stroke-width="0.7" opacity="1"/><polygon points="51,23.6 79.5,11.1 145.8,28.4 145.8,31.5 79.5,16.5 51,26" fill="#ffffff" stroke="#2e2e2e" stroke-width="0.9" opacity="1" stroke-linejoin="round"/><line x1="79.5" y1="11.1" x2="79.5" y2="16.5" stroke="#2e2e2e" stroke-width="0.9" opacity="1"/><polygon points="40,39.2 75.4,33.8 148.5,40.9 148.5,44.6 75.4,39.2 40,44" fill="#fbfbfb" stroke="#2e2e2e" stroke-width="0.8" opacity="1" stroke-linejoin="round"/><line x1="75.4" y1="33.8" x2="75.4" y2="39.2" stroke="#2e2e2e" stroke-width="0.8" opacity="1"/><polygon points="40,44 75.4,39.2 148.5,44.6 148.5,57 40,57" fill="#f2f2f0" stroke="none" stroke-width="0.7" opacity="1" stroke-linejoin="round"/><polygon points="50,42.6 58,41.5 58,57 50,57" fill="#c39f72" stroke="none" stroke-width="0.7" opacity="1" stroke-linejoin="round"/><polygon points="61,41 75,39.3 75,57 61,57" fill="#d5e1e7" stroke="#3a3a3a" stroke-width="0.5" opacity="1" stroke-linejoin="round"/><line x1="68" y1="40.2" x2="68" y2="57" stroke="#3a3a3a" stroke-width="0.5" opacity="1"/><polygon points="76,39.4 100,41.2 100,57 76,57" fill="#d8e3e8" stroke="#3a3a3a" stroke-width="0.5" opacity="1" stroke-linejoin="round"/><line x1="84" y1="40" x2="84" y2="57" stroke="#3a3a3a" stroke-width="0.5" opacity="1"/><line x1="92" y1="40.6" x2="92" y2="57" stroke="#3a3a3a" stroke-width="0.5" opacity="1"/><polygon points="101,41.3 113,42.2 113,57 101,57" fill="#c7a276" stroke="none" stroke-width="0.7" opacity="1" stroke-linejoin="round"/><polygon points="117,42.4 136,43.7 136,57 117,57" fill="#f4f4f4" stroke="#3a3a3a" stroke-width="0.4" opacity="1" stroke-linejoin="round"/><line x1="126" y1="43" x2="126" y2="57" stroke="#3a3a3a" stroke-width="0.5" opacity="1"/><line x1="148.5" y1="40.9" x2="148.5" y2="58" stroke="#2e2e2e" stroke-width="0.8" opacity="1"/><line x1="40" y1="44" x2="40" y2="57" stroke="#2e2e2e" stroke-width="0.6" opacity="1"/><polygon points="53,57 142,57 142,62 61,64" fill="#b49470" stroke="none" stroke-width="0.7" opacity="1" stroke-linejoin="round"/><polygon points="61,64 161,62 163,68 102,82 61,70" fill="#b9d0dc" stroke="#4a4a4a" stroke-width="0.6" opacity="1" stroke-linejoin="round"/><polygon points="62,65 158,63 102,76 62,68" fill="#d2e2ea" stroke="none" stroke-width="0.7" opacity="1" stroke-linejoin="round"/></svg>
<div id="f34" class="pg" style="left:617px;top:409.6px;font-size:10px;line-height:10px;font-weight:bold;color:#111111;transform-origin:0 0;transform:scaleX(0.6661);-webkit-text-stroke:0.2px #111;">Magnam pretium labore convallis rhoncus rem! Partu-</div>
<div id="f35" class="pg" style="left:617px;top:421.6px;font-size:10px;line-height:10px;font-weight:bold;color:#111111;transform-origin:0 0;transform:scaleX(0.6571);-webkit-text-stroke:0.2px #111;">rient fugiat quisque ridiculus molestie possimus, cumque</div>
<div id="f36" class="pg" style="left:617px;top:433.5px;font-size:10px;line-height:10px;font-weight:bold;color:#111111;transform-origin:0 0;transform:scaleX(0.6685);-webkit-text-stroke:0.2px #111;">eleifend vivamus do, primis dapibus purus mi, aenean</div>
<div id="f37" class="pg" style="left:617px;top:445.4px;font-size:10px;line-height:10px;font-weight:bold;color:#111111;transform-origin:0 0;transform:scaleX(0.6587);-webkit-text-stroke:0.2px #111;">vero adipiscing eleifend turpis.</div>
<div id="f38" class="pg" style="left:617px;top:485.8px;font-size:14.5px;line-height:14.5px;font-weight:bold;color:#0a0a0a;transform-origin:0 0;transform:scaleX(0.9823);-webkit-text-stroke:0.55px #0a0a0a;">Manoir Moderne</div>
<div id="f39" class="pg" style="left:617px;top:502.8px;font-size:9.6px;line-height:9.6px;font-weight:normal;color:#111;transform-origin:0 0;transform:scaleX(0.6886);-webkit-text-stroke:0.25px #111;">Type :</div>
<div id="f40" class="pg" style="left:638px;top:503.1px;font-size:9.2px;line-height:9.2px;font-weight:bold;color:#111;transform-origin:0 0;transform:scaleX(1.0760);-webkit-text-stroke:0.15px #111;">PRESTIGE</div>
<div id="f41" class="pg" style="left:617px;top:515.0px;font-size:9.6px;line-height:9.6px;font-weight:normal;color:#111;transform-origin:0 0;transform:scaleX(0.7030);-webkit-text-stroke:0.25px #111;">Surface :</div>
<div id="f42" class="pg" style="left:647px;top:515.3px;font-size:9.2px;line-height:9.2px;font-weight:bold;color:#111;transform-origin:0 0;transform:scaleX(1.3282);-webkit-text-stroke:0.15px #111;">210 M²</div>
<div id="f43" class="pg" style="left:687.8px;top:515.0px;font-size:9.6px;line-height:9.6px;font-weight:normal;color:#111;transform-origin:0 0;transform:scaleX(0.7035);-webkit-text-stroke:0.25px #111;">- Prix :</div>
<div id="f44" class="pg" style="left:710.8px;top:515.3px;font-size:9.2px;line-height:9.2px;font-weight:bold;color:#111;transform-origin:0 0;transform:scaleX(1.2837);-webkit-text-stroke:0.15px #111;">850 000€</div>
<svg style="position:absolute;left:617px;top:541px" width="182" height="90" viewBox="0 0 182 90"><rect width="182" height="90" fill="#ffffff"/><ellipse cx="14" cy="55" rx="6" ry="6" fill="#f2f2f2" stroke="#d4d4d4" stroke-width="0.4" opacity="1"/><ellipse cx="172" cy="53" rx="5" ry="8" fill="#f2f2f2" stroke="#d4d4d4" stroke-width="0.4" opacity="1"/><rect x="31" y="42.7" width="98" height="19.5" fill="#e0d2ba" stroke="#555" stroke-width="0.5" opacity="1"/><rect x="127" y="49.3" width="43" height="12.9" fill="#e4d9c6" stroke="#555" stroke-width="0.5" opacity="1"/><polygon points="29.4,42.7 38.4,33.2 90,35.6 93.8,31.8 104,37 129,38 129,42.7" fill="#4b5561" stroke="#2e2e2e" stroke-width="0.5" opacity="1" stroke-linejoin="round"/><polygon points="29.4,42.7 38.4,33.2 47.4,42.7" fill="#4b5561" stroke="#2e2e2e" stroke-width="0.6" opacity="1" stroke-linejoin="round"/><polygon points="33,42.7 38.4,37 44,42.7 44,60.7 35,60.7" fill="#c5d6df" stroke="#555" stroke-width="0.4" opacity="1" stroke-linejoin="round"/><line x1="38.4" y1="37" x2="38.4" y2="60.7" stroke="#555" stroke-width="0.4" opacity="1"/><line x1="41" y1="40" x2="41" y2="60.7" stroke="#555" stroke-width="0.4" opacity="1"/><polygon points="83.4,43.2 93.8,31.8 104,43.2" fill="#4b5561" stroke="#2e2e2e" stroke-width="0.6" opacity="1" stroke-linejoin="round"/><polygon points="86,42 93.8,35 101,42 101,49 86,49" fill="#c5d6df" stroke="#555" stroke-width="0.4" opacity="1" stroke-linejoin="round"/><line x1="93.8" y1="35" x2="93.8" y2="49" stroke="#555" stroke-width="0.4" opacity="1"/><rect x="82" y="49" width="24" height="1.6" fill="#9a8e7c" stroke="none" stroke-width="0.6" opacity="1"/><rect x="72" y="30.5" width="4" height="3" fill="#3a3a3a" stroke="none" stroke-width="0.6" opacity="1"/><rect x="60.7" y="51" width="17" height="9.7" fill="#c5d6df" stroke="#555" stroke-width="0.4" opacity="1"/><line x1="60.7" y1="51" x2="60.7" y2="60.7" stroke="#555" stroke-width="0.4" opacity="1"/><line x1="66.4" y1="51" x2="66.4" y2="60.7" stroke="#555" stroke-width="0.4" opacity="1"/><line x1="72.0" y1="51" x2="72.0" y2="60.7" stroke="#555" stroke-width="0.4" opacity="1"/><line x1="77.7" y1="51" x2="77.7" y2="60.7" stroke="#555" stroke-width="0.4" opacity="1"/><rect x="90" y="52" width="12" height="8.7" fill="#c5d6df" stroke="#555" stroke-width="0.4" opacity="1"/><rect x="108" y="51" width="10" height="3" fill="#8a8a80" stroke="none" stroke-width="0.6" opacity="1"/><polygon points="127,44 169.7,44.6 170.6,49.3 127,49.3" fill="#4b5561" stroke="#2e2e2e" stroke-width="0.5" opacity="1" stroke-linejoin="round"/><rect x="130" y="53.6" width="10" height="7.1" fill="#5a626c" stroke="none" stroke-width="0.6" opacity="1"/><rect x="143" y="53.6" width="10.5" height="7.1" fill="#5a626c" stroke="none" stroke-width="0.6" opacity="1"/><rect x="156.4" y="53.6" width="10.4" height="7.1" fill="#5a626c" stroke="none" stroke-width="0.6" opacity="1"/><rect x="19" y="49.3" width="12.3" height="2.4" fill="#e8e8e8" stroke="#888" stroke-width="0.4" opacity="1"/><line x1="21" y1="51.7" x2="21" y2="62" stroke="#888" stroke-width="0.6" opacity="1"/><line x1="10" y1="62.3" x2="176" y2="62.3" stroke="#b8b8b8" stroke-width="0.7" opacity="1"/><rect x="12" y="61" width="34" height="2" fill="#d8d8d8" stroke="none" stroke-width="0.6" opacity="1"/></svg>
<div id="f45" class="pg" style="left:617px;top:639.6px;font-size:10px;line-height:10px;font-weight:bold;color:#111111;transform-origin:0 0;transform:scaleX(0.6661);-webkit-text-stroke:0.2px #111;">Magnam pretium labore convallis rhoncus rem! Partu-</div>
<div id="f46" class="pg" style="left:617px;top:651.5px;font-size:10px;line-height:10px;font-weight:bold;color:#111111;transform-origin:0 0;transform:scaleX(0.6571);-webkit-text-stroke:0.2px #111;">rient fugiat quisque ridiculus molestie possimus, cumque</div>
<div id="f47" class="pg" style="left:617px;top:663.5px;font-size:10px;line-height:10px;font-weight:bold;color:#111111;transform-origin:0 0;transform:scaleX(0.6685);-webkit-text-stroke:0.2px #111;">eleifend vivamus do, primis dapibus purus mi, aenean</div>
<div id="f48" class="pg" style="left:617px;top:675.4px;font-size:10px;line-height:10px;font-weight:bold;color:#111111;transform-origin:0 0;transform:scaleX(0.6587);-webkit-text-stroke:0.2px #111;">vero adipiscing eleifend turpis.</div>
<div id="f49" class="pg" style="left:617px;top:716.8px;font-size:14.5px;line-height:14.5px;font-weight:bold;color:#0a0a0a;transform-origin:0 0;transform:scaleX(0.9330);-webkit-text-stroke:0.55px #0a0a0a;">La Californienne</div>
<div id="f50" class="pg" style="left:617px;top:733.8px;font-size:9.6px;line-height:9.6px;font-weight:normal;color:#111;transform-origin:0 0;transform:scaleX(0.6886);-webkit-text-stroke:0.25px #111;">Type :</div>
<div id="f51" class="pg" style="left:638px;top:734.1px;font-size:9.2px;line-height:9.2px;font-weight:bold;color:#111;transform-origin:0 0;transform:scaleX(1.1521);-webkit-text-stroke:0.15px #111;">PLAIN-PIED</div>
<div id="f52" class="pg" style="left:617px;top:746.0px;font-size:9.6px;line-height:9.6px;font-weight:normal;color:#111;transform-origin:0 0;transform:scaleX(0.7030);-webkit-text-stroke:0.25px #111;">Surface :</div>
<div id="f53" class="pg" style="left:647px;top:746.3px;font-size:9.2px;line-height:9.2px;font-weight:bold;color:#111;transform-origin:0 0;transform:scaleX(1.3282);-webkit-text-stroke:0.15px #111;">160 M²</div>
<div id="f54" class="pg" style="left:687.8px;top:746.0px;font-size:9.6px;line-height:9.6px;font-weight:normal;color:#111;transform-origin:0 0;transform:scaleX(0.7035);-webkit-text-stroke:0.25px #111;">- Prix :</div>
<div id="f55" class="pg" style="left:710.8px;top:746.3px;font-size:9.2px;line-height:9.2px;font-weight:bold;color:#111;transform-origin:0 0;transform:scaleX(1.2837);-webkit-text-stroke:0.15px #111;">520 000€</div>
<svg style="position:absolute;left:617px;top:771px" width="182" height="91" viewBox="0 0 182 91"><rect width="182" height="91" fill="#dfe7e9"/><rect x="18" y="38" width="150" height="7" fill="#e6ecee" stroke="#4a4a4a" stroke-width="0.4" opacity="1"/><line x1="22.0" y1="38" x2="22.0" y2="45" stroke="#555" stroke-width="0.45" opacity="1"/><line x1="29.6" y1="38" x2="29.6" y2="45" stroke="#555" stroke-width="0.45" opacity="1"/><line x1="37.1" y1="38" x2="37.1" y2="45" stroke="#555" stroke-width="0.45" opacity="1"/><line x1="44.7" y1="38" x2="44.7" y2="45" stroke="#555" stroke-width="0.45" opacity="1"/><line x1="52.2" y1="38" x2="52.2" y2="45" stroke="#555" stroke-width="0.45" opacity="1"/><line x1="59.8" y1="38" x2="59.8" y2="45" stroke="#555" stroke-width="0.45" opacity="1"/><line x1="67.3" y1="38" x2="67.3" y2="45" stroke="#555" stroke-width="0.45" opacity="1"/><line x1="74.9" y1="38" x2="74.9" y2="45" stroke="#555" stroke-width="0.45" opacity="1"/><line x1="82.4" y1="38" x2="82.4" y2="45" stroke="#555" stroke-width="0.45" opacity="1"/><line x1="90.0" y1="38" x2="90.0" y2="45" stroke="#555" stroke-width="0.45" opacity="1"/><line x1="96.0" y1="38" x2="96.0" y2="45" stroke="#555" stroke-width="0.45" opacity="1"/><line x1="103.7" y1="38" x2="103.7" y2="45" stroke="#555" stroke-width="0.45" opacity="1"/><line x1="111.3" y1="38" x2="111.3" y2="45" stroke="#555" stroke-width="0.45" opacity="1"/><line x1="119.0" y1="38" x2="119.0" y2="45" stroke="#555" stroke-width="0.45" opacity="1"/><line x1="126.7" y1="38" x2="126.7" y2="45" stroke="#555" stroke-width="0.45" opacity="1"/><line x1="134.3" y1="38" x2="134.3" y2="45" stroke="#555" stroke-width="0.45" opacity="1"/><line x1="142.0" y1="38" x2="142.0" y2="45" stroke="#555" stroke-width="0.45" opacity="1"/><line x1="149.7" y1="38" x2="149.7" y2="45" stroke="#555" stroke-width="0.45" opacity="1"/><line x1="157.3" y1="38" x2="157.3" y2="45" stroke="#555" stroke-width="0.45" opacity="1"/><line x1="165.0" y1="38" x2="165.0" y2="45" stroke="#555" stroke-width="0.45" opacity="1"/><polygon points="8,41.7 28,34.6 78,35.5 92,38 92,40 78,38 28,37 10,44" fill="#5c6168" stroke="#3a3a3a" stroke-width="0.4" opacity="1" stroke-linejoin="round"/><polygon points="90,37 126,35 178,43.5 178,45.5 126,37.5 90,39.5" fill="#5c6168" stroke="#3a3a3a" stroke-width="0.4" opacity="1" stroke-linejoin="round"/><rect x="18" y="45" width="150" height="15" fill="#e1e8ea" stroke="#555" stroke-width="0.4" opacity="1"/><rect x="21" y="45" width="12" height="15" fill="#8a6a50" stroke="none" stroke-width="0.6" opacity="1"/><rect x="37" y="45" width="22" height="15" fill="#b59b80" stroke="none" stroke-width="0.6" opacity="1"/><rect x="59" y="45" width="30" height="15" fill="#d8e4ea" stroke="none" stroke-width="0.6" opacity="1"/><line x1="59.0" y1="45" x2="59.0" y2="60" stroke="#555" stroke-width="0.5" opacity="1"/><line x1="65.0" y1="45" x2="65.0" y2="60" stroke="#555" stroke-width="0.5" opacity="1"/><line x1="71.0" y1="45" x2="71.0" y2="60" stroke="#555" stroke-width="0.5" opacity="1"/><line x1="77.0" y1="45" x2="77.0" y2="60" stroke="#555" stroke-width="0.5" opacity="1"/><line x1="83.0" y1="45" x2="83.0" y2="60" stroke="#555" stroke-width="0.5" opacity="1"/><line x1="89.0" y1="45" x2="89.0" y2="60" stroke="#555" stroke-width="0.5" opacity="1"/><rect x="92" y="45" width="7" height="15" fill="#7a5a44" stroke="none" stroke-width="0.6" opacity="1"/><rect x="99" y="45" width="30" height="15" fill="#d8e4ea" stroke="none" stroke-width="0.6" opacity="1"/><line x1="99.0" y1="45" x2="99.0" y2="60" stroke="#555" stroke-width="0.5" opacity="1"/><line x1="105.0" y1="45" x2="105.0" y2="60" stroke="#555" stroke-width="0.5" opacity="1"/><line x1="111.0" y1="45" x2="111.0" y2="60" stroke="#555" stroke-width="0.5" opacity="1"/><line x1="117.0" y1="45" x2="117.0" y2="60" stroke="#555" stroke-width="0.5" opacity="1"/><line x1="123.0" y1="45" x2="123.0" y2="60" stroke="#555" stroke-width="0.5" opacity="1"/><line x1="129.0" y1="45" x2="129.0" y2="60" stroke="#555" stroke-width="0.5" opacity="1"/><rect x="129" y="45" width="14" height="15" fill="#8d6d52" stroke="none" stroke-width="0.6" opacity="1"/><rect x="143" y="45" width="14" height="15" fill="#b59b80" stroke="none" stroke-width="0.6" opacity="1"/><rect x="159" y="45" width="7" height="15" fill="#7a5a44" stroke="none" stroke-width="0.6" opacity="1"/><line x1="38" y1="49" x2="58" y2="49" stroke="#9a8068" stroke-width="0.5" opacity="1"/><line x1="38" y1="53" x2="58" y2="53" stroke="#9a8068" stroke-width="0.5" opacity="1"/><line x1="38" y1="57" x2="58" y2="57" stroke="#9a8068" stroke-width="0.5" opacity="1"/><line x1="144" y1="49" x2="156" y2="49" stroke="#9a8068" stroke-width="0.5" opacity="1"/><line x1="144" y1="53" x2="156" y2="53" stroke="#9a8068" stroke-width="0.5" opacity="1"/><line x1="10" y1="61" x2="176" y2="61" stroke="#8aa48a" stroke-width="1.0" opacity="1"/><ellipse cx="95" cy="65" rx="50" ry="2.2" fill="#c6d2c4" stroke="none" stroke-width="0.6" opacity="1"/></svg>
<div id="f56" class="pg" style="left:617px;top:869.3px;font-size:10px;line-height:10px;font-weight:bold;color:#111111;transform-origin:0 0;transform:scaleX(0.6620);-webkit-text-stroke:0.2px #111;">Condimentum perspiciatis, do fugiat leo, exercitation</div>
<div id="f57" class="pg" style="left:617px;top:881.2px;font-size:10px;line-height:10px;font-weight:bold;color:#111111;transform-origin:0 0;transform:scaleX(0.6593);-webkit-text-stroke:0.2px #111;">rem? Sapien dolores facilisi at congue. Odio, egestas aut,</div>
<div id="f58" class="pg" style="left:617px;top:893.2px;font-size:10px;line-height:10px;font-weight:bold;color:#111111;transform-origin:0 0;transform:scaleX(0.6702);-webkit-text-stroke:0.2px #111;">porttitor eu aspernatur pariatur enim explicabo tempori-</div>
<div id="f59" class="pg" style="left:617px;top:905.1px;font-size:10px;line-height:10px;font-weight:bold;color:#111111;transform-origin:0 0;transform:scaleX(0.6625);-webkit-text-stroke:0.2px #111;">bus tempore tincidunt reiciendis.&nbsp; Voluptatem hendrerit</div>
<div id="f60" class="pg" style="left:617px;top:917.1px;font-size:10px;line-height:10px;font-weight:bold;color:#111111;transform-origin:0 0;transform:scaleX(0.6659);-webkit-text-stroke:0.2px #111;">natoque! Aliquid taciti, elementum explicabo dolores</div>
<div id="f61" class="pg" style="left:617px;top:929.0px;font-size:10px;line-height:10px;font-weight:bold;color:#111111;transform-origin:0 0;transform:scaleX(0.6576);-webkit-text-stroke:0.2px #111;">nisl, labore vivamus habitasse. Delectus veniam. Laboris</div>
<div id="f62" class="pg" style="left:617px;top:941.0px;font-size:10px;line-height:10px;font-weight:bold;color:#111111;transform-origin:0 0;transform:scaleX(0.6638);-webkit-text-stroke:0.2px #111;">curae error mattis primis urna vero, tortor accumsan</div>
<div id="f63" class="pg" style="left:617px;top:952.9px;font-size:10px;line-height:10px;font-weight:bold;color:#111111;transform-origin:0 0;transform:scaleX(0.6554);-webkit-text-stroke:0.2px #111;">dignissim. Ipsam.</div>
<div id="f64" class="pg" style="left:617px;top:995.4px;font-size:14.5px;line-height:14.5px;font-weight:bold;color:#0a0a0a;transform-origin:0 0;transform:scaleX(0.9224);-webkit-text-stroke:0.55px #0a0a0a;">Le Mas Provençal</div>
<div id="f65" class="pg" style="left:617px;top:1012.4px;font-size:9.6px;line-height:9.6px;font-weight:normal;color:#111;transform-origin:0 0;transform:scaleX(0.6886);-webkit-text-stroke:0.25px #111;">Type :</div>
<div id="f66" class="pg" style="left:638px;top:1012.7px;font-size:9.2px;line-height:9.2px;font-weight:bold;color:#111;transform-origin:0 0;transform:scaleX(1.1698);-webkit-text-stroke:0.15px #111;">TRADITIONNEL</div>
<div id="f67" class="pg" style="left:617px;top:1024.6px;font-size:9.6px;line-height:9.6px;font-weight:normal;color:#111;transform-origin:0 0;transform:scaleX(0.7030);-webkit-text-stroke:0.25px #111;">Surface :</div>
<div id="f68" class="pg" style="left:647px;top:1024.9px;font-size:9.2px;line-height:9.2px;font-weight:bold;color:#111;transform-origin:0 0;transform:scaleX(1.3282);-webkit-text-stroke:0.15px #111;">120 M²</div>
<div id="f69" class="pg" style="left:687.8px;top:1024.6px;font-size:9.6px;line-height:9.6px;font-weight:normal;color:#111;transform-origin:0 0;transform:scaleX(0.7035);-webkit-text-stroke:0.25px #111;">- Prix :</div>
<div id="f70" class="pg" style="left:710.8px;top:1024.9px;font-size:9.2px;line-height:9.2px;font-weight:bold;color:#111;transform-origin:0 0;transform:scaleX(1.2837);-webkit-text-stroke:0.15px #111;">380 000€</div>
<svg style="position:absolute;left:617px;top:1046px" width="182" height="17" viewBox="0 0 182 17"><rect width="182" height="17" fill="#ffffff"/><polygon points="111,17 150,6 158,17" fill="#c48a68" stroke="#6a4a3a" stroke-width="0.6" opacity="1" stroke-linejoin="round"/></svg>
<div id="f71" class="pg" style="left:828px;top:251.3px;font-size:14.5px;line-height:14.5px;font-weight:bold;color:#0a0a0a;transform-origin:0 0;transform:scaleX(0.9224);-webkit-text-stroke:0.55px #0a0a0a;">Le Mas Provençal</div>
<div id="f72" class="pg" style="left:828px;top:268.3px;font-size:9.6px;line-height:9.6px;font-weight:normal;color:#111;transform-origin:0 0;transform:scaleX(0.6886);-webkit-text-stroke:0.25px #111;">Type :</div>
<div id="f73" class="pg" style="left:849px;top:268.6px;font-size:9.2px;line-height:9.2px;font-weight:bold;color:#111;transform-origin:0 0;transform:scaleX(1.1698);-webkit-text-stroke:0.15px #111;">TRADITIONNEL</div>
<div id="f74" class="pg" style="left:828px;top:280.5px;font-size:9.6px;line-height:9.6px;font-weight:normal;color:#111;transform-origin:0 0;transform:scaleX(0.7030);-webkit-text-stroke:0.25px #111;">Surface :</div>
<div id="f75" class="pg" style="left:858px;top:280.8px;font-size:9.2px;line-height:9.2px;font-weight:bold;color:#111;transform-origin:0 0;transform:scaleX(1.3282);-webkit-text-stroke:0.15px #111;">120 M²</div>
<div id="f76" class="pg" style="left:898.8px;top:280.5px;font-size:9.6px;line-height:9.6px;font-weight:normal;color:#111;transform-origin:0 0;transform:scaleX(0.7035);-webkit-text-stroke:0.25px #111;">- Prix :</div>
<div id="f77" class="pg" style="left:921.8px;top:280.8px;font-size:9.2px;line-height:9.2px;font-weight:bold;color:#111;transform-origin:0 0;transform:scaleX(1.2837);-webkit-text-stroke:0.15px #111;">380 000€</div>
<svg style="position:absolute;left:828px;top:305px" width="182" height="90" viewBox="0 0 182 90"><rect width="182" height="90" fill="#ffffff"/><ellipse cx="95" cy="78" rx="82" ry="6" fill="#e3e7eb" stroke="none" stroke-width="0.6" opacity="1"/><ellipse cx="40" cy="70" rx="25" ry="6" fill="#e6eaee" stroke="none" stroke-width="0.6" opacity="1"/><polygon points="46,33 135,17 135,72 46,72" fill="#e3dac6" stroke="#7a6a55" stroke-width="0.5" opacity="1" stroke-linejoin="round"/><polygon points="135,17 148,7 162,24 162,70 135,73" fill="#d4c5ad" stroke="#7a6a55" stroke-width="0.5" opacity="1" stroke-linejoin="round"/><polygon points="162,45 169,50 169,70 162,70" fill="#dacdb8" stroke="#7a6a55" stroke-width="0.5" opacity="1" stroke-linejoin="round"/><polygon points="44,30 148,6 135,17 46,33" fill="#bd8a6e" stroke="#6a4a3a" stroke-width="0.5" opacity="1" stroke-linejoin="round"/><polyline points="148,6 162,24" fill="none" stroke="#8a5a44" stroke-width="1" opacity="1" stroke-linejoin="round"/><rect x="65" y="16" width="4" height="5" fill="#777" stroke="none" stroke-width="0.6" opacity="1"/><rect x="109" y="22" width="5" height="8" fill="#77746e" stroke="none" stroke-width="0.6" opacity="1"/><rect x="57" y="31" width="3" height="6" fill="#8a8578" stroke="none" stroke-width="0.6" opacity="1"/><rect x="82" y="28" width="3" height="6" fill="#8a8578" stroke="none" stroke-width="0.6" opacity="1"/><rect x="148" y="47" width="3" height="7" fill="#8a8578" stroke="none" stroke-width="0.6" opacity="1"/><polygon points="15,45 30,40 60,39 90,38 120,35 140,37 142,48 110,50 70,50 26,50" fill="#a8bf92" stroke="none" stroke-width="0" opacity="0.7" stroke-linejoin="round"/><ellipse cx="25" cy="44" rx="8" ry="5" fill="#9fb889" stroke="none" stroke-width="0.6" opacity="0.8"/><ellipse cx="60" cy="40" rx="10" ry="4" fill="#a5bd8e" stroke="none" stroke-width="0.6" opacity="0.7"/><ellipse cx="118" cy="38" rx="12" ry="4" fill="#a5bd8e" stroke="none" stroke-width="0.6" opacity="0.7"/><rect x="61" y="51" width="7" height="20" fill="#8d90a3" stroke="none" stroke-width="0.6" opacity="1"/><rect x="86" y="50" width="8" height="22" fill="#7f8298" stroke="none" stroke-width="0.6" opacity="1"/><rect x="108" y="50" width="8" height="24" fill="#8c92a3" stroke="none" stroke-width="0.6" opacity="1"/><rect x="97" y="40" width="6" height="14" fill="#a68fc0" stroke="none" stroke-width="0.6" opacity="0.75"/><rect x="73" y="46" width="6" height="10" fill="#a68fc0" stroke="none" stroke-width="0.6" opacity="0.75"/><rect x="140" y="43" width="5" height="12" fill="#a68fc0" stroke="none" stroke-width="0.6" opacity="0.65"/><line x1="30" y1="46" x2="30" y2="77" stroke="#6b5a48" stroke-width="1.1" opacity="1"/><line x1="50" y1="46" x2="50" y2="79" stroke="#6b5a48" stroke-width="1.1" opacity="1"/><line x1="74" y1="46" x2="74" y2="81" stroke="#6b5a48" stroke-width="1.1" opacity="1"/><line x1="106" y1="44" x2="106" y2="83" stroke="#6b5a48" stroke-width="1.1" opacity="1"/><line x1="24" y1="46" x2="142" y2="42" stroke="#6b5a48" stroke-width="0.9" opacity="1"/><ellipse cx="140" cy="66" rx="8" ry="7" fill="#a8c090" stroke="none" stroke-width="0.6" opacity="0.8"/></svg>
<div id="f78" class="pg" style="left:828px;top:427.1px;font-size:14.5px;line-height:14.5px;font-weight:bold;color:#0a0a0a;transform-origin:0 0;transform:scaleX(0.8275);-webkit-text-stroke:0.55px #0a0a0a;">Eco-Lodge</div>
<div id="f79" class="pg" style="left:828px;top:444.1px;font-size:9.6px;line-height:9.6px;font-weight:normal;color:#111;transform-origin:0 0;transform:scaleX(0.6886);-webkit-text-stroke:0.25px #111;">Type :</div>
<div id="f80" class="pg" style="left:849px;top:444.4px;font-size:9.2px;line-height:9.2px;font-weight:bold;color:#111;transform-origin:0 0;transform:scaleX(1.1572);-webkit-text-stroke:0.15px #111;">BOIS</div>
<div id="f81" class="pg" style="left:828px;top:456.3px;font-size:9.6px;line-height:9.6px;font-weight:normal;color:#111;transform-origin:0 0;transform:scaleX(0.7030);-webkit-text-stroke:0.25px #111;">Surface :</div>
<div id="f82" class="pg" style="left:858px;top:456.6px;font-size:9.2px;line-height:9.2px;font-weight:bold;color:#111;transform-origin:0 0;transform:scaleX(1.3170);-webkit-text-stroke:0.15px #111;">110 M²</div>
<div id="f83" class="pg" style="left:897.8px;top:456.3px;font-size:9.6px;line-height:9.6px;font-weight:normal;color:#111;transform-origin:0 0;transform:scaleX(0.7035);-webkit-text-stroke:0.25px #111;">- Prix :</div>
<div id="f84" class="pg" style="left:920.8px;top:456.6px;font-size:9.2px;line-height:9.2px;font-weight:bold;color:#111;transform-origin:0 0;transform:scaleX(1.3097);-webkit-text-stroke:0.15px #111;">290 000€</div>
<svg style="position:absolute;left:828px;top:482px" width="182" height="90" viewBox="0 0 182 90"><rect width="182" height="90" fill="#ffffff"/><polyline points="10,68 12,40 18,20 30,8 44,10 52,22 50,40 56,60" fill="none" stroke="#bfcfb0" stroke-width="0.6" opacity="1" stroke-linejoin="round"/><polyline points="24,65 22,45 28,30" fill="none" stroke="#9a9a8a" stroke-width="0.7" opacity="1" stroke-linejoin="round"/><ellipse cx="30" cy="28" rx="20" ry="22" fill="#eef2ea" stroke="#c4d2b4" stroke-width="0.5" opacity="1"/><ellipse cx="152" cy="30" rx="22" ry="24" fill="#eef2ea" stroke="#c4d2b4" stroke-width="0.5" opacity="1"/><line x1="24" y1="40" x2="26" y2="68" stroke="#8e8e80" stroke-width="0.9" opacity="1"/><line x1="158" y1="40" x2="160" y2="68" stroke="#8e8e80" stroke-width="0.9" opacity="1"/><ellipse cx="90" cy="68" rx="75" ry="8" fill="#d9e5cc" stroke="none" stroke-width="0.6" opacity="0.9"/><polygon points="56,44 142,38 142,66 56,66" fill="#d6c5a2" stroke="#3b3b3b" stroke-width="0.6" opacity="1" stroke-linejoin="round"/><rect x="76" y="45" width="48" height="21" fill="#b9c6ce" stroke="#3b3b3b" stroke-width="0.5" opacity="1"/><line x1="76.0" y1="45" x2="76.0" y2="66" stroke="#4a4a4a" stroke-width="0.5" opacity="1"/><line x1="88.0" y1="45" x2="88.0" y2="66" stroke="#4a4a4a" stroke-width="0.5" opacity="1"/><line x1="100.0" y1="45" x2="100.0" y2="66" stroke="#4a4a4a" stroke-width="0.5" opacity="1"/><line x1="112.0" y1="45" x2="112.0" y2="66" stroke="#4a4a4a" stroke-width="0.5" opacity="1"/><line x1="124.0" y1="45" x2="124.0" y2="66" stroke="#4a4a4a" stroke-width="0.5" opacity="1"/><rect x="62" y="47" width="8" height="19" fill="#e2d6ba" stroke="#555" stroke-width="0.4" opacity="1"/><polygon points="38,44 114,13 158,38 148,42 40,46" fill="#cdbb98" stroke="#3b3b3b" stroke-width="0.8" opacity="1" stroke-linejoin="round"/><polyline points="50,42 114,17 150,38" fill="none" stroke="#8a7a60" stroke-width="0.5" opacity="1" stroke-linejoin="round"/><polygon points="22,64 160,64 176,67 150,72 92,76 30,69" fill="#c9b391" stroke="#3b3b3b" stroke-width="0.6" opacity="1" stroke-linejoin="round"/><line x1="60" y1="71" x2="60" y2="76" stroke="#6a5a40" stroke-width="1" opacity="1"/><line x1="95" y1="75" x2="95" y2="80" stroke="#6a5a40" stroke-width="1" opacity="1"/><line x1="130" y1="73" x2="130" y2="78" stroke="#6a5a40" stroke-width="1" opacity="1"/></svg>
<div id="f85" class="pg" style="left:828px;top:580.7px;font-size:10px;line-height:10px;font-weight:bold;color:#111111;transform-origin:0 0;transform:scaleX(0.6661);-webkit-text-stroke:0.2px #111;">Magnam pretium labore convallis rhoncus rem! Partu-</div>
<div id="f86" class="pg" style="left:828px;top:592.6px;font-size:10px;line-height:10px;font-weight:bold;color:#111111;transform-origin:0 0;transform:scaleX(0.6571);-webkit-text-stroke:0.2px #111;">rient fugiat quisque ridiculus molestie possimus, cumque</div>
<div id="f87" class="pg" style="left:828px;top:604.6px;font-size:10px;line-height:10px;font-weight:bold;color:#111111;transform-origin:0 0;transform:scaleX(0.6685);-webkit-text-stroke:0.2px #111;">eleifend vivamus do, primis dapibus purus mi, aenean</div>
<div id="f88" class="pg" style="left:828px;top:616.5px;font-size:10px;line-height:10px;font-weight:bold;color:#111111;transform-origin:0 0;transform:scaleX(0.6587);-webkit-text-stroke:0.2px #111;">vero adipiscing eleifend turpis.</div>
<div id="f89" class="pg" style="left:828px;top:647.3px;font-size:14.5px;line-height:14.5px;font-weight:bold;color:#0a0a0a;transform-origin:0 0;transform:scaleX(0.9444);-webkit-text-stroke:0.55px #0a0a0a;">Pavillon Solaire</div>
<div id="f90" class="pg" style="left:828px;top:664.3px;font-size:9.6px;line-height:9.6px;font-weight:normal;color:#111;transform-origin:0 0;transform:scaleX(0.6886);-webkit-text-stroke:0.25px #111;">Type :</div>
<div id="f91" class="pg" style="left:849px;top:664.6px;font-size:9.2px;line-height:9.2px;font-weight:bold;color:#111;transform-origin:0 0;transform:scaleX(1.1400);-webkit-text-stroke:0.15px #111;">ÉCOLOGIQUE</div>
<div id="f92" class="pg" style="left:828px;top:676.5px;font-size:9.6px;line-height:9.6px;font-weight:normal;color:#111;transform-origin:0 0;transform:scaleX(0.7030);-webkit-text-stroke:0.25px #111;">Surface :</div>
<div id="f93" class="pg" style="left:858px;top:676.8px;font-size:9.2px;line-height:9.2px;font-weight:bold;color:#111;transform-origin:0 0;transform:scaleX(1.3282);-webkit-text-stroke:0.15px #111;">130 M²</div>
<div id="f94" class="pg" style="left:898.8px;top:676.5px;font-size:9.6px;line-height:9.6px;font-weight:normal;color:#111;transform-origin:0 0;transform:scaleX(0.7035);-webkit-text-stroke:0.25px #111;">- Prix :</div>
<div id="f95" class="pg" style="left:921.8px;top:676.8px;font-size:9.2px;line-height:9.2px;font-weight:bold;color:#111;transform-origin:0 0;transform:scaleX(1.2576);-webkit-text-stroke:0.15px #111;">410 000€</div>
<svg style="position:absolute;left:828px;top:702px" width="182" height="90" viewBox="0 0 182 90"><rect width="182" height="90" fill="#ffffff"/><polyline points="2,52 20,48 40,50" fill="none" stroke="#c8c8c8" stroke-width="0.5" opacity="1" stroke-linejoin="round"/><polyline points="150,46 178,50" fill="none" stroke="#c8c8c8" stroke-width="0.5" opacity="1" stroke-linejoin="round"/><polyline points="10,58 50,58" fill="none" stroke="#c8c8c8" stroke-width="0.5" opacity="1" stroke-linejoin="round"/><polyline points="40,70 120,64 178,60" fill="none" stroke="#c0c0c0" stroke-width="0.5" opacity="1" stroke-linejoin="round"/><polyline points="30,86 100,76 175,70" fill="none" stroke="#c8c8c8" stroke-width="0.5" opacity="1" stroke-linejoin="round"/><polygon points="47,15 130,34 148,47 68,43" fill="#aec3d2" stroke="#3b3b3b" stroke-width="0.8" opacity="1" stroke-linejoin="round"/><line x1="60" y1="25" x2="135" y2="42" stroke="#8aa0b2" stroke-width="0.4" opacity="1"/><line x1="75" y1="32" x2="140" y2="45" stroke="#8aa0b2" stroke-width="0.4" opacity="1"/><line x1="80" y1="22" x2="70" y2="40" stroke="#8aa0b2" stroke-width="0.4" opacity="1"/><line x1="100" y1="27" x2="95" y2="44" stroke="#8aa0b2" stroke-width="0.4" opacity="1"/><line x1="120" y1="32" x2="118" y2="45" stroke="#8aa0b2" stroke-width="0.4" opacity="1"/><polygon points="47,15 52,19 68,42 68,62 52,60 47,58" fill="#b46c3c" stroke="#3b3b3b" stroke-width="0.7" opacity="1" stroke-linejoin="round"/><polygon points="47,15 52,19 52,60 47,58" fill="#f2f2f2" stroke="#3b3b3b" stroke-width="0.5" opacity="1" stroke-linejoin="round"/><polygon points="68,42 148,47 148,49 68,46" fill="#ffffff" stroke="#3b3b3b" stroke-width="0.6" opacity="1" stroke-linejoin="round"/><rect x="68" y="46" width="24" height="16" fill="#d0dde4" stroke="#3b3b3b" stroke-width="0.5" opacity="1"/><line x1="68.0" y1="46" x2="68.0" y2="62" stroke="#4a4a4a" stroke-width="0.5" opacity="1"/><line x1="74.0" y1="46" x2="74.0" y2="62" stroke="#4a4a4a" stroke-width="0.5" opacity="1"/><line x1="80.0" y1="46" x2="80.0" y2="62" stroke="#4a4a4a" stroke-width="0.5" opacity="1"/><line x1="86.0" y1="46" x2="86.0" y2="62" stroke="#4a4a4a" stroke-width="0.5" opacity="1"/><line x1="92.0" y1="46" x2="92.0" y2="62" stroke="#4a4a4a" stroke-width="0.5" opacity="1"/><rect x="92" y="47" width="56" height="14" fill="#b7723f" stroke="#3b3b3b" stroke-width="0.5" opacity="1"/><rect x="98" y="48" width="4" height="13" fill="#eeeeee" stroke="none" stroke-width="0.6" opacity="1"/><rect x="110" y="48" width="4" height="13" fill="#eeeeee" stroke="none" stroke-width="0.6" opacity="1"/><rect x="128" y="48" width="4" height="13" fill="#eeeeee" stroke="none" stroke-width="0.6" opacity="1"/><ellipse cx="160" cy="42" rx="6" ry="7" fill="#c6d4b4" stroke="none" stroke-width="0.6" opacity="1"/><line x1="160" y1="46" x2="160" y2="58" stroke="#8a8f7a" stroke-width="0.8" opacity="1"/><ellipse cx="112" cy="74" rx="5" ry="3" fill="#b8c8a8" stroke="none" stroke-width="0.6" opacity="1"/><ellipse cx="66" cy="67" rx="5" ry="3" fill="#b8c8a8" stroke="none" stroke-width="0.6" opacity="1"/><ellipse cx="34" cy="60" rx="3" ry="2" fill="#b8c8a8" stroke="none" stroke-width="0.6" opacity="1"/><polygon points="52,62 148,58 160,62 70,70" fill="#ececec" stroke="none" stroke-width="0.7" opacity="1" stroke-linejoin="round"/></svg>
<div id="f96" class="pg" style="left:828px;top:800.8px;font-size:10px;line-height:10px;font-weight:bold;color:#111111;transform-origin:0 0;transform:scaleX(0.6642);-webkit-text-stroke:0.2px #111;">Neque molestias, porro, lacus non magnam placerat</div>
<div id="f97" class="pg" style="left:828px;top:812.8px;font-size:10px;line-height:10px;font-weight:bold;color:#111111;transform-origin:0 0;transform:scaleX(0.6637);-webkit-text-stroke:0.2px #111;">tellus augue minima accusamus lorem, hac impedit vero,</div>
<div id="f98" class="pg" style="left:828px;top:824.7px;font-size:10px;line-height:10px;font-weight:bold;color:#111111;transform-origin:0 0;transform:scaleX(0.6550);-webkit-text-stroke:0.2px #111;">irure! Senectus erat, luctus augue, qui phasellus vesti-</div>
<div id="f99" class="pg" style="left:828px;top:836.6px;font-size:10px;line-height:10px;font-weight:bold;color:#111111;transform-origin:0 0;transform:scaleX(0.6597);-webkit-text-stroke:0.2px #111;">bulum semper, maiores.&nbsp; Nullam esse accumsan, ornare</div>
<div id="f100" class="pg" style="left:828px;top:848.6px;font-size:10px;line-height:10px;font-weight:bold;color:#111111;transform-origin:0 0;transform:scaleX(0.6603);-webkit-text-stroke:0.2px #111;">mollis netus modi pede accusantium error vulputate</div>
<div id="f101" class="pg" style="left:828px;top:860.5px;font-size:10px;line-height:10px;font-weight:bold;color:#111111;transform-origin:0 0;transform:scaleX(0.6657);-webkit-text-stroke:0.2px #111;">senectus cupidatat possimus eros. Eius ut volutpat, illum</div>
<div id="f102" class="pg" style="left:828px;top:872.5px;font-size:10px;line-height:10px;font-weight:bold;color:#111111;transform-origin:0 0;transform:scaleX(0.6771);-webkit-text-stroke:0.2px #111;">diam, labore tempora. Nihil rutrum diamlorem.&nbsp; Praesent</div>
<div id="f103" class="pg" style="left:828px;top:884.4px;font-size:10px;line-height:10px;font-weight:bold;color:#111111;transform-origin:0 0;transform:scaleX(0.6589);-webkit-text-stroke:0.2px #111;">tortor iaculis semper sequi? Malesuada, nulla egestas.</div>
<div id="f104" class="pg" style="left:828px;top:896.4px;font-size:10px;line-height:10px;font-weight:bold;color:#111111;transform-origin:0 0;transform:scaleX(0.6710);-webkit-text-stroke:0.2px #111;">Suscipit, ratione minim quaerat, etiam omnis donec! Mi</div>
<div id="f105" class="pg" style="left:828px;top:908.3px;font-size:10px;line-height:10px;font-weight:bold;color:#111111;transform-origin:0 0;transform:scaleX(0.6664);-webkit-text-stroke:0.2px #111;">pariatur imperdiet, saepe molestiae. Tincidunt, eius cum</div>
<div id="f106" class="pg" style="left:828px;top:920.3px;font-size:10px;line-height:10px;font-weight:bold;color:#111111;transform-origin:0 0;transform:scaleX(0.6616);-webkit-text-stroke:0.2px #111;">similique, veniam.</div>
<div id="f107" class="pg" style="left:828px;top:953.6px;font-size:14.5px;line-height:14.5px;font-weight:bold;color:#0a0a0a;transform-origin:0 0;transform:scaleX(0.9398);-webkit-text-stroke:0.55px #0a0a0a;">Chalet Alpin</div>
<div id="f108" class="pg" style="left:828px;top:970.6px;font-size:9.6px;line-height:9.6px;font-weight:normal;color:#111;transform-origin:0 0;transform:scaleX(0.6886);-webkit-text-stroke:0.25px #111;">Type :</div>
<div id="f109" class="pg" style="left:849px;top:970.9px;font-size:9.2px;line-height:9.2px;font-weight:bold;color:#111;transform-origin:0 0;transform:scaleX(1.2471);-webkit-text-stroke:0.15px #111;">MONTAGNE</div>
<div id="f110" class="pg" style="left:828px;top:982.8px;font-size:9.6px;line-height:9.6px;font-weight:normal;color:#111;transform-origin:0 0;transform:scaleX(0.7030);-webkit-text-stroke:0.25px #111;">Surface :</div>
<div id="f111" class="pg" style="left:858px;top:983.1px;font-size:9.2px;line-height:9.2px;font-weight:bold;color:#111;transform-origin:0 0;transform:scaleX(1.3282);-webkit-text-stroke:0.15px #111;">180 M²</div>
<div id="f112" class="pg" style="left:898.8px;top:982.8px;font-size:9.6px;line-height:9.6px;font-weight:normal;color:#111;transform-origin:0 0;transform:scaleX(0.7035);-webkit-text-stroke:0.25px #111;">- Prix :</div>
<div id="f113" class="pg" style="left:921.8px;top:983.1px;font-size:9.2px;line-height:9.2px;font-weight:bold;color:#111;transform-origin:0 0;transform:scaleX(1.2576);-webkit-text-stroke:0.15px #111;">680 000€</div>
<svg style="position:absolute;left:828px;top:1010px" width="182" height="53" viewBox="0 0 182 53"><rect width="182" height="53" fill="#ffffff"/><polygon points="18.7,28.3 45.3,13.3 45.3,53 18.7,53" fill="#ffffff" stroke="#444" stroke-width="0.7" opacity="1" stroke-linejoin="round"/><polygon points="45.3,13.3 143.7,40 143.7,53 45.3,53" fill="#ffffff" stroke="#555" stroke-width="0.6" opacity="1" stroke-linejoin="round"/><polygon points="48,28.3 147,43.3 147,53 48,53" fill="#f3f3f3" stroke="#555" stroke-width="0.6" opacity="1" stroke-linejoin="round"/><rect x="35" y="22" width="8" height="13" fill="#cfd8de" stroke="#444" stroke-width="0.5" opacity="1"/><line x1="39" y1="22" x2="39" y2="35" stroke="#444" stroke-width="0.5" opacity="1"/><rect x="97" y="32" width="18" height="7" fill="#d2dae0" stroke="#555" stroke-width="0.5" opacity="1"/><line x1="68.7" y1="16.7" x2="68.7" y2="32" stroke="#666" stroke-width="0.5" opacity="1"/><line x1="97" y1="25" x2="97" y2="36" stroke="#666" stroke-width="0.5" opacity="1"/><line x1="118.7" y1="31.7" x2="118.7" y2="40" stroke="#666" stroke-width="0.5" opacity="1"/><polyline points="45.3,20 143.7,43" fill="none" stroke="#777" stroke-width="0.5" opacity="1" stroke-linejoin="round"/></svg>
<div id="f114" class="pg" style="left:1039px;top:250.1px;font-size:14.5px;line-height:14.5px;font-weight:bold;color:#0a0a0a;transform-origin:0 0;transform:scaleX(0.9014);-webkit-text-stroke:0.55px #0a0a0a;">City Loft</div>
<div id="f115" class="pg" style="left:1039px;top:267.1px;font-size:9.6px;line-height:9.6px;font-weight:normal;color:#111;transform-origin:0 0;transform:scaleX(0.6886);-webkit-text-stroke:0.25px #111;">Type :</div>
<div id="f116" class="pg" style="left:1060px;top:267.4px;font-size:9.2px;line-height:9.2px;font-weight:bold;color:#111;transform-origin:0 0;transform:scaleX(1.2033);-webkit-text-stroke:0.15px #111;">URBAIN</div>
<div id="f117" class="pg" style="left:1039px;top:279.3px;font-size:9.6px;line-height:9.6px;font-weight:normal;color:#111;transform-origin:0 0;transform:scaleX(0.7030);-webkit-text-stroke:0.25px #111;">Surface :</div>
<div id="f118" class="pg" style="left:1069px;top:279.6px;font-size:9.2px;line-height:9.2px;font-weight:bold;color:#111;transform-origin:0 0;transform:scaleX(1.3191);-webkit-text-stroke:0.15px #111;">95 M²</div>
<div id="f119" class="pg" style="left:1102.8px;top:279.3px;font-size:9.6px;line-height:9.6px;font-weight:normal;color:#111;transform-origin:0 0;transform:scaleX(0.7035);-webkit-text-stroke:0.25px #111;">- Prix :</div>
<div id="f120" class="pg" style="left:1125.8px;top:279.6px;font-size:9.2px;line-height:9.2px;font-weight:bold;color:#111;transform-origin:0 0;transform:scaleX(1.3358);-webkit-text-stroke:0.15px #111;">320 000€</div>
<svg style="position:absolute;left:1039px;top:305px" width="182" height="91" viewBox="0 0 182 91"><rect width="182" height="91" fill="#eeede4"/><polygon points="18,58 40,64 74,86 104,86 46,60" fill="#d9d9d2" stroke="none" stroke-width="0.7" opacity="1" stroke-linejoin="round"/><polygon points="72,82 140,47 150,51 80,89" fill="#f7f7f2" stroke="#c8c8c0" stroke-width="0.5" opacity="1" stroke-linejoin="round"/><polygon points="32,25 72,38 72,82 40,62" fill="#6a6462" stroke="#3b3b3b" stroke-width="0.7" opacity="1" stroke-linejoin="round"/><polygon points="38,46 72,57 72,82 40,62" fill="#8c5a48" stroke="none" stroke-width="0.7" opacity="1" stroke-linejoin="round"/><polygon points="72,38 130,17 134,12 134,50 72,82" fill="#9a6350" stroke="#3b3b3b" stroke-width="0.7" opacity="1" stroke-linejoin="round"/><polygon points="32,25 97,7 134,11 130,17 72,38" fill="#b0b0aa" stroke="#3b3b3b" stroke-width="0.8" opacity="1" stroke-linejoin="round"/><polygon points="72,38 76,37 76,81 72,83" fill="#7a4a3a" stroke="none" stroke-width="0.7" opacity="1" stroke-linejoin="round"/><polygon points="49,40 56,42 56,53 49,51" fill="#c9d6df" stroke="#3a3a3a" stroke-width="0.4" opacity="1" stroke-linejoin="round"/><line x1="51.3" y1="40.7" x2="51.3" y2="51.7" stroke="#3a3a3a" stroke-width="0.4" opacity="1"/><line x1="53.7" y1="41.3" x2="53.7" y2="52.3" stroke="#3a3a3a" stroke-width="0.4" opacity="1"/><line x1="49" y1="43.7" x2="56" y2="45.7" stroke="#3a3a3a" stroke-width="0.4" opacity="1"/><line x1="49" y1="47.3" x2="56" y2="49.3" stroke="#3a3a3a" stroke-width="0.4" opacity="1"/><polygon points="78,42 90,38 90,51 78,55" fill="#c9d6df" stroke="#3a3a3a" stroke-width="0.4" opacity="1" stroke-linejoin="round"/><line x1="82.0" y1="40.7" x2="82.0" y2="53.7" stroke="#3a3a3a" stroke-width="0.4" opacity="1"/><line x1="86.0" y1="39.3" x2="86.0" y2="52.3" stroke="#3a3a3a" stroke-width="0.4" opacity="1"/><line x1="78" y1="46.3" x2="90" y2="42.3" stroke="#3a3a3a" stroke-width="0.4" opacity="1"/><line x1="78" y1="50.7" x2="90" y2="46.7" stroke="#3a3a3a" stroke-width="0.4" opacity="1"/><polygon points="93,37 105,33 105,46 93,50" fill="#c9d6df" stroke="#3a3a3a" stroke-width="0.4" opacity="1" stroke-linejoin="round"/><line x1="97.0" y1="35.7" x2="97.0" y2="48.7" stroke="#3a3a3a" stroke-width="0.4" opacity="1"/><line x1="101.0" y1="34.3" x2="101.0" y2="47.3" stroke="#3a3a3a" stroke-width="0.4" opacity="1"/><line x1="93" y1="41.3" x2="105" y2="37.3" stroke="#3a3a3a" stroke-width="0.4" opacity="1"/><line x1="93" y1="45.7" x2="105" y2="41.7" stroke="#3a3a3a" stroke-width="0.4" opacity="1"/><polygon points="108,31 118,28 118,41 108,44" fill="#c9d6df" stroke="#3a3a3a" stroke-width="0.4" opacity="1" stroke-linejoin="round"/><line x1="111.3" y1="30.0" x2="111.3" y2="43.0" stroke="#3a3a3a" stroke-width="0.4" opacity="1"/><line x1="114.7" y1="29.0" x2="114.7" y2="42.0" stroke="#3a3a3a" stroke-width="0.4" opacity="1"/><line x1="108" y1="35.3" x2="118" y2="32.3" stroke="#3a3a3a" stroke-width="0.4" opacity="1"/><line x1="108" y1="39.7" x2="118" y2="36.7" stroke="#3a3a3a" stroke-width="0.4" opacity="1"/><polygon points="121,27 130,24 130,37 121,40" fill="#c9d6df" stroke="#3a3a3a" stroke-width="0.4" opacity="1" stroke-linejoin="round"/><line x1="124.0" y1="26.0" x2="124.0" y2="39.0" stroke="#3a3a3a" stroke-width="0.4" opacity="1"/><line x1="127.0" y1="25.0" x2="127.0" y2="38.0" stroke="#3a3a3a" stroke-width="0.4" opacity="1"/><line x1="121" y1="31.3" x2="130" y2="28.3" stroke="#3a3a3a" stroke-width="0.4" opacity="1"/><line x1="121" y1="35.7" x2="130" y2="32.7" stroke="#3a3a3a" stroke-width="0.4" opacity="1"/><polygon points="78,60 90,55 90,69 78,74" fill="#c9d6df" stroke="#3a3a3a" stroke-width="0.4" opacity="1" stroke-linejoin="round"/><line x1="82.0" y1="58.3" x2="82.0" y2="72.3" stroke="#3a3a3a" stroke-width="0.4" opacity="1"/><line x1="86.0" y1="56.7" x2="86.0" y2="70.7" stroke="#3a3a3a" stroke-width="0.4" opacity="1"/><line x1="78" y1="64.7" x2="90" y2="59.7" stroke="#3a3a3a" stroke-width="0.4" opacity="1"/><line x1="78" y1="69.3" x2="90" y2="64.3" stroke="#3a3a3a" stroke-width="0.4" opacity="1"/><polygon points="93,54 105,49 105,63 93,68" fill="#c9d6df" stroke="#3a3a3a" stroke-width="0.4" opacity="1" stroke-linejoin="round"/><line x1="97.0" y1="52.3" x2="97.0" y2="66.3" stroke="#3a3a3a" stroke-width="0.4" opacity="1"/><line x1="101.0" y1="50.7" x2="101.0" y2="64.7" stroke="#3a3a3a" stroke-width="0.4" opacity="1"/><line x1="93" y1="58.7" x2="105" y2="53.7" stroke="#3a3a3a" stroke-width="0.4" opacity="1"/><line x1="93" y1="63.3" x2="105" y2="58.3" stroke="#3a3a3a" stroke-width="0.4" opacity="1"/><polygon points="121,45 130,41 130,53 121,57" fill="#c9d6df" stroke="#3a3a3a" stroke-width="0.4" opacity="1" stroke-linejoin="round"/><line x1="124.0" y1="43.7" x2="124.0" y2="55.7" stroke="#3a3a3a" stroke-width="0.4" opacity="1"/><line x1="127.0" y1="42.3" x2="127.0" y2="54.3" stroke="#3a3a3a" stroke-width="0.4" opacity="1"/><line x1="121" y1="49.0" x2="130" y2="45.0" stroke="#3a3a3a" stroke-width="0.4" opacity="1"/><line x1="121" y1="53.0" x2="130" y2="49.0" stroke="#3a3a3a" stroke-width="0.4" opacity="1"/><line x1="91" y1="38" x2="91" y2="74" stroke="#6a3a2a" stroke-width="1" opacity="1"/><line x1="106" y1="32" x2="106" y2="68" stroke="#6a3a2a" stroke-width="1" opacity="1"/><line x1="119" y1="28" x2="119" y2="62" stroke="#6a3a2a" stroke-width="1" opacity="1"/><polyline points="100,58 120,52 128,56" fill="none" stroke="#444" stroke-width="0.6" opacity="1" stroke-linejoin="round"/><line x1="104" y1="58" x2="104" y2="72" stroke="#555" stroke-width="0.7" opacity="1"/><line x1="110" y1="56" x2="110" y2="70" stroke="#555" stroke-width="0.7" opacity="1"/></svg>
<div id="f121" class="pg" style="left:1039px;top:404.3px;font-size:10px;line-height:10px;font-weight:bold;color:#111111;transform-origin:0 0;transform:scaleX(0.6661);-webkit-text-stroke:0.2px #111;">Magnam pretium labore convallis rhoncus rem! Partu-</div>
<div id="f122" class="pg" style="left:1039px;top:416.2px;font-size:10px;line-height:10px;font-weight:bold;color:#111111;transform-origin:0 0;transform:scaleX(0.6571);-webkit-text-stroke:0.2px #111;">rient fugiat quisque ridiculus molestie possimus, cumque</div>
<div id="f123" class="pg" style="left:1039px;top:428.2px;font-size:10px;line-height:10px;font-weight:bold;color:#111111;transform-origin:0 0;transform:scaleX(0.6685);-webkit-text-stroke:0.2px #111;">eleifend vivamus do, primis dapibus purus mi, aenean</div>
<div id="f124" class="pg" style="left:1039px;top:440.2px;font-size:10px;line-height:10px;font-weight:bold;color:#111111;transform-origin:0 0;transform:scaleX(0.6587);-webkit-text-stroke:0.2px #111;">vero adipiscing eleifend turpis.</div>
<div id="f125" class="pg" style="left:1039px;top:468.9px;font-size:14.5px;line-height:14.5px;font-weight:bold;color:#0a0a0a;transform-origin:0 0;transform:scaleX(0.8860);-webkit-text-stroke:0.55px #0a0a0a;">Tiny House XL</div>
<div id="f126" class="pg" style="left:1039px;top:485.9px;font-size:9.6px;line-height:9.6px;font-weight:normal;color:#111;transform-origin:0 0;transform:scaleX(0.6886);-webkit-text-stroke:0.25px #111;">Type :</div>
<div id="f127" class="pg" style="left:1060px;top:486.2px;font-size:9.2px;line-height:9.2px;font-weight:bold;color:#111;transform-origin:0 0;transform:scaleX(1.2057);-webkit-text-stroke:0.15px #111;">MINIMALISTE</div>
<div id="f128" class="pg" style="left:1039px;top:498.1px;font-size:9.6px;line-height:9.6px;font-weight:normal;color:#111;transform-origin:0 0;transform:scaleX(0.7030);-webkit-text-stroke:0.25px #111;">Surface :</div>
<div id="f129" class="pg" style="left:1069px;top:498.4px;font-size:9.2px;line-height:9.2px;font-weight:bold;color:#111;transform-origin:0 0;transform:scaleX(1.3191);-webkit-text-stroke:0.15px #111;">45 M²</div>
<div id="f130" class="pg" style="left:1102.8px;top:498.1px;font-size:9.6px;line-height:9.6px;font-weight:normal;color:#111;transform-origin:0 0;transform:scaleX(0.7035);-webkit-text-stroke:0.25px #111;">- Prix :</div>
<div id="f131" class="pg" style="left:1125.8px;top:498.4px;font-size:9.2px;line-height:9.2px;font-weight:bold;color:#111;transform-origin:0 0;transform:scaleX(1.3306);-webkit-text-stroke:0.15px #111;">85 000€</div>
<svg style="position:absolute;left:1039px;top:524px" width="182" height="90" viewBox="0 0 182 90"><rect width="182" height="90" fill="#dde3e6"/><polygon points="50,10 78,19 78,72 50,67" fill="#d8bb8e" stroke="#3b3b3b" stroke-width="0.7" opacity="1" stroke-linejoin="round"/><line x1="59" y1="13" x2="59" y2="68" stroke="#a88d62" stroke-width="0.5" opacity="1"/><line x1="68" y1="16" x2="68" y2="70" stroke="#a88d62" stroke-width="0.5" opacity="1"/><rect x="62" y="35" width="15" height="31" fill="#cfdde4" stroke="#3b3b3b" stroke-width="0.5" opacity="1"/><line x1="69" y1="35" x2="69" y2="66" stroke="#666" stroke-width="0.5" opacity="1"/><polygon points="78,19 91,22 91,72 78,73" fill="#3b4046" stroke="#3b3b3b" stroke-width="0.5" opacity="1" stroke-linejoin="round"/><polygon points="91,22 116,26 116,67 91,71" fill="#d8bb8e" stroke="#3b3b3b" stroke-width="0.6" opacity="1" stroke-linejoin="round"/><circle cx="103" cy="44" r="9" fill="#c9d9e0" stroke="#6a5a40" stroke-width="1" opacity="1"/><polygon points="116,26 137,30 137,63 116,67" fill="#3b4046" stroke="#3b3b3b" stroke-width="0.5" opacity="1" stroke-linejoin="round"/><line x1="121" y1="27" x2="121" y2="66" stroke="#555b62" stroke-width="0.6" opacity="1"/><line x1="126" y1="28" x2="126" y2="65" stroke="#555b62" stroke-width="0.6" opacity="1"/><line x1="131" y1="29" x2="131" y2="64" stroke="#555b62" stroke-width="0.6" opacity="1"/><polygon points="36,68 74,70 80,76 60,80 38,72" fill="#d6ba8a" stroke="#3b3b3b" stroke-width="0.6" opacity="1" stroke-linejoin="round"/><line x1="58" y1="79" x2="58" y2="82" stroke="#666" stroke-width="0.8" opacity="1"/></svg>
<div id="f132" class="pg" style="left:1039px;top:621.8px;font-size:10px;line-height:10px;font-weight:bold;color:#111111;transform-origin:0 0;transform:scaleX(0.6620);-webkit-text-stroke:0.2px #111;">Condimentum perspiciatis, do fugiat leo, exercitation</div>
<div id="f133" class="pg" style="left:1039px;top:633.8px;font-size:10px;line-height:10px;font-weight:bold;color:#111111;transform-origin:0 0;transform:scaleX(0.6593);-webkit-text-stroke:0.2px #111;">rem? Sapien dolores facilisi at congue. Odio, egestas aut,</div>
<div id="f134" class="pg" style="left:1039px;top:645.7px;font-size:10px;line-height:10px;font-weight:bold;color:#111111;transform-origin:0 0;transform:scaleX(0.6702);-webkit-text-stroke:0.2px #111;">porttitor eu aspernatur pariatur enim explicabo tempori-</div>
<div id="f135" class="pg" style="left:1039px;top:657.6px;font-size:10px;line-height:10px;font-weight:bold;color:#111111;transform-origin:0 0;transform:scaleX(0.6625);-webkit-text-stroke:0.2px #111;">bus tempore tincidunt reiciendis.&nbsp; Voluptatem hendrerit</div>
<div id="f136" class="pg" style="left:1039px;top:669.6px;font-size:10px;line-height:10px;font-weight:bold;color:#111111;transform-origin:0 0;transform:scaleX(0.6659);-webkit-text-stroke:0.2px #111;">natoque! Aliquid taciti, elementum explicabo dolores</div>
<div id="f137" class="pg" style="left:1039px;top:681.5px;font-size:10px;line-height:10px;font-weight:bold;color:#111111;transform-origin:0 0;transform:scaleX(0.6576);-webkit-text-stroke:0.2px #111;">nisl, labore vivamus habitasse. Delectus veniam. Laboris</div>
<div id="f138" class="pg" style="left:1039px;top:693.5px;font-size:10px;line-height:10px;font-weight:bold;color:#111111;transform-origin:0 0;transform:scaleX(0.6638);-webkit-text-stroke:0.2px #111;">curae error mattis primis urna vero, tortor accumsan</div>
<div id="f139" class="pg" style="left:1039px;top:705.4px;font-size:10px;line-height:10px;font-weight:bold;color:#111111;transform-origin:0 0;transform:scaleX(0.6554);-webkit-text-stroke:0.2px #111;">dignissim. Ipsam.</div>
<div id="f140" class="pg" style="left:1039px;top:735.5px;font-size:14.5px;line-height:14.5px;font-weight:bold;color:#0a0a0a;transform-origin:0 0;transform:scaleX(0.8901);-webkit-text-stroke:0.55px #0a0a0a;">Cube Blanc</div>
<div id="f141" class="pg" style="left:1039px;top:752.5px;font-size:9.6px;line-height:9.6px;font-weight:normal;color:#111;transform-origin:0 0;transform:scaleX(0.6886);-webkit-text-stroke:0.25px #111;">Type :</div>
<div id="f142" class="pg" style="left:1060px;top:752.8px;font-size:9.2px;line-height:9.2px;font-weight:bold;color:#111;transform-origin:0 0;transform:scaleX(1.3623);-webkit-text-stroke:0.15px #111;">DESIGN</div>
<div id="f143" class="pg" style="left:1039px;top:764.7px;font-size:9.6px;line-height:9.6px;font-weight:normal;color:#111;transform-origin:0 0;transform:scaleX(0.7030);-webkit-text-stroke:0.25px #111;">Surface :</div>
<div id="f144" class="pg" style="left:1069px;top:765.0px;font-size:9.2px;line-height:9.2px;font-weight:bold;color:#111;transform-origin:0 0;transform:scaleX(1.3282);-webkit-text-stroke:0.15px #111;">100 M²</div>
<div id="f145" class="pg" style="left:1109.8px;top:764.7px;font-size:9.6px;line-height:9.6px;font-weight:normal;color:#111;transform-origin:0 0;transform:scaleX(0.7035);-webkit-text-stroke:0.25px #111;">- Prix :</div>
<div id="f146" class="pg" style="left:1132.8px;top:765.0px;font-size:9.2px;line-height:9.2px;font-weight:bold;color:#111;transform-origin:0 0;transform:scaleX(1.3097);-webkit-text-stroke:0.15px #111;">340 000€</div>
<svg style="position:absolute;left:1039px;top:792px" width="182" height="90" viewBox="0 0 182 90"><rect width="182" height="90" fill="#e5eded"/><ellipse cx="95" cy="76" rx="85" ry="5" fill="#d4dfcc" stroke="none" stroke-width="0.6" opacity="0.9"/><polygon points="64,55 90,54 90,75 64,75" fill="#ffffff" stroke="#3b3b3b" stroke-width="0.7" opacity="1" stroke-linejoin="round"/><rect x="80" y="55" width="10" height="20" fill="#dcdcdc" stroke="none" stroke-width="0.6" opacity="1"/><polygon points="96,54 120,49 120,77 96,72" fill="#ffffff" stroke="#3b3b3b" stroke-width="0.8" opacity="1" stroke-linejoin="round"/><polygon points="120,49 142,53 142,75 120,77" fill="#e2e2e2" stroke="#3b3b3b" stroke-width="0.8" opacity="1" stroke-linejoin="round"/><polygon points="52,35 71,28 71,54 52,55" fill="#ffffff" stroke="#3b3b3b" stroke-width="0.8" opacity="1" stroke-linejoin="round"/><polygon points="71,28 94,35 94,54 71,54" fill="#e4e4e4" stroke="#3b3b3b" stroke-width="0.8" opacity="1" stroke-linejoin="round"/><polygon points="94,40 106,43 106,51 94,54" fill="#eeeeee" stroke="#3b3b3b" stroke-width="0.6" opacity="1" stroke-linejoin="round"/><polygon points="76,21 97,12 97,36 76,40" fill="#ffffff" stroke="#3b3b3b" stroke-width="0.8" opacity="1" stroke-linejoin="round"/><polygon points="97,12 117,20 117,40 97,36" fill="#e2e2e2" stroke="#3b3b3b" stroke-width="0.8" opacity="1" stroke-linejoin="round"/><rect x="56" y="38" width="3" height="5" fill="#666" stroke="none" stroke-width="0.6" opacity="1"/><rect x="91" y="19" width="3" height="4" fill="#666" stroke="none" stroke-width="0.6" opacity="1"/><rect x="76" y="34" width="3" height="11" fill="#888" stroke="none" stroke-width="0.6" opacity="1"/><rect x="111" y="56" width="3" height="5" fill="#666" stroke="none" stroke-width="0.6" opacity="1"/><rect x="124" y="57" width="10" height="3" fill="#888" stroke="none" stroke-width="0.6" opacity="1"/><rect x="75" y="58" width="3" height="17" fill="#888" stroke="none" stroke-width="0.6" opacity="1"/><rect x="90" y="60" width="4" height="15" fill="#888" stroke="none" stroke-width="0.6" opacity="1"/></svg>
<div id="f147" class="pg" style="left:1039px;top:888.8px;font-size:10px;line-height:10px;font-weight:bold;color:#111111;transform-origin:0 0;transform:scaleX(0.6661);-webkit-text-stroke:0.2px #111;">Magnam pretium labore convallis rhoncus rem! Partu-</div>
<div id="f148" class="pg" style="left:1039px;top:900.8px;font-size:10px;line-height:10px;font-weight:bold;color:#111111;transform-origin:0 0;transform:scaleX(0.6571);-webkit-text-stroke:0.2px #111;">rient fugiat quisque ridiculus molestie possimus, cumque</div>
<div id="f149" class="pg" style="left:1039px;top:912.7px;font-size:10px;line-height:10px;font-weight:bold;color:#111111;transform-origin:0 0;transform:scaleX(0.6685);-webkit-text-stroke:0.2px #111;">eleifend vivamus do, primis dapibus purus mi, aenean</div>
<div id="f150" class="pg" style="left:1039px;top:924.6px;font-size:10px;line-height:10px;font-weight:bold;color:#111111;transform-origin:0 0;transform:scaleX(0.6587);-webkit-text-stroke:0.2px #111;">vero adipiscing eleifend turpis.</div>
<div id="f151" class="pg" style="left:1039px;top:954.7px;font-size:14.5px;line-height:14.5px;font-weight:bold;color:#0a0a0a;transform-origin:0 0;transform:scaleX(0.9479);-webkit-text-stroke:0.55px #0a0a0a;">Villa Horizon</div>
<div id="f152" class="pg" style="left:1039px;top:971.7px;font-size:9.6px;line-height:9.6px;font-weight:normal;color:#111;transform-origin:0 0;transform:scaleX(0.6886);-webkit-text-stroke:0.25px #111;">Type :</div>
<div id="f153" class="pg" style="left:1060px;top:972.0px;font-size:9.2px;line-height:9.2px;font-weight:bold;color:#111;transform-origin:0 0;transform:scaleX(1.1754);-webkit-text-stroke:0.15px #111;">CONTEMPORAINE</div>
<div id="f154" class="pg" style="left:1039px;top:983.9px;font-size:9.6px;line-height:9.6px;font-weight:normal;color:#111;transform-origin:0 0;transform:scaleX(0.7030);-webkit-text-stroke:0.25px #111;">Surface :</div>
<div id="f155" class="pg" style="left:1069px;top:984.2px;font-size:9.2px;line-height:9.2px;font-weight:bold;color:#111;transform-origin:0 0;transform:scaleX(1.3282);-webkit-text-stroke:0.15px #111;">600 M²</div>
<div id="f156" class="pg" style="left:1109.8px;top:983.9px;font-size:9.6px;line-height:9.6px;font-weight:normal;color:#111;transform-origin:0 0;transform:scaleX(0.7035);-webkit-text-stroke:0.25px #111;">- Prix :</div>
<div id="f157" class="pg" style="left:1132.8px;top:984.2px;font-size:9.2px;line-height:9.2px;font-weight:bold;color:#111;transform-origin:0 0;transform:scaleX(1.3091);-webkit-text-stroke:0.15px #111;">2 450 000€</div>
<svg style="position:absolute;left:1039px;top:1010px" width="182" height="53" viewBox="0 0 182 53"><rect width="182" height="53" fill="#f0eee6"/><polygon points="8,56 50,52 120,55 176,58 176,70 120,66 60,72 8,68" fill="#dfe4d3" stroke="none" stroke-width="0" opacity="0.9" stroke-linejoin="round"/><ellipse cx="20" cy="42" rx="7" ry="7.5" fill="#c9d4b6" stroke="none" stroke-width="0.6" opacity="1"/><line x1="20" y1="46" x2="20" y2="58" stroke="#7d8470" stroke-width="0.8" opacity="1"/><ellipse cx="151" cy="43" rx="6" ry="7" fill="#ccd6bb" stroke="none" stroke-width="0.6" opacity="1"/><line x1="151" y1="47" x2="151" y2="58" stroke="#7d8470" stroke-width="0.8" opacity="1"/><polygon points="40,25 51,25 79.5,16.5 137,29.5 137,40 75.4,34 40,39" fill="#eef0ee" stroke="none" stroke-width="0.7" opacity="1" stroke-linejoin="round"/><polygon points="57,23 70,19 70,31 57,36" fill="#c7a77c" stroke="none" stroke-width="0.7" opacity="1" stroke-linejoin="round"/><polygon points="71,18.5 80,16.5 80,33.5 71,34.5" fill="#d3dfe5" stroke="#3a3a3a" stroke-width="0.5" opacity="1" stroke-linejoin="round"/><polygon points="80,16.5 103,22 103,35.5 80,33.5" fill="#d7e2e7" stroke="#3a3a3a" stroke-width="0.5" opacity="1" stroke-linejoin="round"/><line x1="91" y1="19.2" x2="91" y2="34.5" stroke="#3a3a3a" stroke-width="0.6" opacity="1"/><polygon points="104,22.3 121,26 121,37.5 104,35.6" fill="#c7a57a" stroke="none" stroke-width="0.7" opacity="1" stroke-linejoin="round"/><line x1="114" y1="24.5" x2="114" y2="37" stroke="#3a3a3a" stroke-width="0.5" opacity="1"/><polygon points="122,26.2 137,29.5 137,40 122,37.6" fill="#dae4e8" stroke="#3a3a3a" stroke-width="0.5" opacity="1" stroke-linejoin="round"/><polygon points="31,23 40,23 40,45 31,45" fill="#f6f6f4" stroke="#333" stroke-width="0.8" opacity="1" stroke-linejoin="round"/><rect x="34" y="27" width="2.5" height="12" fill="#555" stroke="none" stroke-width="0.6" opacity="1"/><line x1="40" y1="25" x2="51" y2="25" stroke="#333" stroke-width="0.7" opacity="1"/><polygon points="51,23.6 79.5,11.1 145.8,28.4 145.8,31.5 79.5,16.5 51,26" fill="#ffffff" stroke="#2e2e2e" stroke-width="0.9" opacity="1" stroke-linejoin="round"/><line x1="79.5" y1="11.1" x2="79.5" y2="16.5" stroke="#2e2e2e" stroke-width="0.9" opacity="1"/><polygon points="40,39.2 75.4,33.8 148.5,40.9 148.5,44.6 75.4,39.2 40,44" fill="#fbfbfb" stroke="#2e2e2e" stroke-width="0.8" opacity="1" stroke-linejoin="round"/><line x1="75.4" y1="33.8" x2="75.4" y2="39.2" stroke="#2e2e2e" stroke-width="0.8" opacity="1"/><polygon points="40,44 75.4,39.2 148.5,44.6 148.5,57 40,57" fill="#f2f2f0" stroke="none" stroke-width="0.7" opacity="1" stroke-linejoin="round"/><polygon points="50,42.6 58,41.5 58,57 50,57" fill="#c39f72" stroke="none" stroke-width="0.7" opacity="1" stroke-linejoin="round"/><polygon points="61,41 75,39.3 75,57 61,57" fill="#d5e1e7" stroke="#3a3a3a" stroke-width="0.5" opacity="1" stroke-linejoin="round"/><line x1="68" y1="40.2" x2="68" y2="57" stroke="#3a3a3a" stroke-width="0.5" opacity="1"/><polygon points="76,39.4 100,41.2 100,57 76,57" fill="#d8e3e8" stroke="#3a3a3a" stroke-width="0.5" opacity="1" stroke-linejoin="round"/><line x1="84" y1="40" x2="84" y2="57" stroke="#3a3a3a" stroke-width="0.5" opacity="1"/><line x1="92" y1="40.6" x2="92" y2="57" stroke="#3a3a3a" stroke-width="0.5" opacity="1"/><polygon points="101,41.3 113,42.2 113,57 101,57" fill="#c7a276" stroke="none" stroke-width="0.7" opacity="1" stroke-linejoin="round"/><polygon points="117,42.4 136,43.7 136,57 117,57" fill="#f4f4f4" stroke="#3a3a3a" stroke-width="0.4" opacity="1" stroke-linejoin="round"/><line x1="126" y1="43" x2="126" y2="57" stroke="#3a3a3a" stroke-width="0.5" opacity="1"/><line x1="148.5" y1="40.9" x2="148.5" y2="58" stroke="#2e2e2e" stroke-width="0.8" opacity="1"/><line x1="40" y1="44" x2="40" y2="57" stroke="#2e2e2e" stroke-width="0.6" opacity="1"/><polygon points="53,57 142,57 142,62 61,64" fill="#b49470" stroke="none" stroke-width="0.7" opacity="1" stroke-linejoin="round"/><polygon points="61,64 161,62 163,68 102,82 61,70" fill="#b9d0dc" stroke="#4a4a4a" stroke-width="0.6" opacity="1" stroke-linejoin="round"/><polygon points="62,65 158,63 102,76 62,68" fill="#d2e2ea" stroke="none" stroke-width="0.7" opacity="1" stroke-linejoin="round"/></svg>
<svg style="position:absolute;left:592px;top:445px;" width="18" height="22" viewBox="0 0 18 22"><path d="M3.3 2.8 L3.3 18.6 L7.7 13.6 L14.7 13.5 Z" fill="#000" stroke="#000" stroke-width="0.9" stroke-linejoin="round"/></svg>
<div style="position:absolute;left:66px;top:179px;width:323px;height:789px;background:#535353;box-shadow:0 0 4px rgba(0,0,0,0.45);border-radius:4px 4px 0 0;overflow:hidden;"></div>
<div style="position:absolute;left:66px;top:179px;width:323px;height:14px;background:#3c3c3c;"></div>
<svg style="position:absolute;left:72px;top:182px;" width="9" height="9" viewBox="0 0 9 9"><path d="M1.5 1.5 L7 7 M7 1.5 L1.5 7" stroke="#d8d8d8" stroke-width="1.7"/></svg>
<div style="position:absolute;left:375px;top:178px;font-size:11px;line-height:13px;color:#cfcfcf;font-weight:bold;white-space:nowrap;">‹‹</div>
<div style="position:absolute;left:66px;top:193px;width:323px;height:26px;background:#434343;"></div>
<div style="position:absolute;left:66px;top:193px;width:70px;height:26px;background:#535353;"></div>
<svg style="position:absolute;left:75px;top:201px;" width="7" height="11" viewBox="0 0 7 11"><path d="M1 4 L3.5 1.5 L6 4 M1 7 L3.5 9.5 L6 7" fill="none" stroke="#8a8a8a" stroke-width="1"/></svg>
<div id="f158" style="position:absolute;left:85px;top:200px;font-size:12px;line-height:14px;font-weight:bold;color:#f0f0f0;white-space:nowrap;transform-origin:0 0;transform:scaleX(0.9585);">Scripts</div>
<svg style="position:absolute;left:372px;top:201px;" width="12" height="10" viewBox="0 0 12 10"><g stroke="#cfcfcf" stroke-width="1"><line x1="0" y1="1.5" x2="12" y2="1.5"/><line x1="0" y1="4" x2="12" y2="4"/><line x1="0" y1="6.5" x2="12" y2="6.5"/><line x1="0" y1="9" x2="12" y2="9"/></g></svg>
<div style="position:absolute;left:74px;top:241px;width:301px;height:1px;background:#4a4a4a;"></div>
<svg style="position:absolute;left:77px;top:226px;" width="10" height="10" viewBox="0 0 10 10"><path d="M3 1.5 L6.5 5 L3 8.5" fill="none" stroke="#a8a8a8" stroke-width="1.3"/></svg>
<svg style="position:absolute;left:92px;top:224px;" width="15" height="13" viewBox="0 0 15 13"><path d="M0.5 1.5 L5.5 1.5 L7 3 L14.5 3 L14.5 12.5 L0.5 12.5 Z" fill="#d8d8d8"/><path d="M0.5 4.5 L14.5 4.5" stroke="#8a8a8a" stroke-width="0.8"/></svg>
<div id="f159" style="position:absolute;left:112px;top:226px;font-size:11.5px;line-height:13.5px;font-weight:500;color:#f2f2f2;white-space:nowrap;transform-origin:0 0;transform:scaleX(0.9775);-webkit-text-stroke:0.2px #f2f2f2;">Application</div>
<div style="position:absolute;left:74px;top:263px;width:301px;height:1px;background:#4a4a4a;"></div>
<svg style="position:absolute;left:77px;top:248px;" width="10" height="10" viewBox="0 0 10 10"><path d="M3 1.5 L6.5 5 L3 8.5" fill="none" stroke="#a8a8a8" stroke-width="1.3"/></svg>
<svg style="position:absolute;left:92px;top:246px;" width="15" height="13" viewBox="0 0 15 13"><path d="M0.5 1.5 L5.5 1.5 L7 3 L14.5 3 L14.5 12.5 L0.5 12.5 Z" fill="#d8d8d8"/><path d="M0.5 4.5 L14.5 4.5" stroke="#8a8a8a" stroke-width="0.8"/></svg>
<div id="f160" style="position:absolute;left:112px;top:248px;font-size:11.5px;line-height:13.5px;font-weight:500;color:#f2f2f2;white-space:nowrap;transform-origin:0 0;transform:scaleX(0.9559);-webkit-text-stroke:0.2px #f2f2f2;">Communauté</div>
<div style="position:absolute;left:74px;top:285px;width:301px;height:1px;background:#4a4a4a;"></div>
<svg style="position:absolute;left:76px;top:270px;" width="10" height="10" viewBox="0 0 10 10"><path d="M1.5 3 L5 6.5 L8.5 3" fill="none" stroke="#a8a8a8" stroke-width="1.3"/></svg>
<svg style="position:absolute;left:92px;top:268px;" width="15" height="13" viewBox="0 0 15 13"><path d="M0.5 1.5 L5.5 1.5 L7 3 L14.5 3 L14.5 12.5 L0.5 12.5 Z" fill="#d8d8d8"/><path d="M0.5 4.5 L14.5 4.5" stroke="#8a8a8a" stroke-width="0.8"/></svg>
<div id="f161" style="position:absolute;left:112px;top:270px;font-size:11.5px;line-height:13.5px;font-weight:500;color:#f2f2f2;white-space:nowrap;transform-origin:0 0;transform:scaleX(0.9777);-webkit-text-stroke:0.2px #f2f2f2;">Utilisateur</div>
<div style="position:absolute;left:74px;top:307px;width:301px;height:1px;background:#4a4a4a;"></div>
<svg style="position:absolute;left:77px;top:292px;" width="10" height="10" viewBox="0 0 10 10"><path d="M3 1.5 L6.5 5 L3 8.5" fill="none" stroke="#a8a8a8" stroke-width="1.3"/></svg>
<svg style="position:absolute;left:113px;top:290px;" width="15" height="13" viewBox="0 0 15 13"><path d="M0.5 1.5 L5.5 1.5 L7 3 L14.5 3 L14.5 12.5 L0.5 12.5 Z" fill="#d8d8d8"/><path d="M0.5 4.5 L14.5 4.5" stroke="#8a8a8a" stroke-width="0.8"/></svg>
<div id="f162" style="position:absolute;left:133px;top:292px;font-size:11.5px;line-height:13.5px;font-weight:500;color:#f2f2f2;white-space:nowrap;transform-origin:0 0;transform:scaleX(0.9157);-webkit-text-stroke:0.2px #f2f2f2;">****Masonry_VDP_Studio</div>
<div style="position:absolute;left:74px;top:329px;width:301px;height:1px;background:#4a4a4a;"></div>
<svg style="position:absolute;left:76px;top:314px;" width="10" height="10" viewBox="0 0 10 10"><path d="M1.5 3 L5 6.5 L8.5 3" fill="none" stroke="#a8a8a8" stroke-width="1.3"/></svg>
<svg style="position:absolute;left:113px;top:312px;" width="15" height="13" viewBox="0 0 15 13"><path d="M0.5 1.5 L5.5 1.5 L7 3 L14.5 3 L14.5 12.5 L0.5 12.5 Z" fill="#d8d8d8"/><path d="M0.5 4.5 L14.5 4.5" stroke="#8a8a8a" stroke-width="0.8"/></svg>
<div id="f163" style="position:absolute;left:133px;top:314px;font-size:11.5px;line-height:13.5px;font-weight:500;color:#f2f2f2;white-space:nowrap;transform-origin:0 0;transform:scaleX(0.9528);-webkit-text-stroke:0.2px #f2f2f2;">****Masonry Catalog Studio</div>
<div style="position:absolute;left:74px;top:351px;width:301px;height:1px;background:#4a4a4a;"></div>
<svg style="position:absolute;left:77px;top:336px;" width="10" height="10" viewBox="0 0 10 10"><path d="M3 1.5 L6.5 5 L3 8.5" fill="none" stroke="#a8a8a8" stroke-width="1.3"/></svg>
<svg style="position:absolute;left:133px;top:334px;" width="15" height="13" viewBox="0 0 15 13"><path d="M0.5 1.5 L5.5 1.5 L7 3 L14.5 3 L14.5 12.5 L0.5 12.5 Z" fill="#d8d8d8"/><path d="M0.5 4.5 L14.5 4.5" stroke="#8a8a8a" stroke-width="0.8"/></svg>
<div id="f164" style="position:absolute;left:154px;top:336px;font-size:11.5px;line-height:13.5px;font-weight:500;color:#f2f2f2;white-space:nowrap;transform-origin:0 0;transform:scaleX(0.9340);-webkit-text-stroke:0.2px #f2f2f2;">archives</div>
<div style="position:absolute;left:74px;top:373px;width:301px;height:1px;background:#4a4a4a;"></div>
<svg style="position:absolute;left:131px;top:356px;" width="16" height="14" viewBox="0 0 16 14"><ellipse cx="5.5" cy="4" rx="3.2" ry="2.8" fill="#cfcfcf"/><path d="M4 6.5 C7.5 6.5 8 9 5 10 C2.5 11 3 13 6.5 12.5" fill="none" stroke="#cfcfcf" stroke-width="2"/><path d="M9.5 5 C11.5 7 11.5 10.5 9.5 13" fill="none" stroke="#bdbdbd" stroke-width="1.4"/><path d="M12.5 5 C14.5 7 14.5 10.5 12.5 13" fill="none" stroke="#bdbdbd" stroke-width="1.4"/></svg>
<div id="f165" style="position:absolute;left:154px;top:358px;font-size:11.5px;line-height:13.5px;font-weight:500;color:#f2f2f2;white-space:nowrap;transform-origin:0 0;transform:scaleX(0.9076);-webkit-text-stroke:0.2px #f2f2f2;">Masonry_Catalog_Studio_7_1_5_EN.jsx</div>
<div style="position:absolute;left:74px;top:395px;width:301px;height:1px;background:#4a4a4a;"></div>
<svg style="position:absolute;left:131px;top:378px;" width="16" height="14" viewBox="0 0 16 14"><ellipse cx="5.5" cy="4" rx="3.2" ry="2.8" fill="#cfcfcf"/><path d="M4 6.5 C7.5 6.5 8 9 5 10 C2.5 11 3 13 6.5 12.5" fill="none" stroke="#cfcfcf" stroke-width="2"/><path d="M9.5 5 C11.5 7 11.5 10.5 9.5 13" fill="none" stroke="#bdbdbd" stroke-width="1.4"/><path d="M12.5 5 C14.5 7 14.5 10.5 12.5 13" fill="none" stroke="#bdbdbd" stroke-width="1.4"/></svg>
<div id="f166" style="position:absolute;left:154px;top:380px;font-size:11.5px;line-height:13.5px;font-weight:500;color:#f2f2f2;white-space:nowrap;transform-origin:0 0;transform:scaleX(0.9124);-webkit-text-stroke:0.2px #f2f2f2;">Masonry_Catalog_Studio_7_1_5_EN.jsxbin</div>
<div style="position:absolute;left:74px;top:417px;width:301px;height:1px;background:#4a4a4a;"></div>
<svg style="position:absolute;left:131px;top:400px;" width="16" height="14" viewBox="0 0 16 14"><ellipse cx="5.5" cy="4" rx="3.2" ry="2.8" fill="#cfcfcf"/><path d="M4 6.5 C7.5 6.5 8 9 5 10 C2.5 11 3 13 6.5 12.5" fill="none" stroke="#cfcfcf" stroke-width="2"/><path d="M9.5 5 C11.5 7 11.5 10.5 9.5 13" fill="none" stroke="#bdbdbd" stroke-width="1.4"/><path d="M12.5 5 C14.5 7 14.5 10.5 12.5 13" fill="none" stroke="#bdbdbd" stroke-width="1.4"/></svg>
<div id="f167" style="position:absolute;left:154px;top:402px;font-size:11.5px;line-height:13.5px;font-weight:500;color:#f2f2f2;white-space:nowrap;transform-origin:0 0;transform:scaleX(0.9056);-webkit-text-stroke:0.2px #f2f2f2;">Masonry_Catalog_Studio_7_1_5_FR.jsx</div>
<div style="position:absolute;left:67px;top:417px;width:308px;height:22px;background:#4b6a8b;"></div>
<div style="position:absolute;left:74px;top:439px;width:301px;height:1px;background:#4a4a4a;"></div>
<svg style="position:absolute;left:131px;top:422px;" width="16" height="14" viewBox="0 0 16 14"><ellipse cx="5.5" cy="4" rx="3.2" ry="2.8" fill="#cfcfcf"/><path d="M4 6.5 C7.5 6.5 8 9 5 10 C2.5 11 3 13 6.5 12.5" fill="none" stroke="#cfcfcf" stroke-width="2"/><path d="M9.5 5 C11.5 7 11.5 10.5 9.5 13" fill="none" stroke="#bdbdbd" stroke-width="1.4"/><path d="M12.5 5 C14.5 7 14.5 10.5 12.5 13" fill="none" stroke="#bdbdbd" stroke-width="1.4"/></svg>
<div id="f168" style="position:absolute;left:154px;top:424px;font-size:11.5px;line-height:13.5px;font-weight:500;color:#f2f2f2;white-space:nowrap;transform-origin:0 0;transform:scaleX(0.9106);-webkit-text-stroke:0.2px #f2f2f2;">Masonry_Catalog_Studio_7_1_5_FR.jsxbin</div>
<div style="position:absolute;left:74px;top:461px;width:301px;height:1px;background:#4a4a4a;"></div>
<svg style="position:absolute;left:77px;top:446px;" width="10" height="10" viewBox="0 0 10 10"><path d="M3 1.5 L6.5 5 L3 8.5" fill="none" stroke="#a8a8a8" stroke-width="1.3"/></svg>
<svg style="position:absolute;left:113px;top:444px;" width="15" height="13" viewBox="0 0 15 13"><path d="M0.5 1.5 L5.5 1.5 L7 3 L14.5 3 L14.5 12.5 L0.5 12.5 Z" fill="#d8d8d8"/><path d="M0.5 4.5 L14.5 4.5" stroke="#8a8a8a" stroke-width="0.8"/></svg>
<div id="f169" style="position:absolute;left:133px;top:446px;font-size:11.5px;line-height:13.5px;font-weight:500;color:#f2f2f2;white-space:nowrap;transform-origin:0 0;transform:scaleX(0.9093);-webkit-text-stroke:0.2px #f2f2f2;">***Captain_Bar_Chart_1_0</div>
<div style="position:absolute;left:74px;top:483px;width:301px;height:1px;background:#4a4a4a;"></div>
<svg style="position:absolute;left:77px;top:468px;" width="10" height="10" viewBox="0 0 10 10"><path d="M3 1.5 L6.5 5 L3 8.5" fill="none" stroke="#a8a8a8" stroke-width="1.3"/></svg>
<svg style="position:absolute;left:113px;top:466px;" width="15" height="13" viewBox="0 0 15 13"><path d="M0.5 1.5 L5.5 1.5 L7 3 L14.5 3 L14.5 12.5 L0.5 12.5 Z" fill="#d8d8d8"/><path d="M0.5 4.5 L14.5 4.5" stroke="#8a8a8a" stroke-width="0.8"/></svg>
<div id="f170" style="position:absolute;left:133px;top:468px;font-size:11.5px;line-height:13.5px;font-weight:500;color:#f2f2f2;white-space:nowrap;transform-origin:0 0;transform:scaleX(0.9214);-webkit-text-stroke:0.2px #f2f2f2;">***Captain_Dot_Plot_1_0</div>
<div style="position:absolute;left:74px;top:505px;width:301px;height:1px;background:#4a4a4a;"></div>
<svg style="position:absolute;left:77px;top:490px;" width="10" height="10" viewBox="0 0 10 10"><path d="M3 1.5 L6.5 5 L3 8.5" fill="none" stroke="#a8a8a8" stroke-width="1.3"/></svg>
<svg style="position:absolute;left:113px;top:488px;" width="15" height="13" viewBox="0 0 15 13"><path d="M0.5 1.5 L5.5 1.5 L7 3 L14.5 3 L14.5 12.5 L0.5 12.5 Z" fill="#d8d8d8"/><path d="M0.5 4.5 L14.5 4.5" stroke="#8a8a8a" stroke-width="0.8"/></svg>
<div id="f171" style="position:absolute;left:133px;top:490px;font-size:11.5px;line-height:13.5px;font-weight:500;color:#f2f2f2;white-space:nowrap;transform-origin:0 0;transform:scaleX(0.9423);-webkit-text-stroke:0.2px #f2f2f2;">***Captain_Graph_Automation</div>
<div style="position:absolute;left:74px;top:527px;width:301px;height:1px;background:#4a4a4a;"></div>
<svg style="position:absolute;left:77px;top:512px;" width="10" height="10" viewBox="0 0 10 10"><path d="M3 1.5 L6.5 5 L3 8.5" fill="none" stroke="#a8a8a8" stroke-width="1.3"/></svg>
<svg style="position:absolute;left:113px;top:510px;" width="15" height="13" viewBox="0 0 15 13"><path d="M0.5 1.5 L5.5 1.5 L7 3 L14.5 3 L14.5 12.5 L0.5 12.5 Z" fill="#d8d8d8"/><path d="M0.5 4.5 L14.5 4.5" stroke="#8a8a8a" stroke-width="0.8"/></svg>
<div id="f172" style="position:absolute;left:133px;top:512px;font-size:11.5px;line-height:13.5px;font-weight:500;color:#f2f2f2;white-space:nowrap;transform-origin:0 0;transform:scaleX(0.9429);-webkit-text-stroke:0.2px #f2f2f2;">***Captain_Graph_Ultimate</div>
<div style="position:absolute;left:74px;top:549px;width:301px;height:1px;background:#4a4a4a;"></div>
<svg style="position:absolute;left:77px;top:534px;" width="10" height="10" viewBox="0 0 10 10"><path d="M3 1.5 L6.5 5 L3 8.5" fill="none" stroke="#a8a8a8" stroke-width="1.3"/></svg>
<svg style="position:absolute;left:113px;top:532px;" width="15" height="13" viewBox="0 0 15 13"><path d="M0.5 1.5 L5.5 1.5 L7 3 L14.5 3 L14.5 12.5 L0.5 12.5 Z" fill="#d8d8d8"/><path d="M0.5 4.5 L14.5 4.5" stroke="#8a8a8a" stroke-width="0.8"/></svg>
<div id="f173" style="position:absolute;left:133px;top:534px;font-size:11.5px;line-height:13.5px;font-weight:500;color:#f2f2f2;white-space:nowrap;transform-origin:0 0;transform:scaleX(0.9836);-webkit-text-stroke:0.2px #f2f2f2;">***CaptainGraph1-projet</div>
<div style="position:absolute;left:74px;top:571px;width:301px;height:1px;background:#4a4a4a;"></div>
<svg style="position:absolute;left:77px;top:556px;" width="10" height="10" viewBox="0 0 10 10"><path d="M3 1.5 L6.5 5 L3 8.5" fill="none" stroke="#a8a8a8" stroke-width="1.3"/></svg>
<svg style="position:absolute;left:113px;top:554px;" width="15" height="13" viewBox="0 0 15 13"><path d="M0.5 1.5 L5.5 1.5 L7 3 L14.5 3 L14.5 12.5 L0.5 12.5 Z" fill="#d8d8d8"/><path d="M0.5 4.5 L14.5 4.5" stroke="#8a8a8a" stroke-width="0.8"/></svg>
<div id="f174" style="position:absolute;left:133px;top:556px;font-size:11.5px;line-height:13.5px;font-weight:500;color:#f2f2f2;white-space:nowrap;transform-origin:0 0;transform:scaleX(1.0174);-webkit-text-stroke:0.2px #f2f2f2;">***Masonry-pro2-projet</div>
<div style="position:absolute;left:375px;top:220px;width:12px;height:352px;background:#4d4d4d;"></div>
<div style="position:absolute;left:377px;top:222px;width:8px;height:170px;background:#676767;border-radius:4px;"></div>
<div style="position:absolute;left:387px;top:193px;width:2px;height:400px;background:#3e3e3e;"></div>
<div style="position:absolute;left:66px;top:572px;width:323px;height:26px;background:#535353;"></div>
<svg style="position:absolute;left:353px;top:577px;" width="14" height="14" viewBox="0 0 14 14"><circle cx="7" cy="7" r="6.5" fill="#cfcfcf"/><rect x="6" y="6" width="2" height="5" fill="#535353"/><circle cx="7" cy="4" r="1.1" fill="#535353"/></svg>
<div style="position:absolute;left:66px;top:598px;width:323px;height:2px;background:#3a3a3a;"></div>
<div style="position:absolute;left:66px;top:600px;width:323px;height:26px;background:#434343;"></div>
<div style="position:absolute;left:66px;top:600px;width:76px;height:26px;background:#535353;"></div>
<svg style="position:absolute;left:75px;top:608px;" width="7" height="11" viewBox="0 0 7 11"><path d="M1 4 L3.5 1.5 L6 4 M1 7 L3.5 9.5 L6 7" fill="none" stroke="#8a8a8a" stroke-width="1"/></svg>
<div id="f175" style="position:absolute;left:85px;top:607px;font-size:12px;line-height:14px;font-weight:bold;color:#f0f0f0;white-space:nowrap;transform-origin:0 0;transform:scaleX(0.9424);">Calques</div>
<svg style="position:absolute;left:372px;top:608px;" width="12" height="10" viewBox="0 0 12 10"><g stroke="#cfcfcf" stroke-width="1"><line x1="0" y1="1.5" x2="12" y2="1.5"/><line x1="0" y1="4" x2="12" y2="4"/><line x1="0" y1="6.5" x2="12" y2="6.5"/><line x1="0" y1="9" x2="12" y2="9"/></g></svg>
<div style="position:absolute;left:66px;top:626px;width:323px;height:26px;background:#555555;"></div>
<div style="position:absolute;left:66px;top:651px;width:323px;height:1px;background:#4a4a4a;"></div>
<svg style="position:absolute;left:70px;top:634px;" width="16" height="11" viewBox="0 0 16 11"><path d="M1 5.5 C4 1 12 1 15 5.5 C12 10 4 10 1 5.5Z" fill="#d0d0d0"/><circle cx="8" cy="5.5" r="2.2" fill="#535353"/></svg>
<div style="position:absolute;left:98px;top:627px;width:1px;height:24px;background:#4a4a4a;"></div>
<div style="position:absolute;left:112px;top:631px;width:3px;height:18px;background:#4a90e2;"></div>
<svg style="position:absolute;left:123px;top:635px;" width="10" height="10" viewBox="0 0 10 10"><path d="M3 1.5 L6.5 5 L3 8.5" fill="none" stroke="#a8a8a8" stroke-width="1.3"/></svg>
<div id="f176" style="position:absolute;left:135px;top:635px;font-size:11.5px;line-height:13.5px;font-weight:500;color:#f2f2f2;white-space:nowrap;transform-origin:0 0;transform:scaleX(0.9338);-webkit-text-stroke:0.2px #f2f2f2;">Calque 1</div>
<svg style="position:absolute;left:345px;top:633px;" width="14" height="14" viewBox="0 0 14 14"><path d="M3 11 L2 12 L3 9 L9 3 L11 5 L5 11 Z" fill="#a8a8a8"/><path d="M10 2 L12 4" stroke="#a8a8a8" stroke-width="1.3"/></svg>
<div style="position:absolute;left:363px;top:627px;width:1px;height:24px;background:#4a4a4a;"></div>
<div style="position:absolute;left:369px;top:635px;width:10px;height:10px;background:#585858;border:1.6px solid #111111;"></div>
<div style="position:absolute;left:66px;top:935px;width:323px;height:1px;background:#4a4a4a;"></div>
<div id="f177" style="position:absolute;left:72px;top:942px;font-size:11.5px;line-height:13.5px;font-weight:500;color:#e8e8e8;white-space:nowrap;transform-origin:0 0;transform:scaleX(0.9275);-webkit-text-stroke:0.2px #e8e8e8;">Page : 2, 1 calque</div>
<svg style="position:absolute;left:324px;top:940px;" width="14" height="14" viewBox="0 0 14 14"><rect x="1" y="1" width="12" height="12" fill="none" stroke="#cfcfcf" stroke-width="1.2"/><path d="M7 4 L7 10 M4 7 L10 7" stroke="#cfcfcf" stroke-width="1.2"/></svg>
<svg style="position:absolute;left:351px;top:940px;" width="14" height="14" viewBox="0 0 14 14"><g stroke="#8a8a8a" stroke-width="1" fill="none"><rect x="3" y="4" width="8" height="9"/><line x1="1" y1="3" x2="13" y2="3"/><line x1="5" y1="1" x2="9" y2="1"/><line x1="5" y1="6" x2="5" y2="11"/><line x1="7" y1="6" x2="7" y2="11"/><line x1="9" y1="6" x2="9" y2="11"/></g></svg>
<div style="position:absolute;left:66px;top:960px;width:323px;height:8px;background:#3f3f3f;"></div>
<div style="position:absolute;left:214px;top:962px;width:1px;height:4px;background:#4f4f4f;"></div>
<div style="position:absolute;left:216px;top:962px;width:1px;height:4px;background:#4f4f4f;"></div>
<div style="position:absolute;left:218px;top:962px;width:1px;height:4px;background:#4f4f4f;"></div>
<div style="position:absolute;left:220px;top:962px;width:1px;height:4px;background:#4f4f4f;"></div>
<div style="position:absolute;left:222px;top:962px;width:1px;height:4px;background:#4f4f4f;"></div>
<div style="position:absolute;left:224px;top:962px;width:1px;height:4px;background:#4f4f4f;"></div>
<div style="position:absolute;left:226px;top:962px;width:1px;height:4px;background:#4f4f4f;"></div>
<div style="position:absolute;left:228px;top:962px;width:1px;height:4px;background:#4f4f4f;"></div>
<div style="position:absolute;left:230px;top:962px;width:1px;height:4px;background:#4f4f4f;"></div>
<div style="position:absolute;left:232px;top:962px;width:1px;height:4px;background:#4f4f4f;"></div>
<div style="position:absolute;left:234px;top:962px;width:1px;height:4px;background:#4f4f4f;"></div>
<div style="position:absolute;left:236px;top:962px;width:1px;height:4px;background:#4f4f4f;"></div>
<div style="position:absolute;left:238px;top:962px;width:1px;height:4px;background:#4f4f4f;"></div>
<div style="position:absolute;left:389px;top:686px;width:185px;height:251px;background:#535353;box-shadow:2px 2px 4px rgba(0,0,0,0.35);"></div>
<div style="position:absolute;left:389px;top:686px;width:185px;height:14px;background:#3c3c3c;"></div>
<div style="position:absolute;left:559px;top:685px;font-size:11px;line-height:13px;color:#cfcfcf;font-weight:bold;white-space:nowrap;">‹‹</div>
<div style="position:absolute;left:389px;top:700px;width:185px;height:26px;background:#434343;"></div>
<div style="position:absolute;left:389px;top:700px;width:68px;height:26px;background:#535353;"></div>
<div id="f178" style="position:absolute;left:395px;top:706px;font-size:12px;line-height:14px;font-weight:bold;color:#f0f0f0;white-space:nowrap;transform-origin:0 0;transform:scaleX(1.0197);">de script</div>
<div style="position:absolute;left:389px;top:733px;width:179px;height:165px;background:#ffffff;"></div>
<div id="f179" style="position:absolute;left:389px;top:907px;font-size:11.5px;line-height:13.5px;font-weight:500;color:#e8e8e8;white-space:nowrap;transform-origin:0 0;transform:scaleX(1.0180);-webkit-text-stroke:0.2px #e8e8e8;">ntitulé du script.</div>
<div style="position:absolute;left:389px;top:929px;width:185px;height:8px;background:#3f3f3f;"></div>
<div style="position:absolute;left:1210px;top:407px;width:293px;height:385px;background:#535353;box-shadow:0 0 4px rgba(0,0,0,0.45);border-radius:4px 4px 0 0;"></div>
<div style="position:absolute;left:1210px;top:407px;width:293px;height:13px;background:#3c3c3c;"></div>
<svg style="position:absolute;left:1216px;top:410px;" width="9" height="9" viewBox="0 0 9 9"><path d="M1.5 1.5 L7 7 M7 1.5 L1.5 7" stroke="#d8d8d8" stroke-width="1.7"/></svg>
<div style="position:absolute;left:1489px;top:406px;font-size:11px;line-height:13px;color:#cfcfcf;font-weight:bold;white-space:nowrap;">‹‹</div>
<div style="position:absolute;left:1210px;top:420px;width:293px;height:26px;background:#434343;"></div>
<div style="position:absolute;left:1210px;top:420px;width:137px;height:26px;background:#535353;"></div>
<svg style="position:absolute;left:1219px;top:428px;" width="7" height="11" viewBox="0 0 7 11"><path d="M1 4 L3.5 1.5 L6 4 M1 7 L3.5 9.5 L6 7" fill="none" stroke="#8a8a8a" stroke-width="1"/></svg>
<div id="f180" style="position:absolute;left:1229px;top:427px;font-size:12px;line-height:14px;font-weight:bold;color:#f0f0f0;white-space:nowrap;transform-origin:0 0;transform:scaleX(0.9689);">Styles de caractère</div>
<svg style="position:absolute;left:1486px;top:428px;" width="12" height="10" viewBox="0 0 12 10"><g stroke="#cfcfcf" stroke-width="1"><line x1="0" y1="1.5" x2="12" y2="1.5"/><line x1="0" y1="4" x2="12" y2="4"/><line x1="0" y1="6.5" x2="12" y2="6.5"/><line x1="0" y1="9" x2="12" y2="9"/></g></svg>
<div id="f181" style="position:absolute;left:1216px;top:455px;font-size:11.5px;line-height:13.5px;font-weight:500;color:#f0f0f0;white-space:nowrap;transform-origin:0 0;transform:scaleX(0.8939);-webkit-text-stroke:0.2px #f0f0f0;">gras</div>
<div style="position:absolute;left:1452px;top:452px;font-size:12px;line-height:14px;color:#bdbdbd;font-weight:normal;white-space:nowrap;">[a+]</div>
<svg style="position:absolute;left:1482px;top:452px;" width="14" height="17" viewBox="0 0 14 17"><path d="M9 1 L3 9 L7 9 L5 16 L11 7 L7 7 Z" fill="#bdbdbd"/></svg>
<div style="position:absolute;left:1216px;top:473px;width:281px;height:1px;background:#4a4a4a;"></div>
<div id="f182" style="position:absolute;left:1246px;top:478px;font-size:11.5px;line-height:13.5px;font-weight:500;color:#f0f0f0;white-space:nowrap;transform-origin:0 0;transform:scaleX(0.8893);-webkit-text-stroke:0.2px #f0f0f0;">[Sans]</div>
<svg style="position:absolute;left:1479px;top:478px;" width="13" height="13" viewBox="0 0 13 13"><path d="M2 2 L11 11 M11 2 L2 11" stroke="#9a9a9a" stroke-width="1.5"/><path d="M8 5 L11 2" stroke="#cfcfcf" stroke-width="2"/></svg>
<div style="position:absolute;left:1211px;top:495px;width:291px;height:22px;background:#4b6a8b;"></div>
<div id="f183" style="position:absolute;left:1246px;top:500px;font-size:11.5px;line-height:13.5px;font-weight:bold;color:#ffffff;white-space:nowrap;transform-origin:0 0;transform:scaleX(0.8232);">gras</div>
<div style="position:absolute;left:1210px;top:757px;width:293px;height:1px;background:#4a4a4a;"></div>
<svg style="position:absolute;left:1217px;top:763px;" width="15" height="15" viewBox="0 0 15 15"><rect x="1" y="1" width="12" height="12" fill="none" stroke="#bdbdbd" stroke-width="1.1"/><path d="M3 11 L9 5 M6 5 L9 5 L9 8" stroke="#bdbdbd" stroke-width="1.2" fill="none"/></svg>
<svg style="position:absolute;left:1410px;top:764px;" width="16" height="13" viewBox="0 0 16 13"><path d="M0.5 1.5 L5.5 1.5 L7 3 L15 3 L15 12.5 L0.5 12.5 Z" fill="#cfcfcf"/></svg>
<svg style="position:absolute;left:1439px;top:763px;" width="14" height="14" viewBox="0 0 14 14"><rect x="1" y="1" width="12" height="12" fill="none" stroke="#cfcfcf" stroke-width="1.2"/><path d="M7 4 L7 10 M4 7 L10 7" stroke="#cfcfcf" stroke-width="1.2"/></svg>
<svg style="position:absolute;left:1466px;top:763px;" width="14" height="14" viewBox="0 0 14 14"><g stroke="#cfcfcf" stroke-width="1.1" fill="none"><rect x="3" y="4" width="8" height="9"/><line x1="1" y1="3" x2="13" y2="3"/><line x1="5" y1="1" x2="9" y2="1"/><line x1="5" y1="6" x2="5" y2="11"/><line x1="7" y1="6" x2="7" y2="11"/><line x1="9" y1="6" x2="9" y2="11"/></g></svg>
<div style="position:absolute;left:1210px;top:785px;width:293px;height:7px;background:#3f3f3f;"></div>
<div style="position:absolute;left:1558px;top:334px;width:294px;height:441px;background:#535353;box-shadow:0 0 4px rgba(0,0,0,0.45);border-radius:4px 4px 0 0;"></div>
<div style="position:absolute;left:1558px;top:334px;width:294px;height:14px;background:#3c3c3c;"></div>
<svg style="position:absolute;left:1564px;top:337px;" width="9" height="9" viewBox="0 0 9 9"><path d="M1.5 1.5 L7 7 M7 1.5 L1.5 7" stroke="#d8d8d8" stroke-width="1.7"/></svg>
<div style="position:absolute;left:1838px;top:333px;font-size:11px;line-height:13px;color:#cfcfcf;font-weight:bold;white-space:nowrap;">‹‹</div>
<div style="position:absolute;left:1558px;top:348px;width:294px;height:26px;background:#434343;"></div>
<div style="position:absolute;left:1558px;top:348px;width:107px;height:26px;background:#535353;"></div>
<svg style="position:absolute;left:1567px;top:356px;" width="7" height="11" viewBox="0 0 7 11"><path d="M1 4 L3.5 1.5 L6 4 M1 7 L3.5 9.5 L6 7" fill="none" stroke="#8a8a8a" stroke-width="1"/></svg>
<div id="f184" style="position:absolute;left:1577px;top:355px;font-size:12px;line-height:14px;font-weight:bold;color:#f0f0f0;white-space:nowrap;transform-origin:0 0;transform:scaleX(0.9672);">Styles d'objet</div>
<svg style="position:absolute;left:1835px;top:356px;" width="12" height="10" viewBox="0 0 12 10"><g stroke="#cfcfcf" stroke-width="1"><line x1="0" y1="1.5" x2="12" y2="1.5"/><line x1="0" y1="4" x2="12" y2="4"/><line x1="0" y1="6.5" x2="12" y2="6.5"/><line x1="0" y1="9" x2="12" y2="9"/></g></svg>
<div id="f185" style="position:absolute;left:1564px;top:382px;font-size:11.5px;line-height:13.5px;font-weight:500;color:#f0f0f0;white-space:nowrap;transform-origin:0 0;transform:scaleX(0.9580);-webkit-text-stroke:0.2px #f0f0f0;">[Bloc graphique standard]+</div>
<svg style="position:absolute;left:1830px;top:379px;" width="14" height="17" viewBox="0 0 14 17"><path d="M9 1 L3 9 L7 9 L5 16 L11 7 L7 7 Z" fill="#bdbdbd"/></svg>
<div style="position:absolute;left:1564px;top:400px;width:282px;height:1px;background:#4a4a4a;"></div>
<div id="f186" style="position:absolute;left:1597px;top:405px;font-size:11.5px;line-height:13.5px;font-weight:500;color:#f0f0f0;white-space:nowrap;transform-origin:0 0;transform:scaleX(0.8893);-webkit-text-stroke:0.2px #f0f0f0;">[Sans]</div>
<svg style="position:absolute;left:1825px;top:404px;" width="13" height="13" viewBox="0 0 13 13"><path d="M2 2 L11 11 M11 2 L2 11" stroke="#9a9a9a" stroke-width="1.5"/></svg>
<div style="position:absolute;left:1559px;top:422px;width:292px;height:22px;background:#4b6a8b;"></div>
<div id="f187" style="position:absolute;left:1597px;top:427px;font-size:11.5px;line-height:13.5px;font-weight:bold;color:#ffffff;white-space:nowrap;transform-origin:0 0;transform:scaleX(0.9410);">[Bloc graphique standard]+</div>
<svg style="position:absolute;left:1825px;top:427px;" width="12" height="12" viewBox="0 0 12 12"><rect x="1" y="1" width="10" height="10" fill="none" stroke="#e0e0e0" stroke-width="1.1" stroke-dasharray="2 1"/></svg>
<div id="f188" style="position:absolute;left:1597px;top:449px;font-size:11.5px;line-height:13.5px;font-weight:500;color:#f0f0f0;white-space:nowrap;transform-origin:0 0;transform:scaleX(0.9518);-webkit-text-stroke:0.2px #f0f0f0;">[Bloc de texte standard]</div>
<svg style="position:absolute;left:1825px;top:449px;" width="12" height="12" viewBox="0 0 12 12"><rect x="1" y="1" width="10" height="10" fill="none" stroke="#cfcfcf" stroke-width="1.1"/><path d="M3.5 3.5 H8.5 M6 3.5 V9" stroke="#cfcfcf" stroke-width="1.1"/></svg>
<div style="position:absolute;left:1564px;top:466px;width:282px;height:1px;background:#4a4a4a;"></div>
<div id="f189" style="position:absolute;left:1597px;top:471px;font-size:11.5px;line-height:13.5px;font-weight:500;color:#f0f0f0;white-space:nowrap;transform-origin:0 0;transform:scaleX(0.9738);-webkit-text-stroke:0.2px #f0f0f0;">bloc texte dim auto</div>
<div style="position:absolute;left:1564px;top:488px;width:282px;height:1px;background:#4a4a4a;"></div>
<div style="position:absolute;left:1558px;top:596px;width:294px;height:1px;background:#4a4a4a;"></div>
<svg style="position:absolute;left:1702px;top:603px;" width="16" height="13" viewBox="0 0 16 13"><path d="M0.5 1.5 L5.5 1.5 L7 3 L15 3 L15 12.5 L0.5 12.5 Z" fill="#cfcfcf"/></svg>
<svg style="position:absolute;left:1728px;top:602px;" width="20" height="15" viewBox="0 0 20 15"><rect x="1.5" y="1.5" width="8" height="8" fill="none" stroke="#cfcfcf" stroke-width="1.2"/><rect x="4.5" y="4.5" width="8" height="8" fill="#cfcfcf" stroke="#333"/><path d="M14 6 A4 4 0 0 1 14 12" fill="none" stroke="#9a9a9a"/></svg>
<svg style="position:absolute;left:1756px;top:602px;" width="20" height="15" viewBox="0 0 20 15"><rect x="1.5" y="2" width="10" height="10" fill="none" stroke="#cfcfcf" stroke-width="1.2" stroke-dasharray="2 1.5"/><path d="M14 10 L18 4" stroke="#cfcfcf" stroke-width="1.3"/></svg>
<svg style="position:absolute;left:1787px;top:602px;" width="14" height="14" viewBox="0 0 14 14"><rect x="1" y="1" width="12" height="12" fill="none" stroke="#cfcfcf" stroke-width="1.2"/><path d="M7 4 L7 10 M4 7 L10 7" stroke="#cfcfcf" stroke-width="1.2"/></svg>
<svg style="position:absolute;left:1814px;top:602px;" width="14" height="14" viewBox="0 0 14 14"><g stroke="#7a7a7a" stroke-width="1.1" fill="none"><rect x="3" y="4" width="8" height="9"/><line x1="1" y1="3" x2="13" y2="3"/><line x1="5" y1="1" x2="9" y2="1"/><line x1="5" y1="6" x2="5" y2="11"/><line x1="7" y1="6" x2="7" y2="11"/><line x1="9" y1="6" x2="9" y2="11"/></g></svg>
<div style="position:absolute;left:1558px;top:621px;width:294px;height:2px;background:#3a3a3a;"></div>
<div style="position:absolute;left:1558px;top:623px;width:294px;height:26px;background:#434343;"></div>
<div style="position:absolute;left:1558px;top:623px;width:149px;height:26px;background:#535353;"></div>
<svg style="position:absolute;left:1567px;top:631px;" width="7" height="11" viewBox="0 0 7 11"><path d="M1 4 L3.5 1.5 L6 4 M1 7 L3.5 9.5 L6 7" fill="none" stroke="#8a8a8a" stroke-width="1"/></svg>
<div id="f190" style="position:absolute;left:1577px;top:630px;font-size:12px;line-height:14px;font-weight:bold;color:#f0f0f0;white-space:nowrap;transform-origin:0 0;transform:scaleX(0.9885);">Styles de paragraphe</div>
<svg style="position:absolute;left:1835px;top:631px;" width="12" height="10" viewBox="0 0 12 10"><g stroke="#cfcfcf" stroke-width="1"><line x1="0" y1="1.5" x2="12" y2="1.5"/><line x1="0" y1="4" x2="12" y2="4"/><line x1="0" y1="6.5" x2="12" y2="6.5"/><line x1="0" y1="9" x2="12" y2="9"/></g></svg>
<div id="f191" style="position:absolute;left:1564px;top:659px;font-size:11.5px;line-height:13.5px;font-weight:500;color:#f0f0f0;white-space:nowrap;transform-origin:0 0;transform:scaleX(0.9646);-webkit-text-stroke:0.2px #f0f0f0;">courant</div>
<div style="position:absolute;left:1800px;top:656px;font-size:12px;line-height:14px;color:#bdbdbd;font-weight:normal;white-space:nowrap;">[a+]</div>
<svg style="position:absolute;left:1830px;top:656px;" width="14" height="17" viewBox="0 0 14 17"><path d="M9 1 L3 9 L7 9 L5 16 L11 7 L7 7 Z" fill="#bdbdbd"/></svg>
<div style="position:absolute;left:1564px;top:677px;width:282px;height:1px;background:#4a4a4a;"></div>
<div id="f192" style="position:absolute;left:1594px;top:682px;font-size:11.5px;line-height:13.5px;font-weight:500;color:#f0f0f0;white-space:nowrap;transform-origin:0 0;transform:scaleX(0.9349);-webkit-text-stroke:0.2px #f0f0f0;">[Paragraphe standard]</div>
<div style="position:absolute;left:1559px;top:699px;width:292px;height:22px;background:#4b6a8b;"></div>
<div id="f193" style="position:absolute;left:1594px;top:704px;font-size:11.5px;line-height:13.5px;font-weight:bold;color:#ffffff;white-space:nowrap;transform-origin:0 0;transform:scaleX(0.9248);">courant</div>
<div id="f194" style="position:absolute;left:1594px;top:726px;font-size:11.5px;line-height:13.5px;font-weight:500;color:#f0f0f0;white-space:nowrap;transform-origin:0 0;transform:scaleX(0.9279);-webkit-text-stroke:0.2px #f0f0f0;">modele</div>
<div style="position:absolute;left:1564px;top:743px;width:282px;height:1px;background:#4a4a4a;"></div>
<svg style="position:absolute;left:1565px;top:748px;" width="15" height="15" viewBox="0 0 15 15"><rect x="1" y="1" width="12" height="12" fill="none" stroke="#bdbdbd" stroke-width="1.1"/><path d="M3 11 L9 5 M6 5 L9 5 L9 8" stroke="#bdbdbd" stroke-width="1.2" fill="none"/></svg>
<svg style="position:absolute;left:1730px;top:749px;" width="16" height="13" viewBox="0 0 16 13"><path d="M0.5 1.5 L5.5 1.5 L7 3 L15 3 L15 12.5 L0.5 12.5 Z" fill="#cfcfcf"/></svg>
<div style="position:absolute;left:1757px;top:746px;font-size:13px;line-height:15px;color:#7a7a7a;font-weight:bold;white-space:nowrap;">¶</div>
<svg style="position:absolute;left:1787px;top:748px;" width="14" height="14" viewBox="0 0 14 14"><rect x="1" y="1" width="12" height="12" fill="none" stroke="#cfcfcf" stroke-width="1.2"/><path d="M7 4 L7 10 M4 7 L10 7" stroke="#cfcfcf" stroke-width="1.2"/></svg>
<svg style="position:absolute;left:1814px;top:748px;" width="14" height="14" viewBox="0 0 14 14"><g stroke="#cfcfcf" stroke-width="1.1" fill="none"><rect x="3" y="4" width="8" height="9"/><line x1="1" y1="3" x2="13" y2="3"/><line x1="5" y1="1" x2="9" y2="1"/><line x1="5" y1="6" x2="5" y2="11"/><line x1="7" y1="6" x2="7" y2="11"/><line x1="9" y1="6" x2="9" y2="11"/></g></svg>
<div style="position:absolute;left:1558px;top:768px;width:294px;height:7px;background:#3f3f3f;"></div>
</body></html>
